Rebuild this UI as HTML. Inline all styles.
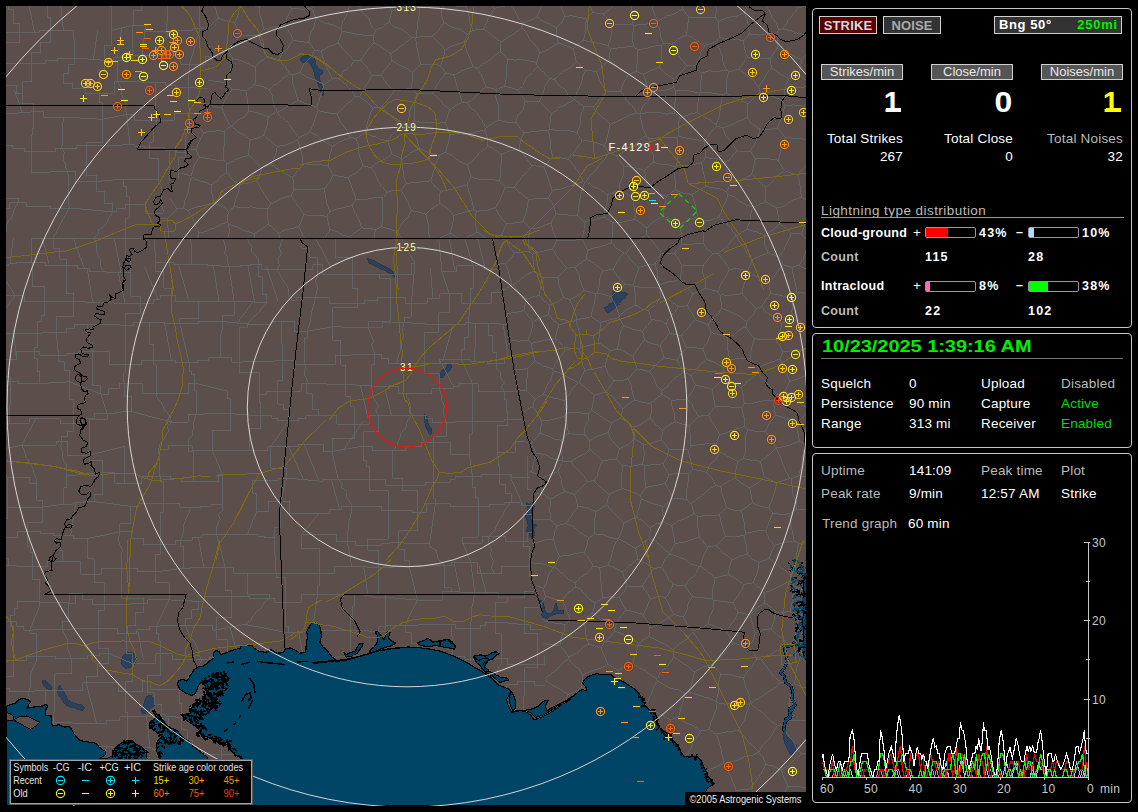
<!DOCTYPE html>
<html><head><meta charset="utf-8"><title>NexStorm</title>
<style>
html,body{margin:0;padding:0;background:#000;}
body{width:1138px;height:812px;overflow:hidden;position:relative;font-family:"Liberation Sans",sans-serif;}
.pn{position:absolute;border:1px solid #c8c8c8;border-radius:4px;box-sizing:content-box;}
.btn{position:absolute;border:1px solid #d0d0d0;text-align:center;white-space:nowrap;}
.t{position:absolute;font-size:13.5px;line-height:16px;white-space:nowrap;letter-spacing:0.2px;}
.b{font-weight:bold;font-size:12.5px;letter-spacing:0.3px;}
.r{text-align:right;}
.big{font-size:29px;line-height:30px;letter-spacing:0;}
.bar{position:absolute;width:49px;height:9px;border:1px solid #999;border-radius:2px;}
.bar i{display:block;height:9px;}
#map{position:absolute;left:6px;top:6px;width:800px;height:800px;overflow:hidden;background:#5c4e4a;}
svg text{font-family:"Liberation Sans",sans-serif;}
</style></head><body>
<div id="map">
<svg width="800" height="800" viewBox="6 6 800 800" style="position:absolute;left:0;top:0" shape-rendering="crispEdges">
<path d="M6 706.4 L10.5 704.6 L15.8 702.8 L19.3 699.3 L23.7 698.5 L28.1 699.7 L30.8 702 L29 704.6 L27.2 708.1 L32.5 707.2 L42.2 706 L46 704.6 L47.5 706.4 L46 709 L45.3 715.1 L51 716 L51.8 723.9 L52.7 726 L58.9 724.8 L64.1 727.1 L69.4 726.6 L72.1 730.1 L73.8 733.6 L77.3 738 L80 740.6 L85.2 741.5 L91.4 742.4 L95.8 743.3 L98.4 745.9 L101.9 749.4 L105.4 751.2 L105.4 754.7 L100.2 758.2 L106 759 L112 756 L114 750.3 L116.9 746 L121 743.3 L127.4 740.5 L132.3 740.5 L136.6 744.7 L142.2 747.5 L147 751.7 L146.4 757.3 L148 759.5 L160.5 759.5 L156.2 750.3 L157 741.9 L161.9 736.2 L156.2 732 L149.2 726.4 L149.9 722.2 L153.4 720 L156.2 716.6 L153.4 712.3 L152.5 710.2 L154.1 710.2 L157.6 715.1 L163.3 722.2 L170.3 727.8 L177.3 730.6 L180.1 734.8 L184.4 739 L190 741.9 L192.8 746.1 L198.4 750.3 L206.8 756.6 L208 759.5 L243 759.5 L240.6 757.3 L235 754.5 L230.8 750.3 L228 743.3 L223.7 741.9 L219.5 744.7 L215.3 739 L209.7 737.6 L204 736.2 L201.2 733.4 L198.4 729.2 L195.6 726.4 L191.4 723.6 L187.2 720.8 L183 718 L184.4 715.1 L190 713.7 L191.4 708.1 L195.6 703.9 L201.2 701.1 L204 696.9 L206.8 692.7 L205.4 687 L204 682.8 L203.6 681.3 L200.1 683.1 L197.5 687.5 L195.7 693.6 L191.3 695.4 L185.1 692.7 L179.9 689.2 L177.2 683.9 L179 680.4 L183.4 679.5 L186.9 681.3 L190.4 675.1 L193.9 669.9 L197.5 667.2 L202.7 666.4 L208 662.8 L210.6 660.2 L214.1 657.6 L213.3 653.2 L215.9 650.5 L219.4 651.4 L220.3 654.9 L227.3 652.3 L234.4 649.7 L240.5 647.9 L241.4 645.3 L251.9 645.6 L253.7 647.9 L259 651.4 L266 652.3 L271.3 649.7 L276.5 653.2 L283.6 652.7 L285.3 648.8 L290.6 647.9 L295.9 650.5 L299.4 653.2 L304.1 652.7 L305.8 652.7 L306.2 643.9 L307.6 636.9 L306.7 631.6 L308.5 628.1 L311.1 623.7 L312.8 622.5 L315.5 622.8 L319 624.6 L320.8 629.9 L321.3 636.9 L319.9 642.2 L322.5 646.6 L326 649.2 L328.7 652.7 L332.2 657.1 L334.8 658.9 L335.7 661.5 L342.7 660.6 L351.5 658.9 L360.3 656.2 L369.1 653.6 L377.9 651 L388.4 649.2 L399 647.8 L409.5 647.1 L420.1 647.8 L430.6 649.2 L439.4 651 L447 653.6 L454.1 656.2 L461.1 659.8 L468.1 663.3 L475.1 667.7 L481.3 671.2 L486.6 674.7 L491 677.3 L494.5 680.8 L498.9 685.2 L503.3 687 L508.5 688.8 L511.2 691.4 L513.8 695.8 L515.6 701.9 L515.2 708.1 L512.1 712.5 L515.6 711.1 L522.6 710.7 L527.9 709.8 L533.1 708.6 L538.4 706.3 L541.1 703.7 L543.7 701.1 L548.1 700.5 L546.3 703.7 L545.4 707.2 L547.2 710.7 L552.5 707.2 L559.5 703.7 L566.5 700.2 L573.6 695.8 L578.8 691.4 L582.4 689.6 L585.9 690.5 L586.7 687.9 L584.1 685.2 L582.4 682.6 L585 679.1 L588.5 676.4 L592.9 674.7 L597.3 673.5 L599.9 674.7 L605.2 674.2 L611.4 674.7 L614 677.3 L619.3 680 L626.3 683.5 L631.6 687 L636.4 690.5 L639.9 694.9 L642.5 700.2 L642.5 700 L645.1 705.3 L649.5 709.7 L654.8 712.3 L656.6 717.6 L657.5 722.8 L660.1 728.1 L664.5 731.6 L670.6 735.1 L672.4 739.5 L675.9 743.1 L679.4 748.3 L681.2 752.7 L683.8 756.2 L690.8 756.2 L697.9 757.1 L701.4 760.6 L703.1 765.9 L705.8 770.3 L707.5 775.6 L711.9 780.8 L713.7 784.4 L710.2 786.1 L707.5 787.9 L705.8 791.4 L706 806 L6 806Z" fill="#004466" stroke="#000" stroke-width="1.2"/>
<path d="M806.5 572 L804.5 576 L803.2 584 L804 592 L802.8 600 L803.5 612 L802.5 622 L803.5 634 L803 646 L804 656 L806.5 660Z" fill="#004466" stroke="#000" stroke-width="1.2"/>
<path d="M343.6 651.8 L346.2 654.5 L350.6 652.7 L355 651 L357.7 646.6 L360.3 643.1 L362.9 643.9 L362.1 646.6 L359.4 650.1 L356.8 653.6 L351.5 656.2 L346.2 657.1Z" fill="#004466" stroke="#000" stroke-width="1.2"/>
<path d="M370 650.1 L374.4 646.6 L377 643.1 L377.9 636.9 L375.2 631.6 L377.9 631.6 L381.4 636 L384 639.5 L385.8 635.1 L387.5 631.3 L390.2 632.5 L388.4 637.8 L391.1 640.4 L395.4 643.1 L391.9 645.7 L385.8 647.1 L379.6 649.2 L374.4 651.8 L370 652.7Z" fill="#004466" stroke="#000" stroke-width="1.2"/>
<path d="M417.4 643.1 L420.1 641.8 L423.6 640.8 L428 638.3 L430.6 640.1 L432.4 642.2 L437.6 641.3 L442.9 640.1 L448.2 639.5 L451.7 641.3 L455.2 646 L454.3 648.9 L449.1 647.5 L444.7 646.6 L439.4 646 L434.1 645.7 L428.8 646.6 L423.6 646 L419.2 644.8Z" fill="#004466" stroke="#000" stroke-width="1.2"/>
<path d="M440 641.3 L443.5 640.4 L447.9 639.5 L450.5 642.2 L453.2 643.9 L455.5 647.1 L454.1 649.2 L448.8 647.8 L443.5 647.1 L440 646Z" fill="#004466" stroke="#000" stroke-width="1.2"/>
<path d="M473.4 656.2 L476.9 655.4 L481.3 654.8 L484.8 656.2 L489.2 654.5 L492.7 652.4 L496.2 651.8 L498.9 653.6 L495.4 655.9 L492.7 658.9 L488.3 660.6 L485.7 664.1 L483.9 667.7 L486.6 670.3 L491 672.1 L496.2 674.7 L500.6 677.3 L507.7 678.2 L508.5 680 L503.3 681.2 L499.8 682.6 L496.2 679.1 L491.8 675.6 L486.6 672.9 L482.2 669.4 L480.4 665 L477.8 661.5 L475.1 659.8Z" fill="#004466" stroke="#000" stroke-width="1.2"/>
<path d="M473.7 656.2 L476.3 658.9 L478.9 660.6 L481.6 658.9 L485.1 658 L488.6 658.9 L487.7 661.5 L483.3 663.3 L485.1 667.7 L488.6 670.3 L486.8 672.1 L482.4 669.4 L479.8 665 L476.3 662.4Z" fill="#004466" stroke="#000" stroke-width="1.2"/>
<path d="M14.1 719.5 L19.3 716.9 L26.4 716 L34.3 719.5 L39.5 722.2 L36 726 L30.8 729.2 L26.4 727.5 L21.1 723.9 L15.8 721.3Z" fill="#5c4e4a" stroke="#000" stroke-width="1"/>
<path d="M6.2 712.5 L9.7 713.4 L13.2 716 L14.1 719.5 L10.5 720.8 L6.2 720.8Z" fill="#5c4e4a" stroke="#000" stroke-width="1"/>
<path d="M511.2 691.4 L508.9 694.9 L506.8 699.3 L507.7 704.6 L510.3 709.8 L512.1 712.7 L512.8 710.4 L510.3 705.4 L509.1 700.2 L509.9 695.8Z" fill="#5c4e4a" stroke="#000" stroke-width="1"/>
<path d="M522.6 711.1 L527.9 712.7 L531.4 716 L534 719.9 L538.4 718.3 L543.7 716.2 L549 713.5 L554.2 710 L557.8 707.4 L561.3 704.7 L560.4 704 L556 706.9 L550.7 710.7 L545.4 713.9 L540.2 716 L535.8 717.4 L533.1 715.1 L530.5 712.5 L526.1 710.7Z" fill="#5c4e4a" stroke="#000" stroke-width="1"/>
<path d="M563 702.8 L570.1 698.4 L570.4 699.3 L563.9 703.7Z" fill="#5c4e4a" stroke="#000" stroke-width="1"/>
<path d="M299.9 59.1 L304.5 55.4 L310.1 55.4 L314.7 58.2 L315.6 64.6 L319.3 69.3 L323 71.1 L322.1 73.9 L319.3 75.7 L320.2 81.3 L323 88.6 L323 96 L321.1 92.3 L318.4 84.9 L315.6 77.6 L313.7 71.1 L311 64.6 L307.3 60.9 L302.7 62.8Z" fill="#2a405c" stroke="#22364f" stroke-width="0.8"/>
<path d="M613.3 291.2 L618.1 292.8 L622.9 292 L627.7 293.6 L625.3 297.6 L622.1 300 L619.7 303.2 L616.5 305.6 L614.1 308.8 L610.9 311.2 L607.7 313.3 L605.6 310.4 L604 307.2 L606.9 306.9 L609.3 304 L612.5 303.2 L613.3 299.2 L612.5 295.2Z" fill="#2a405c" stroke="#22364f" stroke-width="0.8"/>
<path d="M539.3 600 L541.9 603.5 L542.8 608.8 L541.6 615.8 L543.7 617.6 L547.2 619.3 L549.8 616.7 L553.4 614.9 L557.8 613.2 L563 613.7 L563.9 610.9 L561.3 610.2 L557.4 610.9 L556.9 603.5 L555.1 603.5 L554.2 608.8 L552.5 612.3 L549.8 613.7 L546.3 613.2 L544.6 608.8 L543.7 603.5 L541.9 600Z" fill="#2a405c" stroke="#22364f" stroke-width="0.8"/>
<path d="M784 729.9 L785.7 735.1 L791 740.4 L796.3 745.7 L795.4 752.7 L790.1 754.5 L787.5 749.2 L784.9 743.9 L783.1 735.1Z" fill="#2a405c" stroke="#22364f" stroke-width="0.8"/>
<path d="M367.4 258.6 L372.8 260.1 L381.8 264.8 L390.9 269.5 L396.3 275.6 L393.4 275.9 L385.4 270.9 L376.4 266.6 L369.2 263Z" fill="#2a405c" stroke="#22364f" stroke-width="0.8"/>
<path d="M386.2 270 L390.9 270 L396.3 276.5 L393.4 276.5Z" fill="#2a405c" stroke="#22364f" stroke-width="0.8"/>
<path d="M439.1 377.4 L441.5 370.4 L446.6 366.9 L448 363.4 L452 365.7 L449.7 370.4 L445 373.9 L442.6 377.9Z" fill="#2a405c" stroke="#22364f" stroke-width="0.8"/>
<path d="M424.3 413.8 L426.3 416.7 L428.3 417.7 L427.3 421.7 L429.3 425.6 L431.6 428.6 L431.6 432.5 L430.2 434.5 L428.3 431.5 L426.3 427.6 L424.9 422.7 L424.3 417.7Z" fill="#2a405c" stroke="#22364f" stroke-width="0.8"/>
<path d="M526.2 502.5 L529.8 504.4 L533.3 501.5 L534.1 506.4 L531.7 512.3 L530.7 518.2 L532.7 524.1 L536.7 525.1 L533.7 529.1 L534.7 534 L532.7 538.9 L529.8 536.9 L528.8 532 L525.8 531 L528.2 526.1 L526.8 520.2 L525.4 516.3 L527.4 511.3 L527.8 507.4Z" fill="#2a405c" stroke="#22364f" stroke-width="0.8"/>
<path d="M123 655.9 L126.5 652.9 L130.9 651.9 L135.3 654.1 L136.7 659.4 L134.4 664.7 L130.1 667.7 L125.1 668.2 L122.1 665.6 L121.3 660.3Z" fill="#2a405c" stroke="#22364f" stroke-width="0.8"/>
<path d="M42.2 680.5 L45.7 680.5 L49.2 684 L51.8 687.5 L51 689.6 L46.6 688.8 L43.9 685.8Z" fill="#2a405c" stroke="#22364f" stroke-width="0.8"/>
<path d="M57.1 691.1 L59.8 684.9 L61.2 688.4 L63.6 691.1 L65.9 695.4 L67.7 699.8 L72.1 702.5 L77.3 704.2 L82.6 705.1 L84.7 708.1 L82.6 710.9 L78.2 709.5 L73.8 707.4 L69.4 706.9 L65 704.2 L61.5 699 L58.9 695.4Z" fill="#2a405c" stroke="#22364f" stroke-width="0.8"/>
<path d="M140.6 709.5 L144.1 702.5 L146.7 696.3 L151.1 695.4 L154.7 699.8 L154.7 705.1 L149.4 709.5 L145.9 713 L142.4 713Z" fill="#2a405c" stroke="#22364f" stroke-width="0.8"/>
<path d="M793.6 585.8 L801.3 589.4 L803.2 589.5 M793.6 585.8 L793.1 594.4 L792 602.8 L790.2 611.2 M790.2 611.2 L797.6 617.2 M797.6 617.2 L802.6 615.6 M806 269.2 L805.9 269.1 L798.3 265.3 M796.6 292.4 L806 293.2 M796.6 292.4 L795.7 284 L793.3 275.8 L792.1 267.4 M792.1 267.4 L798.3 265.3 M798.3 265.3 L803 258.5 L806 251.4 M801.3 233.7 L806 239.1 M801.3 233.7 L804.2 226.4 L806 224.2 M791.4 233.7 L801.3 233.7 M791.4 233.7 L786 228.2 L779.4 224 M801.7 197.2 L806 199.9 M801.7 197.2 L792.9 199.8 L785.3 205.3 L776.5 207.9 M779.4 224 L778.3 215.9 L776.5 207.9 M797.6 617.2 L796.8 626 L795.4 634.8 L792.9 643.4 M801.9 650.7 L792.9 643.4 M801.9 650.7 L799.8 658.9 L796.9 667 L795.7 675.3 L794.4 683.7 M806 688 L802.2 687.1 L794.4 683.7 M668.8 474.5 L663 463.9 M668.8 474.5 L678.7 473.4 L688.7 473.5 M663 463.9 L667.2 456.9 L669 449 M688.7 473.5 L692.6 469.7 M692.6 469.7 L690.5 459.4 L687.8 449.3 M687.8 449.3 L678.4 449.4 L669 449 M668.8 474.5 L665.2 483.4 M688.7 473.5 L688.2 482.4 L686.4 491.2 L687.1 500.1 M687.1 500.1 L680.3 498.3 L673.2 498.2 M665.2 483.4 L669.2 490.8 L673.2 498.2 M663 463.9 L653.8 464.5 L644.7 465.7 M665.2 483.4 L655.7 485.6 L646.1 487.3 M644.7 465.7 L644.6 472.9 L644.9 480.1 L646.1 487.3 M673.2 498.2 L662.8 506.7 M662.8 506.7 L655.5 504.6 L648.4 501.8 L641.3 499 M641.3 499 L640 495.3 M640 495.3 L646.1 487.3 M636.3 517.2 L643.9 521.7 L650.3 527.8 M636.3 517.2 L639 508.1 L641.3 499 M662.8 506.7 L662.9 514.2 L663.6 521.6 M650.3 527.8 L656.5 523.7 L663.6 521.6 M692.6 469.7 L699.6 470.2 L706.3 472.5 M687.1 500.1 L691.3 503.8 M691.3 503.8 L697.2 498.9 L703.3 494.3 L709.3 489.3 L715.9 485.2 M706.3 472.5 L712 478.2 L715.9 485.2 M786.7 806 L780.9 801.9 M780.9 801.9 L784 793.7 L788.2 786 M788.2 786 L795.4 786.7 L802.6 787.1 L806 787.7 M791.8 296 L792.6 303.9 L791.8 311.8 L792.7 319.7 M791.8 296 L796.6 292.4 M806 324.2 L799.4 322.8 L792.7 319.7 M806 569.4 L803.7 569.7 L795.4 569.8 M793.6 585.8 L790.2 581.2 M790.2 581.2 L790.6 574.8 M795.4 569.8 L790.6 574.8 M790.2 581.2 L783.7 584.2 L777.2 587.3 L770.8 590.7 L763.9 592.6 M763.9 592.6 L758.5 587.7 L753.2 582.7 M753.2 582.7 L757.1 572.9 L758.9 562.5 M758.9 562.5 L769.1 558.2 M790.6 574.8 L783.3 569.3 L775.9 564.1 L769.1 558.2 M795.4 569.8 L796 561 L796.7 552.2 L798.4 543.5 M769.1 558.2 L774.3 545.4 M774.3 545.4 L784.1 542.4 L794.2 541.1 M798.4 543.5 L794.2 541.1 M774.3 545.4 L769 538.6 L765.7 530.6 M772.8 512.9 L769.2 521.7 L765.7 530.6 M772.8 512.9 L781.3 514.6 L789.9 513.7 M794.2 541.1 L792.4 532 L790.2 523 L789.9 513.7 M776.6 395.4 L772.6 389.2 L767.6 384 L762.6 378.7 L757.6 373.4 M776.6 395.4 L773.6 400.5 M773.6 400.5 L766.1 400.3 L758.8 401.9 L751.6 403.4 L744.1 403.7 M744.1 403.7 L743.5 395.7 L741.6 388 M741.6 388 L746.1 382.2 L752 378 L757.6 373.4 M706.9 359.4 L700.8 364 L696.2 370 L690.5 375 M706.9 359.4 L715.2 362.8 L723.2 367 M723.2 367 L723.8 377.1 M723.8 377.1 L718.6 383.7 L712.4 389.3 M712.4 389.3 L704.1 386.9 L695.7 385.3 M695.7 385.3 L690.5 375 M744.1 403.7 L741.7 407.7 M741.6 388 L732.9 382.2 L723.8 377.1 M741.7 407.7 L732.9 407.3 L724.2 406.3 L715.4 406.2 M715.4 406.2 L713.4 397.9 L712.4 389.3 M726.4 507.7 L733.8 510.3 L741.6 510.5 M726.4 507.7 L719.8 514.5 M719.8 514.5 L721.2 521.9 L723 529.3 L725.6 536.4 M741.6 510.5 L743.3 518.1 L744.6 525.8 L745.4 533.5 M725.6 536.4 L734.8 537.1 L744 535.3 M745.4 533.5 L744 535.3 M758.9 562.5 L752.6 559.1 L747.3 554.1 M765.7 530.6 L755.4 531.1 L745.4 533.5 M747.3 554.1 L746.1 544.6 L744 535.3 M699.3 537.2 L697.9 527 L697.5 516.8 M699.3 537.2 L691.4 539.7 L683.5 542.1 L675.2 543.4 M675.2 543.4 L673.7 534.5 L671.7 525.8 M671.7 525.8 L678.7 520.8 L686.7 517.9 L694.1 513.6 M694.1 513.6 L697.5 516.8 M691.3 503.8 L694.1 513.6 M663.6 521.6 L671.7 525.8 M720.9 486.8 L715.9 485.2 M720.9 486.8 L721.9 494 L724.7 500.7 L726.4 507.7 M719.8 514.5 L712.5 515.9 L704.9 515.3 L697.5 516.8 M683.4 372.2 L690.5 375 M683.4 372.2 L677.3 376.2 L671.8 380.9 L667.2 386.5 L661.4 390.8 M686.8 398.9 L691.6 392.3 L695.7 385.3 M686.8 398.9 L679.1 399.6 L671.4 400.5 M671.4 400.5 L661.5 394.5 M661.4 390.8 L661.5 394.5 M642.6 464.1 L632.9 466.1 L623 465.9 M642.6 464.1 L644.1 454.5 L643.8 444.7 M643.8 444.7 L634.9 439 M634.9 439 L627.7 444.8 L619.4 448.9 M619.4 448.9 L616.7 459.2 M623 465.9 L616.7 459.2 M644.7 465.7 L642.6 464.1 M621.9 488.4 L621.2 480.8 L621.8 473.3 L623 465.9 M621.9 488.4 L631.1 491.5 L640 495.3 M669 449 L661.4 439.7 M661.4 439.7 L652.8 442.8 L643.8 444.7 M609.3 494.4 L601 488.1 L593.6 480.8 M609.3 494.4 L621.9 488.4 M593.6 480.8 L597 474.5 L599.6 467.8 L602.4 461.2 M602.4 461.2 L609.5 459.6 L616.7 459.2 M771 806 L780.9 801.9 M767.3 806 L762.5 800.9 L756.1 795.3 L750.6 788.8 M750.6 788.8 L754.2 782.6 L759.1 777.2 L762.5 770.8 L765.8 764.4 M788.2 786 L784 778.3 L781.2 769.9 M781.2 769.9 L773.8 766.3 L765.8 764.4 M736.2 791 L733.8 783.9 L730.9 776.9 L727.8 770.1 L724 763.5 M736.2 791 L743.3 789.3 L750.6 788.8 M724 763.5 L731 761.6 L738.2 760 L744.8 756.7 L752.1 755.4 L758.8 752.3 M765.8 764.4 L763.3 757.8 L758.8 752.3 M609.3 494.4 L606.6 504.8 M593.6 480.8 L587.3 481.4 M574.5 494.4 L580.7 487.8 L587.3 481.4 M574.5 494.4 L578.1 506.1 M578.1 506.1 L587.4 507.9 L596.1 511.6 M606.6 504.8 L596.1 511.6 M636.3 517.2 L623.9 523.1 M606.6 504.8 L612 511.2 L618.1 517 L623.9 523.1 M732.8 602.8 L738 612.1 M732.8 602.8 L723.4 601.5 L714 600.5 M708.7 623.7 L709.4 615.8 L713.4 608.5 L714 600.5 M708.7 623.7 L717.5 627.2 L726.4 630.5 M726.4 630.5 L730.4 624.5 L735.2 619 L738 612.1 M779.8 359 L783.9 366 L786.3 373.9 L790.2 381.1 M779.8 359 L783 351.7 M783 351.7 L791.4 351 L799.7 349.1 L806 348.8 M806 375.6 L803.6 376.2 L797.2 379.5 L790.2 381.1 M784.9 391.3 L790.2 381.1 M784.9 391.3 L776.6 395.4 M758.1 367.5 L757.6 373.4 M758.1 367.5 L765.3 364.6 L772.6 361.8 L779.8 359 M792.7 319.7 L781.9 323.5 M776.5 339.8 L779.8 331.8 L781.9 323.5 M776.5 339.8 L783 351.7 M784.9 391.3 L791.1 395 L797.1 398.9 L801.8 404.8 L806 406.8 M772.8 512.9 L768.5 507.8 M741.6 510.5 L752.6 502.8 M768.5 507.8 L760.3 506.3 L752.6 502.8 M735 478.3 L727.4 481.6 L720.9 486.8 M735 478.3 L742.1 483.5 L749.7 487.8 M752.6 502.8 L751.2 495.3 L749.7 487.8 M798.4 543.5 L806 542.6 M806 509.6 L796.6 509.3 M796.6 509.3 L789.9 513.7 M773.6 400.5 L774.2 407.8 L775.7 415 M806 412.5 L803.2 416.4 L797.5 423.7 M797.5 423.7 L790.6 419.9 L783.2 417.3 L775.7 415 M721.4 308.3 L728.1 310.7 L734.5 314 L740.8 317.3 L746.5 321.7 M721.4 308.3 L720.5 294.7 M720.5 294.7 L727.9 295.5 L735.2 294.5 L742.6 293.5 M746.5 321.7 L752.4 315.7 L756.6 308.4 M742.6 293.5 L749.3 301.3 L756.6 308.4 M791.8 296 L784.6 296.4 L777.6 294.5 L770.6 293.7 M781.9 323.5 L775.9 317 L767.6 313.3 L761.5 306.9 M770.6 293.7 L765.6 300 L761.5 306.9 M754.1 338.5 L749.6 332.9 L745.9 326.9 M754.1 338.5 L751.3 348.4 L750 358.6 M745.9 326.9 L739.3 329.7 L734 334.9 L727.2 337.3 M727.2 337.3 L727.1 345 L728.2 352.5 L730.4 359.8 M750 358.6 L740.1 358.2 L730.4 359.8 M746.5 321.7 L745.9 326.9 M776.5 339.8 L769 339.8 L761.5 339.9 L754.1 338.5 M761.5 306.9 L756.6 308.4 M758.1 367.5 L750 358.6 M723.2 367 L730.4 359.8 M801.7 197.2 L800.2 189.9 L799.9 182.4 L797.5 175.3 M765.7 201.8 L776.5 207.9 M765.7 201.8 L765.6 187.8 M765.6 187.8 L771.7 182 L777.4 175.8 L784.3 170.9 M797.5 175.3 L784.3 170.9 M715.9 125.1 L718.8 117.9 L720.1 110.3 L721.3 102.6 L722.6 95 M715.9 125.1 L710.1 120.3 L703.7 116.4 L697.4 112.4 M697.4 112.4 L697.9 102.7 L699.4 93.1 M722.6 95 L715.3 93.4 L708 92.6 L700.6 92.1 M700.6 92.1 L699.4 93.1 M716.5 126.4 L722.4 127.9 M722.4 127.9 L731 125 L739.2 121.1 L747.5 117.5 M747.5 117.5 L747.8 104 M726.2 92.6 L733 97.2 L740.7 100 L747.8 104 M726.2 92.6 L722.6 95 M675.3 90 L675.7 97.7 L674.4 105.4 L675 113.2 M675.3 90 L683.5 90 L691.4 91.6 L699.4 93.1 M679.5 118 L688.2 114.5 L697.4 112.4 M679.5 118 L675 113.2 M701.7 72.6 L709.8 70.9 L718.2 71.6 L726.2 69.9 M701.7 72.6 L700.8 82.3 L700.6 92.1 M726.2 69.9 L729.1 71.8 M726.2 92.6 L727 85.7 L726.9 78.6 L729.1 71.8 M765.6 187.8 L758.8 181 L751.8 174.3 M778 160.1 L784.3 170.9 M778 160.1 L770.4 159 L762.7 158.7 L755.1 158.5 M755.1 158.5 L753.6 166.4 L751.8 174.3 M777.2 127.9 L785.2 137 M777.2 127.9 L768.7 129.8 L760 129.2 M760 129.2 L757.7 136.9 L754.4 144.2 L750.3 151.1 M778 160.1 L780.4 152.4 L782.4 144.6 L785.2 137 M755.1 158.5 L750.3 151.1 M722.4 127.9 L726.1 135.9 L732.4 142.4 L736.1 150.5 M760 129.2 L752.9 124.3 L747.5 117.5 M750.3 151.1 L743.2 152 L736.1 150.5 M603.2 14.1 L610.8 8.4 L612.7 6 M603.2 14.1 L592.4 12.4 M590.3 6 L592.4 12.4 M582.6 140.8 L577.3 146.5 L572.7 152.8 L568.4 159.3 M582.6 140.8 L577 132.5 M568.4 159.3 L560.8 157.7 L553 157.4 M548.5 130.6 L550.2 139.5 L550.5 148.7 L553 157.4 M548.5 130.6 L549.7 129.3 M577 132.5 L568 130.7 L558.7 130.8 L549.7 129.3 M596.6 71.4 L598.9 78.3 L602.1 84.8 L606.2 90.9 M596.6 71.4 L585.8 70.4 M585.8 70.4 L582.4 77.5 L580.5 85.2 L576.9 92.3 L574.2 99.7 M606.2 90.9 L600.3 99.1 L593.4 106.5 M593.4 106.5 L584.3 106.7 M584.3 106.7 L574.2 99.7 M604.3 145.3 L597.3 143 L590.1 141.1 L582.6 140.8 M604.3 145.3 L606.9 138.5 L608.6 131.4 L610.1 124.3 M610.1 124.3 L604.2 118.7 L598.2 113.1 L593.4 106.5 M577 132.5 L580.5 124.2 L580.8 115 L584.3 106.7 M548.5 130.6 L540.4 130.8 L532.3 131.7 L524.2 132.8 M524.2 132.8 L520.4 140.5 L519 149.1 M519 149.1 L525.6 157.2 L531.7 165.7 M553 157.4 L543.8 166.4 M543.8 166.4 L531.7 165.7 M568.4 159.3 L574.3 166.2 L579.5 173.5 L583.9 181.3 M543.8 166.4 L546.8 174.3 L549.5 182.3 L552.2 190.3 M583.9 181.3 L576.2 184.1 L568.2 186.4 L560.4 189.1 L552.2 190.3 M531.7 165.7 L527.9 171.6 L522.3 176.1 L518.4 181.9 L513.7 187.1 M513.7 187.1 L521.1 193.5 L528.7 199.6 M528.7 199.6 L538.6 198.3 L548.6 198.3 M552.2 190.3 L548.6 198.3 M565.8 491.6 L562.1 485.5 L561.2 478.2 L557.7 471.9 M565.8 491.6 L557.9 494.8 L550.9 499.4 M557.7 471.9 L549.8 474.5 L542.4 478.3 M550.9 499.4 L541.8 493 M542.4 478.3 L540.9 485.6 L541.8 493 M550.9 499.4 L549.7 509.5 L550.8 519.7 M550.8 519.7 L543.6 520 L536.5 519.6 L532.4 519 M541.8 493 L533.3 494.8 L532.4 495.3 M542.4 478.3 L531.7 471.5 M529.4 472.3 L531.7 471.5 M706.9 359.4 L702.7 349.2 M727.2 337.3 L719.3 334.9 L711.3 332.3 M702.7 349.2 L708 341.2 L711.3 332.3 M721.4 308.3 L717.9 314.6 L711.9 318.8 L707.9 324.7 M707.9 324.7 L711.3 332.3 M753.2 207 L750.6 214.4 L749.9 222.3 L746.6 229.4 M753.2 207 L765.7 201.8 M779.4 224 L772.2 230.4 L763.9 235.5 M763.9 235.5 L755.5 231.7 L746.6 229.4 M716.5 126.4 L709.5 133.5 L703.9 141.7 M679.5 118 L678.1 126.9 L678.4 135.8 M703.9 141.7 L695.5 139.4 L686.8 138.3 L678.4 135.8 M706.3 472.5 L709.7 464.9 L716.1 459.2 L719.7 451.7 M735 478.3 L735.7 469.7 L738 461.3 M738 461.3 L728.7 456.8 L719.7 451.7 M691 445.5 L690.5 435.5 L689.2 425.5 M691 445.5 L699.4 444.8 L707.8 443.6 L716.3 444.1 M716.3 444.1 L719.5 434.8 M719.5 434.8 L716.2 428.1 L712.2 421.9 L708.6 415.4 M689.2 425.5 L699.4 416.1 M699.4 416.1 L708.6 415.4 M687.8 449.3 L691 445.5 M675.2 421.8 L668.3 425.4 L662.3 430.5 M675.2 421.8 L682.1 424 L689.2 425.5 M661.4 439.7 L662.3 430.5 M719.7 451.7 L716.3 444.1 M741.7 407.7 L744 417 L744.3 426.7 M715.4 406.2 L708.6 415.4 M744.3 426.7 L736 429.1 L727.8 432.1 L719.5 434.8 M675.2 421.8 L674.5 414.6 L672.4 407.7 L671.4 400.5 M686.8 398.9 L692 403.9 L694.5 410.9 L699.4 416.1 M701.7 72.6 L694.7 65.5 M715.8 42.4 L719.4 48.9 L722.1 55.7 L723.1 63.2 L726.2 69.9 M715.8 42.4 L704.9 45.4 M694.7 65.5 L699 59.3 L701.1 52 L704.9 45.4 M747.8 6 L744.3 12.5 M715.9 6 L716.2 10.7 L715.5 17.9 M715.5 17.9 L718.3 21.3 M744.3 12.5 L735.9 16.3 L726.8 17.7 L718.3 21.3 M715.8 42.4 L719.7 37.2 M689.1 18 L687.4 26.3 L686.7 34.8 M689.1 18 L697.9 17.1 L706.7 17.7 L715.5 17.9 M704.9 45.4 L698.7 42.1 L692.9 38.1 L686.7 34.8 M719.7 37.2 L718.8 29.3 L718.3 21.3 M578.1 506.1 L573.9 512 L570.1 518.1 L565.5 523.7 M596.1 511.6 L594.9 519 L594.8 526.5 L594.1 533.9 M594.1 533.9 L588.5 537.3 M588.5 537.3 L580.7 533 L573.7 527.4 L565.5 523.7 M574.5 494.4 L565.8 491.6 M550.8 519.7 L557.2 525.7 M565.5 523.7 L557.2 525.7 M725.6 536.4 L716.8 545.4 M699.3 537.2 L708 547.1 M708 547.1 L716.8 545.4 M747.3 554.1 L739.1 556.2 L731.6 560.2 M716.8 545.4 L723.5 553.5 L731.6 560.2 M743.8 584.5 L753.2 582.7 M743.8 584.5 L736.4 579 L728.4 574.5 M728.4 574.5 L729.3 567.2 L731.6 560.2 M611.7 422.8 L608.3 432.5 M611.7 422.8 L620.8 418 M608.3 432.5 L612.9 441.3 L619.4 448.9 M634.9 439 L633.6 427.4 M620.8 418 L627.6 422.2 L633.6 427.4 M662.3 430.5 L655.5 425 L650.2 418.1 M633.6 427.4 L642.2 423.3 L650.2 418.1 M661.5 394.5 L650.9 403.3 M650.9 403.3 L651.7 410.7 L650.2 418.1 M540.4 604.5 L545.5 596.5 M545.5 596.5 L543.4 588.4 M536.4 585.6 L543.4 588.4 M708.7 623.7 L701.4 628.4 L693.3 631 M726.4 630.5 L730.1 637 L733.2 643.7 M713.2 662.4 L720.8 657.1 L726.2 649.5 L733.2 643.7 M713.2 662.4 L709.1 656.3 L704.8 650.4 L701.2 644 L697.1 638 L693.1 631.8 M734.6 793.2 L735.9 801.6 L735.7 806 M734.6 793.2 L736.2 791 M734.6 793.2 L727.1 794.7 L719.4 795.3 L711.9 796.5 L706.4 798.1 M786.3 720.2 L780.9 724.8 M786.3 720.2 L794.5 720.4 L802.6 720.1 L806 720.4 M780.9 724.8 L784.8 730.8 L789 736.6 L793.7 742.1 L796.9 748.7 L802 753.8 M806 753.8 L802 753.8 M780.9 682.1 L793 684.4 M780.9 682.1 L775.4 687.2 L769.3 691.3 L763.1 695.4 L756.5 699 L750.8 703.8 M793 684.4 L791.3 691.5 L789.7 698.6 L789.7 706 L788.5 713.2 L786.3 720.2 M750.8 703.8 L757.2 709.5 L764.5 714.1 L770.2 720.6 L777.3 725.4 M777.3 725.4 L780.9 724.8 M777.3 725.4 L773.1 732.4 L768.7 739.2 L762.7 744.8 L758.8 752 M781.2 769.9 L788.7 765.3 L794.8 758.9 L802 753.8 M712.6 598.5 L702.4 597.8 L692.2 596.7 M712.6 598.5 L713 588.2 L715.2 578 M715.2 578 L708 571.8 L700.4 566 M685.1 585.6 L689.5 578.8 L695.6 573.4 L699.7 566.3 M685.1 585.6 L692.2 596.7 M714 600.5 L712.6 598.5 M683.2 617.1 L687.3 624.7 L693.3 631 M683.2 617.1 L686.9 610.6 L688.1 603 L692.2 596.7 M743.8 584.5 L740.9 591 L737.2 597.2 L732.8 602.8 M728.4 574.5 L715.2 578 M708 547.1 L703.2 556.2 L700.4 566 M792.9 643.4 L787.5 643.3 M780.9 682.1 L775 677.4 L770.6 671.5 L765.7 665.9 L761.1 660.1 M787.5 643.3 L781.6 648.6 L774.4 651.9 L767.5 655.6 L761.1 660.1 M713.2 662.4 L712.9 664.1 M712.9 664.1 L720.7 674.4 M720.7 674.4 L728.5 674.4 L736 676.5 L743.6 678 M743.6 678 L747.3 671.2 L752.5 665.5 L757.1 659.3 M733.2 643.7 L740.9 644.4 L748.3 646.4 M748.3 646.4 L753.8 652.1 L757.1 659.3 M750.5 703.7 L749.4 694.8 L745.5 686.7 L743.6 678 M761.1 660.1 L757.1 659.3 M758.8 752 L753.8 746.4 L747.8 741.7 L743.6 735.3 L738.1 730.2 M738.1 730.2 L742 724 L745.2 717.5 L747.5 710.6 L750.2 703.9 M796.6 509.3 L796.1 501.5 L792.6 494.2 L792.1 486.4 L790.9 478.8 M768.5 507.8 L772.2 499.7 L775 491.3 L776.7 482.6 M789.8 478.5 L776.7 482.6 M749.7 487.8 L757.6 483.1 L764.2 476.7 M776.7 482.6 L764.2 476.7 M805.8 444.9 L803.1 452.4 L802.5 460.5 L800.7 468.2 L798.5 475.8 M806 477.1 L798.5 475.8 M790.9 478.8 L798.5 475.8 M799.4 441 L791.8 444.3 L784.1 446.7 L775.9 447.9 M799.4 441 L805.8 444.9 M789.8 478.5 L785.7 471.1 L782.5 463.4 L779.7 455.4 L775.9 447.9 M797.5 423.7 L797.8 432.4 L799.4 441 M797.5 175.3 L802.8 169.2 L806 166.5 M785.2 137 L793.5 138.5 L802 138.8 L806 139.5 M766.3 6 L769.6 10.9 L772 17.6 L776.3 23.3 L778.7 30.1 M778.7 30.1 L776.8 33.2 M744.3 12.5 L747 19.4 L748.6 26.6 L749.4 33.9 M776.8 33.2 L767.6 33.7 L758.5 35 L749.4 33.9 M719.7 37.2 L727.5 38.9 L735.5 39.3 L743.3 41 M749.4 33.9 L743.3 41 M796.3 6 L798 7.6 M806 6.4 L798 7.6 M782.2 28.9 L778.7 30.1 M782.2 28.9 L787 21.5 L792.7 14.7 L798 7.6 M806 34.4 L799 33.7 L790.7 30.7 L782.2 28.9 M725.5 161.8 L726.3 169.1 L728.5 175.9 L731.2 182.7 M725.5 161.8 L715.8 158.7 L705.6 157.6 M705.6 157.6 L701.5 162.6 M701.5 162.6 L703 170.6 L705 178.5 L705.7 186.6 M705.7 186.6 L712.9 187.6 L720 189 L726.8 191.5 M731.2 182.7 L726.8 191.5 M736.1 150.5 L731.3 156.6 L725.5 161.8 M751.8 174.3 L745.4 178.2 L738.4 180.7 L731.2 182.7 M703.9 141.7 L705.1 149.6 L705.6 157.6 M753.2 207 L746.4 205 L740.2 201.6 L734.7 197 L728 194.8 M728 194.8 L726.8 191.5 M604.3 145.3 L608.5 152.9 M608.5 152.9 L604.7 159.1 L599.5 164.3 L595.8 170.7 L590 175.3 L585.8 181.3 M486.4 127.2 L482.2 120.5 L477.5 114.3 L471.5 109.1 L466.9 102.8 M486.4 127.2 L498 120.1 M498 120.1 L498 112.4 L498.2 104.8 L495.9 97.2 L496.3 89.6 M466.9 102.8 L474.2 98.4 L479.7 91.8 L486.4 86.8 M486.4 86.8 L496.3 89.6 M636.8 112.9 L631.9 105.2 L625.7 98.5 L620.7 91 M636.8 112.9 L639.9 113.6 M640 113.5 L642.7 106.2 L648.4 100.6 L651 93.3 M651 93.3 L646.5 84 L643.3 74.2 M620.7 91 L623.6 82.2 L628.7 74.4 M628.7 74.4 L636.3 71.3 M643.3 74.2 L636.3 71.3 M610.1 124.3 L616.8 121.7 L623.4 118.5 L629.7 114.8 L636.8 112.9 M606.2 90.9 L613.4 91.5 L620.7 91 M646.1 136 L640 139.8 L634.7 144.9 L627.5 147.1 L622.7 152.8 L616.1 155.9 M646.1 136 L643 128.9 L641.3 121.3 L639.9 113.6 M616.1 155.9 L608.5 152.9 M675.3 90 L673.3 87.4 M675 113.2 L666.2 114.2 L657.5 112.5 L648.7 112.6 L640 113.5 M673.3 87.4 L666 90 L658.3 90.8 L651 93.3 M608.8 60.3 L615.7 64.6 L621.6 70.4 L628.7 74.4 M608.8 60.3 L603 66.1 L596.6 71.4 M608.1 45.7 L611.2 35.7 L612 25.2 M608.1 45.7 L610.4 49.1 M610.4 49.1 L617.9 47.8 L625.6 47.2 L633.2 46.1 M612 25.2 L622.1 24.5 L632.2 24.2 M633.2 46.1 L632.6 35.7 L633.6 25.4 M633.6 25.4 L632.2 24.2 M637.5 49.7 L633.2 46.1 M637.5 49.7 L637.4 56.9 L637 64.1 L636.3 71.3 M608.8 60.3 L610.4 49.1 M603.2 14.1 L608 19.3 L612 25.2 M631.3 6 L632.3 14.5 L632.2 24.2 M656.5 22.9 L657.5 20.5 M656.5 22.9 L648.9 23.9 L641.2 24.4 L633.6 25.4 M657.5 20.5 L653.6 11.9 L652 6 M592.4 12.4 L586.5 18.3 M608.1 45.7 L600 43.5 L591.6 42.1 L583.4 40 M583.4 40 L585.4 33 L585.5 25.6 L586.5 18.3 M549.7 129.3 L550.1 121.4 L551.5 113.6 M551.5 113.6 L558.2 107.9 L566.3 104.4 L573.7 99.7 M515.8 122.2 L518 114.7 L523.1 108.5 L525.4 101.1 M515.8 122.2 L506.7 122.2 L498 120.1 M504.7 86.1 L517.5 89.6 M504.7 86.1 L496.3 89.6 M525.4 101.1 L517.5 89.6 M515.8 122.2 L524.2 132.8 M551.5 113.6 L545.6 107.3 L539.5 101.2 M525.4 101.1 L532.4 101.5 L539.5 101.2 M519 149.1 L509.7 150.8 L501 154.6 M486.4 127.2 L484.8 130.7 M484.8 130.7 L487.4 138 L487.6 145.8 M501 154.6 L494.7 149.5 L487.6 145.8 M681.6 244.7 L688.9 244.9 L696 243.3 L703.3 243.4 M681.6 244.7 L681.6 234.5 L679.4 224.6 M703.3 243.4 L703.4 235.8 L703.5 228.2 L704.8 220.7 M679.4 224.6 L688.4 220.7 L697.4 216.6 M704.8 220.7 L697.4 216.6 M663.4 216.1 L664.3 206.2 L666.3 196.3 M663.4 216.1 L671.7 219.7 L679.4 224.6 M675.4 189.8 L683.5 193.4 L692.2 194.7 M675.4 189.8 L666.3 196.3 M692.2 194.7 L694.4 201.9 L696.3 209.2 L697.4 216.6 M728 194.8 L725.4 202.4 L721.8 209.5 L719.1 217 M692.2 194.7 L698.8 190.3 L705.7 186.6 M719.1 217 L712.2 219.9 L704.8 220.7 M674.4 253.4 L678.7 259.2 L682.1 265.6 M674.4 253.4 L681.6 244.7 M682.1 265.6 L692.6 265.1 L703.1 265.5 M703.3 243.4 L707.3 249.3 L713 253.6 M713 253.6 L707.9 259.4 L703.1 265.5 M682.1 265.6 L680.1 278.3 M680.1 278.3 L685.8 286.6 L692.8 293.9 M692.8 293.9 L705.6 288.5 M703.1 265.5 L702.7 273.3 L705.5 280.8 L705.6 288.5 M720.5 294.7 L717.9 291.5 M707.9 324.7 L695.7 319.7 M692.8 293.9 L687.2 305.6 M695.7 319.7 L691.5 312.6 L687.2 305.6 M705.6 288.5 L717.9 291.5 M792.1 267.4 L783.4 264.8 M770.6 293.7 L769 283 M769 283 L773.8 276.9 L778.1 270.4 L783.4 264.8 M791.4 233.7 L787.5 241.6 L784 249.8 L778.7 256.9 M763.9 235.5 L764.9 244.4 L768 252.8 M768 252.8 L778.7 256.9 M783.4 264.8 L778.7 256.9 M648.9 138.3 L649.3 146.4 L653 154 L653.2 162.2 M648.9 138.3 L658.2 137.9 L667.6 138 L676.9 137.3 M676.9 137.3 L677.5 144.3 L677.1 151.4 L677.6 158.5 L676.4 165.5 M653.2 162.2 L660.4 164.2 L667.9 164.7 L675.1 166.9 M675.1 166.9 L676.4 165.5 M646.1 136 L648.9 138.3 M678.4 135.8 L676.9 137.3 M701.5 162.6 L693.3 164.8 L684.9 165.6 L676.4 165.5 M675.4 189.8 L675.8 182.1 L674.3 174.5 L675.1 166.9 M765.3 431.6 L771.5 439.1 L775.7 447.8 M765.3 431.6 L756.2 431.8 L747.5 429.5 M747.5 429.5 L745 436.6 L745.7 444.1 L745.1 451.5 L742.7 458.6 M775.7 447.8 L768.5 455.2 L760.3 461.4 M742.7 458.6 L751.5 460.3 L760.3 461.4 M775.7 415 L769.8 422.9 L765.3 431.6 M744.3 426.7 L747.5 429.5 M738 461.3 L742.7 458.6 M764.2 476.7 L762.4 469 L760.3 461.4 M673.6 78.8 L665.9 73.7 L659.4 67.1 M673.6 78.8 L680.4 72.5 L686.6 65.7 M686.6 65.7 L681.1 58.9 L677.3 51 L672 44.1 M659.4 67.1 L661.2 60.1 L661.7 52.9 L661.6 45.7 M672 44.1 L663.8 43.5 M661.6 45.7 L663.8 43.5 M673.3 87.4 L673.6 78.8 M643.3 74.2 L651.2 70.5 L659.4 67.1 M694.7 65.5 L686.6 65.7 M686.7 34.8 L678.8 38.5 L672 44.1 M637.5 49.7 L645.5 48.4 L653.4 46.1 L661.6 45.7 M689.1 18 L682.7 9 M682.7 9 L674.7 13.8 L665.8 16.4 L657.5 20.5 M656.5 22.9 L659.9 29.4 L660.4 37 L663.8 43.5 M682.7 9 L682.9 6 M259.1 7.3 L260.6 6 M259.1 7.3 L255.4 6 M476.5 67.8 L472.9 66.5 M476.5 67.8 L480.7 73.7 L483.6 80.2 L486.4 86.8 M466.9 102.8 L462.3 102.5 M462.3 102.5 L460.2 95.6 L457.8 88.8 L455.7 81.9 L453.8 74.9 M472.9 66.5 L463.1 70.2 L453.8 74.9 M304.7 238 L303 235.6 L298.9 226.3 M298.9 226.3 L292.1 228.5 L285 229.8 L278.6 233.1 M278.6 233.1 L279.5 238 M254 238 L254.6 233.5 M254.6 233.5 L261.8 229.2 L268.4 224.1 M278.6 233.1 L268.4 224.1 M556.8 240.9 L553.3 232.2 L551 223.2 M556.8 240.9 L565.2 240.8 L573.7 240.5 L582 239 M582 239 L584 230.6 L584.3 221.9 M556 213.6 L563.2 214.8 L570.5 215.1 L577.8 215.5 M556 213.6 L551 223.2 M577.8 215.5 L584.3 221.9 M586.2 258.7 L587.6 250.3 M586.2 258.7 L575.3 267.3 M587.6 250.3 L582 239 M552.6 249.1 L556.8 240.9 M552.6 249.1 L556.7 256 L561.7 262.2 L567 268.2 M575.3 267.3 L567 268.2 M587.6 250.3 L595.5 247.6 L603.7 245.4 L611.7 242.9 M611.7 242.9 L612.5 232.7 L612.2 222.5 M604.8 217 L612.2 222.5 M604.8 217 L598 218.7 L591.3 220.7 L584.3 221.9 M584.4 181.5 L581.6 189.8 L580.2 198.3 L578.6 206.8 L577.8 215.5 M548.6 198.3 L553.4 205.4 L556 213.6 M522.5 221.7 L525.6 214.6 L527.1 207.1 L528.7 199.6 M522.5 221.7 L530.3 228.7 M530.3 228.7 L537.5 227.9 L544.2 225.2 L551 223.2 M604.8 217 L604.8 209.5 L607 202.3 L607.4 194.9 M585.8 181.3 L592.7 186.3 L600.7 189.6 L607.4 194.9 M646.4 228 L654.3 221.2 L663.4 216.1 M646.4 228 L646.4 234.3 M674.4 253.4 L661.5 253.2 M661.5 253.2 L656.6 246.8 L651.7 240.4 L646.4 234.3 M646.4 228 L641 223.1 L634.9 219.3 M611.7 242.9 L617 248.7 L623.6 252.8 M634.9 219.3 L627.4 221 L619.9 222.6 L612.2 222.5 M646.4 234.3 L641.2 239.1 L635.8 243.6 L629.9 247.5 L625 252.7 M587.3 481.4 L582.5 474.1 L575.9 468.4 L570.6 461.6 M602.4 461.2 L596.4 454.7 L589.4 449.3 M570.6 461.6 L577 457.7 L583.5 454 L589.4 449.3 M608.3 432.5 L598.6 435.7 L589.6 440.6 M589.4 449.3 L589.6 440.6 M553.6 539.9 L555.9 548.2 L559.3 556.2 M553.6 539.9 L545.7 539.9 L538.2 542.2 L531.6 543.3 M559.3 556.2 L554.7 566.5 M531.4 562.1 L535.1 563.3 L544.4 564.1 L553 567.4 M554.7 566.5 L553 567.4 M584.2 552.7 L587.1 545.2 L588.5 537.3 M584.2 552.7 L575.8 553.2 L567.7 555.7 L559.3 556.2 M557.2 525.7 L554.4 532.6 L553.6 539.9 M543.4 588.4 L546.8 581.5 L549 574 L553 567.4 M584.2 552.7 L589 559.1 L593.2 566 M554.7 566.5 L561.1 572.6 L567.6 578.6 L575.3 583.2 M593.2 566 L587.9 572.4 L580.5 576.7 L575.3 583.2 M545.5 596.5 L553.6 599.4 L562.1 600.2 M562.1 600.2 L568.1 592.9 L575.5 587.1 M575.3 583.2 L575.5 587.1 M545.1 680.1 L552.1 684.8 L560.3 689 L567.6 694.6 M567.6 694.6 L566.1 699.8 M650.3 527.8 L649.5 538.6 M675.2 543.4 L669.4 553.8 M669.4 553.8 L663.3 548 L656.9 542.6 L649.5 538.6 M699.7 566.3 L691.7 564.3 L684.8 559.5 L677.3 556.5 L669.4 554 M594.1 533.9 L602.2 534.5 L609.9 537.2 L617.8 539 M623.9 523.1 L621.7 531.2 L618.2 538.8 M649.5 538.6 L642.4 543.4 L635.4 548.2 M618.2 538.8 L627 543.2 L635.4 548.2 M685.1 585.6 L673.1 584.8 M669.4 554 L664.5 560 L661.6 567.1 M673.1 584.8 L668.5 579.3 L665.4 573 L661.6 567.1 M683.2 617.1 L673.8 614.5 M673.8 614.5 L669.5 605.8 L665 597.1 M673.1 584.8 L669.8 591.5 L665 597.1 M635.4 548.2 L637.8 558.8 M637.8 558.8 L645.9 563.5 L653.7 568.8 M661.6 567.1 L653.7 568.8 M771.5 628.5 L763.2 630 L755.3 633 M771.5 628.5 L774.1 620.4 L775.7 612 M755.3 633 L752.4 624.2 L750.3 615.1 M750.3 615.1 L756.8 608.1 L764.8 602.9 M775.7 612 L770.7 606.9 L764.8 602.9 M787.5 643.3 L782.1 638.5 L776.6 633.7 L771.5 628.5 M748.3 646.4 L753 640.3 L755.3 633 M790.2 611.2 L783 612.7 L775.7 612 M738 612.1 L750.3 615.1 M763.9 592.6 L764.8 602.9 M720.7 674.4 L718.3 683.3 L718.1 692.5 L716.1 701.5 M750.2 703.9 L741.8 704.6 L733.5 702.7 L725 704.1 L716.7 702.6 M729.1 71.8 L738.7 69 M743.3 41 L744.8 49.2 L747.3 57.2 M738.7 69 L743.1 63.2 L747.3 57.2 M633.1 197.9 L626.4 193.7 L619.1 190.4 M633.1 197.9 L640.9 194 L648 188.8 M619.1 190.4 L620.1 182.3 L623 174.5 L623.7 166.3 M648 188.8 L646.1 179.6 L644.2 170.4 M644.2 170.4 L634.2 167.4 L623.7 166.3 M634.9 219.3 L635.5 212.1 L633.3 205.1 L633.1 197.9 M607.4 194.9 L619.1 190.4 M666.3 196.3 L656.7 193.6 L648 188.8 M616.1 155.9 L623.7 166.3 M653.2 162.2 L644.2 170.4 M586.5 18.3 L579.4 17.7 L572.4 15.8 L565.1 16.2 M561.3 6 L561.7 7.5 L565.1 16.2 M541.4 6 L539.8 10.3 L537 16.8 M565.1 16.2 L561.6 22.7 L556 27.6 M556 27.6 L549.7 24 L542.9 21.2 L537 16.8 M511.1 6 L515.1 11 L518 17.8 L522.7 23.3 M522.7 23.3 L530 20.3 L537 16.8 M522.5 221.7 L514.3 223.2 L506 223.5 M513.7 187.1 L505.2 187.2 M506 223.5 L499.8 216.1 L495.3 207.7 M495.3 207.7 L499.3 201.2 L502.4 194.3 L505.2 187.2 M501 154.6 L501.2 163.6 L500.1 172.5 L499.9 181.4 M505.2 187.2 L499.9 181.4 M453.5 215.1 L463.5 212.2 L473.6 209.7 M453.5 215.1 L452.8 224.2 L450.2 233 M476.9 231.7 L475.3 221.5 L476.2 211.2 M476.9 231.7 L469.5 235.7 L466.7 238 M473.6 209.7 L476.2 211.2 M458 238 L456.5 237.1 L450.2 233 M506 223.5 L500.8 236.4 M500.8 236.4 L492.7 239.3 M487.1 238 L483.7 236.4 L476.9 231.7 M495.3 207.7 L486 210.5 L476.2 211.2 M440.1 238 L440.8 237.8 L450.2 233 M439.8 203.4 L432.3 208.2 L425.7 214.3 M439.8 203.4 L447.3 208.4 L453.5 215.1 M425.7 214.3 L428 223 L428.3 232.1 L429.9 238 M370.8 167.8 L375.5 173.5 L378.4 180.5 L382.4 186.7 L386.9 192.5 M370.8 167.8 L377.3 162.4 L385.2 159 L391.6 153.5 M401.5 159 L391.6 153.5 M401.5 159 L402.7 167.3 L403.6 175.7 L406.2 183.8 M386.9 192.5 L393.6 190.3 L400.7 190.2 M406.2 183.8 L400.7 190.2 M355.9 138.6 L358.5 145.2 L358.6 152.4 L360.8 159.1 L363.1 165.8 M355.9 138.6 L365 133.1 M363.1 165.8 L370.8 167.8 M365 133.1 L372.5 136.2 L380.1 139.1 L387.9 141 M387.9 141 L391.6 153.5 M467.6 164.7 L471.1 177 M467.6 164.7 L459.7 161.6 L453 156.2 L445.7 152 M467.1 184.1 L471.1 177 M467.1 184.1 L460.5 186.5 L453.8 188.8 L447 190.3 L440 191.5 M430.9 180.7 L434.5 186.9 L440 191.5 M430.9 180.7 L433.3 172.2 L435.1 163.5 L439 155.5 M439 155.5 L445.7 152 M487.6 145.8 L480.5 151.6 L474.7 158.8 L467.6 164.7 M499.9 181.4 L492.9 179.4 L485.5 179.6 L478.2 179.2 L471.1 177 M484.8 130.7 L477.8 131.2 L471.1 133.7 L464 134.1 L456.9 133.7 L450 135.1 M450 135.1 L448.1 143.6 L445.7 152 M473.6 209.7 L472.1 201 L469.1 192.7 L467.1 184.1 M439.8 203.4 L440 191.5 M425.7 214.3 L418.6 212 L411.2 210.6 M411.2 210.6 L408.5 203.4 L404.9 196.6 L400.7 190.2 M406.2 183.8 L414.4 182.2 L422.7 181.9 L430.9 180.7 M401.5 159 L410.1 152.9 L419.4 148.2 M419.4 148.2 L428.8 153 L439 155.5 M642.5 331.4 L644.6 340.1 M642.5 331.4 L632.8 329.3 L623.6 325.6 M644.6 340.1 L638.2 347.9 L632.6 356.3 M632.6 356.3 L625.3 352.1 L617.5 349.1 M623.6 325.6 L620.3 333.1 L619 341.2 L617.5 349.1 M670 332.9 L681.1 335.7 M670 332.9 L664.9 339 L660 345.3 M681.1 335.7 L686.2 347.5 M686.2 347.5 L681 353.4 L676.9 360.1 M660 345.3 L664.1 357.8 M676.9 360.1 L664.1 357.8 M665.9 323.8 L669.2 317.4 L674.5 312.6 L678.5 306.7 M665.9 323.8 L670 332.9 M695.7 319.7 L690.3 324.5 L685.8 330.2 L681.1 335.7 M687.2 305.6 L678.5 306.7 M651.1 319.5 L658.8 320.5 L665.9 323.8 M651.1 319.5 L646.8 325.4 L642.5 331.4 M644.6 340.1 L651.9 343.9 L660 345.3 M702.7 349.2 L694.5 347.8 L686.2 347.5 M683.4 372.2 L676.9 360.1 M649.8 371.7 L637.4 368.8 M649.8 371.7 L656.4 364.2 L664.1 357.8 M637.4 368.8 L632.6 356.3 M649.8 371.7 L653.7 378 L656.4 385.1 L661.4 390.8 M717.7 253.8 L724.1 261 L729.3 269.1 M717.7 253.8 L724.7 248.4 L730.1 241.5 L736.5 235.5 M736.9 235.5 L739.8 242.2 L744.8 247.5 L748.1 253.9 L752.2 259.8 M729.3 269.1 L738.4 268.9 L747.3 270.9 M752.2 259.8 L747.8 270.6 M713 253.6 L717.7 253.8 M717.9 291.5 L721 283.7 L725.8 276.8 L729.3 269.1 M719.1 217 L725.6 222.6 L731.6 228.5 L736.5 235.5 M746.6 229.4 L736.9 235.5 M768 252.8 L760 256.1 L752.2 259.8 M742.6 293.5 L743.2 285.8 L746.5 278.6 L747.3 270.9 M769 283 L762.4 278.2 L754.3 275.8 L747.8 270.6 M323.9 84.5 L332.6 78.7 M323.9 84.5 L315.9 80.4 L307.4 77.5 L299.9 72.4 M314.9 49.9 L310.5 57.8 L303.9 64.2 L299.9 72.4 M314.9 49.9 L321 51.2 M332.6 78.7 L328.8 72.1 L325.9 65.3 L323.2 58.3 L321 51.2 M341.9 31.3 L338 43.2 M341.9 31.3 L341.2 29 M314.9 49.9 L308.8 42.6 M308.8 42.6 L310.1 34.1 L314.2 26.4 L315.9 18 M315.9 18 L323.9 22.6 L332.9 25 L341.2 29 M321 51.2 L329.2 46.6 L338 43.2 M365 133.1 L367 124.6 L369.5 116.3 L372.7 108.2 M387.9 141 L391.9 135 L396.8 129.7 L401.3 124.1 M372.7 108.2 L381.8 106.9 M381.8 106.9 L388.1 112.8 L394 119.2 L401.3 124.1 M419.4 148.2 L416.9 139.8 L414 131.5 L412.3 122.9 M401.3 124.1 L412.3 122.9 M420.6 64 L412.5 72.6 M420.6 64 L418.6 55.3 L416.8 46.6 L415.6 37.7 M412.5 72.6 L406.2 67.8 L398.7 64.8 L392 60.6 M412.2 37.7 L415.6 37.7 M412.2 37.7 L405 43 L398.1 48.7 L390.6 53.7 M390.6 53.7 L392 60.6 M412.5 72.6 L412.6 80.4 L411 88 M394.2 91 L402.6 89.8 L411 88 M394.2 91 L386.6 84 L381 75.2 M392 60.6 L386.5 67.9 L381 75.2 M483.5 29.6 L486.7 22.4 L489.9 15.3 L494 8.5 M483.5 29.6 L473.1 30.1 M473.1 30.1 L469.5 22.4 L468.8 13.9 L466.1 6 M494 8.5 L491.8 6 M504.8 6 L502.1 6.3 L494 8.5 M456 6 L456 6 L466.1 6 M464.5 41.6 L457.9 44 L451.2 46.2 L445.1 50 M464.5 41.6 L467.2 34.4 M467.2 34.4 L459.9 29.6 L451.4 26.9 L443.9 22.4 M445.1 50 L439.1 42.6 L431.8 36.4 M431.8 36.4 L438.9 30.2 L443.9 22.4 M472.9 66.5 L469.8 58.2 L466.4 50.2 L464.5 41.6 M453.8 74.9 L446.4 73 M440.8 65.5 L446.4 73 M440.8 65.5 L443.5 57.9 L445.1 50 M444.3 6 L441.2 8.3 M441.2 8.3 L441.3 15.6 L443.9 22.4 M473.1 30.1 L467.2 34.4 M420.6 64 L430.7 64.3 L440.8 65.5 M416 37.4 L423.9 36.4 L431.8 36.4 M441.2 8.3 L431 6.4 L429.6 6 M416 37.4 L417.1 29 L418.1 20.6 L419.9 12.3 L419.6 6 M360.1 6.6 L363.1 13.1 L368.6 18 L371 24.9 L375.2 30.5 M388.1 6 L391.9 10.9 M391.9 10.9 L389 21.8 M375.2 30.5 L382.7 27.1 L389 21.8 M357.6 6 L360.1 6.6 M373.1 35.2 L365.2 35.2 L357.4 34.5 L349.7 32.6 L341.9 31.3 M373.1 35.2 L375.2 30.5 M341.2 29 L343.2 20.3 L347.4 12.5 L349.5 6 M401.9 6 L398.4 7.8 L391.9 10.9 M412.2 37.7 L406.8 33.2 L401.2 28.9 L394.1 26.8 L389 21.8 M373.1 35.2 L374.2 43.1 M390.6 53.7 L382.8 47.8 L374.2 43.1 M411.2 210.6 L407.2 218.1 L401.2 224.3 L397.6 232 M401.5 238 L397.6 232 M323.5 238 L323.8 237.4 L329.9 229.5 M329.9 229.5 L336.7 231.5 L343 234.9 L349.6 237.2 M304.1 214.7 L299.9 208.3 L295.1 202.3 L291.2 195.7 M304.1 214.7 L311.7 215.5 L319.2 215.8 L326.8 216.1 M324.1 188.8 L316.6 189.3 L309 189 L301.5 189.6 L294 189.9 M324.1 188.8 L325.6 196.4 L327 204 L329.9 211.2 M294 189.9 L291.2 195.7 M329.9 211.2 L326.8 216.1 M268 208.8 L267.8 216.5 L268.4 224.1 M268 208.8 L271.1 203.7 M298.9 226.3 L304.1 214.7 M271.1 203.7 L277.7 200.8 L284.2 197.6 L291.2 195.7 M329.9 229.5 L326.8 216.1 M292.8 177.4 L285.2 173.7 L278.1 169.1 L271.1 164.3 M292.8 177.4 L297.8 170.3 L303.1 163.5 M303.1 163.5 L302.2 155.4 L299.9 147.6 L297.7 139.9 M271.1 164.3 L275.1 155.7 L277.2 146.5 M277.2 146.5 L284.3 145.1 L291.2 143 L297.7 139.9 M333.2 174.8 L328 165.9 M333.2 174.8 L329.6 182.4 L324.1 188.8 M328 165.9 L319.7 164.7 L311.4 164.6 L303.1 163.5 M294 189.9 L292.8 177.4 M350 137.4 L340.5 141.1 L332.1 146.8 M350 137.4 L346.2 129.4 L340.6 122.4 L337.4 114.1 M332.1 146.8 L324.5 142 L317.7 136.1 L309.7 131.9 M337.4 114.1 L327.8 112.9 L318.3 110.7 M318.3 110.7 L315.3 117.8 L313.2 125.1 L309.7 131.9 M355.9 138.6 L350 137.4 M333.2 174.8 L340.6 176.6 L348.1 177.4 M348.1 177.4 L356.4 172.6 L363.1 165.8 M328 165.9 L329.5 156.3 L332.1 146.8 M299.1 137.4 L297.7 139.9 M299.1 137.4 L309.7 131.9 M575.3 267.3 L578.9 274.8 L580.8 282.9 L584 290.5 M567 268.2 L557.9 277.4 M557.9 277.4 L558.8 284.4 L561.1 291.1 L563.7 297.7 M563.7 297.7 L569.7 299.7 M569.7 299.7 L577.4 295.9 L584 290.5 M530.3 228.7 L528.8 236.4 L528.4 244.1 L529.3 251.9 M500.8 236.4 L506.4 240.9 L509.6 247.5 L514.8 252.3 M514.8 252.3 L522 252 L529.3 251.9 M552.6 249.1 L545.8 250.6 L539 252.4 L532.3 254.3 M529.3 251.9 L532.3 254.3 M651.1 319.5 L648.7 310.7 M678.5 306.7 L670.2 300.6 L660.7 296.5 M648.7 310.7 L655.4 304.2 L660.7 296.5 M619.3 315.7 L626.8 309.5 L635.5 305.1 M619.3 315.7 L618.7 317.6 M618.7 317.6 L623.6 325.6 M648.7 310.7 L641.6 309 L635.5 305.1 M597.5 293 L610.7 296.8 M597.5 293 L599.4 285.6 L599.9 278 L602.9 270.9 M610.7 296.8 L617.7 290.4 L624.9 284.3 M624.9 284.3 L618.1 277.6 L613 269.3 M602.9 270.9 L613 269.3 M586.2 258.7 L595.1 263.9 L602.9 270.9 M595.7 293.8 L584 290.5 M595.7 293.8 L597.5 293 M623.6 252.8 L617.9 260.8 L613 269.3 M561.3 440.2 L561 450.7 L562.9 461 M561.3 440.2 L553.9 439 L547.2 435.7 L540.3 433.1 M540.3 433.1 L530.9 443.2 M562.9 461 L553.6 459.5 L545.3 454.7 L536.1 453 M536.1 453 L530.9 443.2 M557.7 471.9 L562.9 461 M531.7 471.5 L533.6 462.2 L536.1 453 M570.6 461.6 L562.9 461 M525.6 442.8 L530.9 443.2 M589.6 440.6 L585 435.1 M561.3 440.2 L568.3 433 M585 435.1 L576.5 434.6 L568.3 433 M611.7 422.8 L604.8 419.1 L598.3 414.6 L591.6 410.4 M591.6 410.4 L588.3 413.2 M585 435.1 L584.9 427.6 L588 420.6 L588.3 413.2 M593.2 566 L599.7 567.9 M595.3 603.1 L588.3 598.3 L582.9 591.4 L575.5 587.1 M595.3 603.1 L602.7 597.9 M602.7 597.9 L601.7 590.4 L601 582.9 L600.5 575.4 L599.7 567.9 M617.8 539 L613.5 547.3 L611.5 556.4 L608.4 565.2 M637.8 558.8 L629.9 565.5 L622.1 572.2 M622.1 572.2 L615.6 568.1 L608.4 565.2 M599.7 567.9 L608.4 565.2 M567.6 694.6 L575.1 691.9 L581.6 687.2 M581.6 687.2 L584.7 689.7 M542.3 619.7 L543.8 619.8 L550.4 622.9 L557.6 623.1 L564.5 624.4 M543.4 643.5 L551 644.7 L559.9 645.8 M559.9 645.8 L561 638.6 L564.2 631.8 L564.5 624.4 M562.1 600.2 L565.4 606.5 L567.6 613.3 L570 620 M564.5 624.4 L570 620 M673 649.8 L665.4 644.4 L657 640.5 L648.8 636.2 M673 649.8 L679.6 643.7 L687.1 638.7 L693.1 631.8 M673.8 614.5 L665.9 619.3 L658.2 624.4 L649.8 628.3 M648.8 636.2 L649.8 628.3 M738.1 730.2 L730.8 731.5 L723.4 732.3 L716.1 734.2 M716.7 702.6 L716 709.7 L713.5 716.3 L710.6 722.8 L709.4 729.7 M716.1 734.2 L709.4 729.7 M716.1 734.2 L719.1 741.2 L720.9 748.6 L722.3 756.1 L723.9 763.5 M706.4 770.6 L710.2 769.5 L717 766.3 L723.9 763.5 M777.2 127.9 L780.8 120.7 L783 113.1 L785.1 105.4 M785.1 105.4 L793.4 104.9 L801.7 106.1 L806 105.6 M776.8 33.2 L778 40.6 L777.2 48.1 M747.3 57.2 L754.9 57.7 L762.4 58.1 L769.9 59 M777.2 48.1 L769.9 59 M806 55.4 L801.3 59.5 M777.2 48.1 L785.2 51.9 L793.2 55.7 L801.3 59.5 M806 80.2 L797.9 74.2 M801.3 59.5 L800.6 67.1 L797.9 74.2 M583.4 40 L573.1 48.4 M556 27.6 L556.5 35.4 L558.7 42.9 M558.7 42.9 L566 45.6 L573.1 48.4 M585.8 70.4 L576.3 61.8 M573.7 99.7 L568.3 95 L564.6 88.8 L558.2 85.1 L554.1 79.2 M576.3 61.8 L571.4 67.1 L565.1 70.4 L559.6 74.7 L554.1 79.2 M576.3 61.8 L573.1 48.4 M539.5 101.2 L542.8 93.6 L545.2 85.7 L549.7 78.7 M554.1 79.2 L549.7 78.7 M517.5 89.6 L523.3 84.6 L526.6 77.4 L532.4 72.4 L537.4 66.6 M549.7 78.7 L543.9 72.3 L537.4 66.6 M521.5 27.4 L526.7 33.3 L530.2 40.5 L536.1 45.9 L540.1 52.7 M521.5 27.4 L515.2 33.2 L507.6 37.2 L500.5 41.7 M507.9 59.4 L515 60.1 L522.3 59.6 L529.3 61 L536.3 62.3 M507.9 59.4 L500.8 51.3 M536.3 62.3 L540.1 52.7 M500.8 51.3 L500.5 41.7 M522.7 23.3 L521.5 27.4 M558.7 42.9 L552.7 46.5 L546.7 50.3 L540.1 52.7 M483.5 29.6 L492.2 35.4 L500.5 41.7 M504.7 86.1 L506.3 77.3 L506.2 68.2 L507.9 59.4 M537.4 66.6 L536.3 62.3 M476.5 67.8 L482.8 64 L489.3 60.5 L494.7 55.4 L500.8 51.3 M449.8 109.9 L443.8 104.6 L438.7 98.3 L432.3 93.5 M449.8 109.9 L445.3 122.7 M445.3 122.7 L437.5 123.1 L429.7 122.3 L421.9 122.5 L414.2 121 M414.2 121 L414.3 111.9 L414.8 102.9 L416.7 94 M432.3 93.5 L424.5 93.5 L416.7 94 M462.3 102.5 L455.7 105.5 L449.8 109.9 M446.4 73 L440.7 79.1 L436.4 86.2 L432.3 93.5 M450 135.1 L445.3 122.7 M412.3 122.9 L414.2 121 M381.8 106.9 L388.2 99.1 L394.2 91 M411 88 L416.7 94 M628.2 378.5 L621.3 380.9 L614 380.7 M628.2 378.5 L631.4 385.4 L632.3 393 L634.5 400.1 M622.6 409.1 L628.1 403.9 L634.5 400.1 M622.6 409.1 L617.8 402.6 L612.5 396.7 L606 391.9 M606 391.9 L614 380.7 M637.4 368.8 L628.2 378.5 M617.5 349.1 L609.8 350.7 M609.8 350.7 L606.9 358.3 L604.9 366.1 M604.9 366.1 L608.6 373.9 L614 380.7 M650.9 403.3 L642.5 402.8 L634.5 400.1 M620.8 418 L622.6 409.1 M591.6 410.4 L593.1 402.9 L594.3 395.3 M594.3 395.3 L606 391.9 M311.9 8.6 L313.8 6 M311.9 8.6 L302 9.1 L292 8.7 M292 8.7 L289.6 6 M315.9 18 L311.9 8.6 M283.8 25.6 L289.7 32.3 L293.3 40.4 M283.8 25.6 L287.6 17 L292 8.7 M293.3 40.4 L301.1 41.6 L308.8 42.6 M263.5 29.3 L273.6 26.8 L283.8 25.6 M263.5 29.3 L262.3 21.9 L259.8 14.8 L259.1 7.3 M372.2 75.4 L366.9 67.2 L360.6 60 M372.2 75.4 L368 82.6 L363.1 89.3 L359.7 97 M339.1 78.8 L343.1 72 L349.4 67.1 L353.6 60.5 M339.1 78.8 L345.5 83.9 L351 89.8 L355.6 96.6 M353.6 60.5 L360.6 60 M359.7 97 L355.6 96.6 M374.2 43.1 L368.8 48 L364.9 54.2 L360.6 60 M381 75.2 L372.2 75.4 M372.7 108.2 L367 101.7 L359.7 97 M332.6 78.7 L339.1 78.8 M338 43.2 L343.2 48.9 L348.7 54.4 L353.6 60.5 M323.9 84.5 L321.6 92.2 L319.3 99.8 L316.6 107.3 M316.6 107.3 L318.3 110.7 M337.4 114.1 L343.3 108.1 L349.3 102.2 L355.6 96.6 M361.7 227.8 L359.1 220.1 L355.5 212.9 L352.2 205.5 M361.7 227.8 L375.5 229.4 M381.2 226.5 L375.5 229.4 M381.2 226.5 L382.8 219.3 L382.6 212 L382.4 204.6 L382.3 197.3 M382.3 197.3 L373.5 197.8 L364.8 199.6 L356 199.2 M356 199.2 L352.2 205.5 M349.6 237.2 L355.4 232.2 L361.7 227.8 M329.9 211.2 L337.2 209 L344.7 207.3 L352.2 205.5 M374.2 238 L374.2 236.9 L375.5 229.4 M397.6 232 L389.4 229.3 L381.2 226.5 M386.9 192.5 L382.3 197.3 M348.1 177.4 L351 184.5 L353.7 191.8 L356 199.2 M207.2 29.2 L211.3 24.7 L218.2 17.9 M218.2 17.9 L216.1 10.6 L214.2 6 M234.5 22.9 L226.2 20.9 L218.2 17.9 M234.5 22.9 L237.8 16.1 L239.7 8.7 L241.2 6 M293.3 40.4 L288.3 46.5 L283 52.4 L279.3 59.5 M299.9 72.4 L292 74.8 M279.3 59.5 L285 66.2 L289.4 73.9 M292 74.8 L289.4 73.9 M316.6 107.3 L307.1 104.1 L297.7 100.4 M292 74.8 L292.8 83.6 L295.7 91.9 L297.7 100.4 M299.1 137.4 L293.7 131 L288.8 124.1 L282.5 118.3 L277.5 111.5 M297.7 100.4 L291.1 104.4 L284.4 108.1 L277.5 111.5 M263.5 29.3 L259 34.8 M279.3 59.5 L266.6 56.4 M266.6 56.4 L263.9 49.3 L260.5 42.4 L259 34.8 M234.5 22.9 L240.3 34.6 M215.2 50 L209.3 45.1 M215.2 50 L228.1 50.6 M228.1 50.6 L233.8 42.3 L240.3 34.6 M240.3 34.6 L249.6 36 L259 34.8 M266.6 56.4 L260.7 61.7 L255 67.1 M228.1 50.6 L233 58.8 M233 58.8 L240.8 60.4 L247.9 63.7 L255 67.1 M263.8 134.9 L270.4 140.8 L277.2 146.5 M263.8 134.9 L257.2 138.2 L250.1 140 M271.1 164.3 L261.9 167.5 M250.1 140 L249.1 147.8 L248.5 155.6 M248.5 155.6 L255.1 161.7 L261.9 167.5 M271.1 203.7 L265.7 196.4 L261 188.6 L256.7 180.7 M256.7 180.7 L259.7 174.3 L261.9 167.5 M215.2 50 L210.7 56.2 L209.6 58 M227.2 83.2 L229.7 75.2 L230.3 66.7 L233 58.8 M227.2 83.2 L217.8 81.5 L208.4 80.6 M254.6 233.5 L245.7 231.2 L237.4 227.2 L228.8 224.2 M228.8 224.2 L229.2 231.7 L227.9 238 M618.7 317.6 L609.6 319.9 L600.7 322.9 M609.8 350.7 L598.5 343.1 M600.7 322.9 L599.6 333 L598.5 343.1 M619.3 315.7 L616.1 305.7 L610.7 296.8 M595.7 293.8 L594.6 301.5 L592.5 309 L591.3 316.7 M600.7 322.9 L591.3 316.7 M569.7 299.7 L573.9 309.3 L577.1 319.3 M591.3 316.7 L584.3 318.6 L577.1 319.3 M503.5 289.6 L501.1 288.6 M503.5 289.6 L511.9 284.8 M511.9 284.8 L510 277.8 L508.2 270.7 L505.6 263.8 M496.9 264 L497.7 264.1 L505.6 263.8 M502.1 294.3 L503.5 289.6 M514.8 252.3 L510.7 258.5 L505.6 263.8 M659.9 285 L658.8 287.1 M659.9 285 L657.2 278.2 L657.2 270.8 L655.2 263.8 M658.8 287.1 L650.4 287.7 L642.1 287.6 L633.8 285.9 M655.2 263.8 L646.9 265.1 L638.8 267.5 M638.8 267.5 L635.9 276.4 L633.2 285.3 M680.1 278.3 L673.5 281.2 L666.4 282.3 L659.9 285 M660.7 296.5 L658.8 287.1 M661.5 253.2 L655.2 263.8 M635.5 305.1 L635.4 295.5 L633.8 285.9 M625 252.7 L631.3 260.6 L638.8 267.5 M624.9 284.3 L633.2 285.3 M594.3 395.3 L586.9 388.6 L579.2 382.4 M604.9 366.1 L594.9 368.8 L584.7 370.3 M579.2 382.4 L584.7 370.3 M568.3 433 L567 424.4 L564.1 416.3 M588.3 413.2 L581.1 413 L573.8 412.4 L566.6 412.2 M564.1 416.3 L566.6 412.2 M540.3 433.1 L541.5 420.4 M564.1 416.3 L556.8 418.7 L549.3 420.1 L541.5 420.4 M541.5 420.4 L537.3 413.3 L532.9 406.4 M521.6 412.3 L524.8 411.2 L532.9 406.4 M545 678.9 L550.7 674.2 L557.2 669.6 L562.2 663.4 L568.5 658.6 M581.6 687.2 L582 682.9 M582.1 682.2 L582.8 675.3 M582.8 675.3 L578.8 669 L573.2 664.2 L568.5 658.6 M559.9 645.8 L564.8 651 L568.6 657 M568.5 658.6 L568.6 657 M592.5 613 L583 620.6 M592.5 613 L599.4 618.9 L607.2 623.6 L614.4 629.1 M583 620.6 L585.4 628.2 L586.1 636.4 L588.9 643.9 M614.4 629.1 L614.8 630.9 M614.8 630.9 L610.3 636.7 L605 641.9 L600.9 648.1 M600.9 648.1 L588.9 643.9 M595.3 603.1 L592.5 613 M570 620 L583 620.6 M568.6 657 L576 653.6 L581.6 647.5 L588.9 643.9 M608.3 664.6 L599.9 668.5 L591 671.1 L582.8 675.3 M608.3 664.6 L604.5 656.4 L600.9 648.1 M650.4 598.6 L646.7 592.2 L642.3 586.2 M650.4 598.6 L647 606.6 L643.3 614.5 M643.3 614.5 L634.7 612 L626 609.9 M642.3 586.2 L634.7 587.1 L627.2 585.8 M626 609.9 L622.4 603.8 L619 597.6 M619 597.6 L623.8 592.2 L627.2 585.8 M665 597.1 L657.6 596.7 L650.4 598.6 M653.7 568.8 L647.6 577.2 L642.3 586.2 M649.8 628.3 L647.1 621.2 L643.3 614.5 M638.9 643.3 L631.3 638.3 L623.2 634.4 L614.8 630.9 M638.9 643.3 L648.8 636.2 M614.4 629.1 L617.2 622 L621.2 615.7 L626 609.9 M622.1 572.2 L624.9 578.9 L627.2 585.8 M602.7 597.9 L610.8 596.8 L619 597.6 M700.6 731.1 L697.1 737.2 L692.7 742.8 L690.5 749.6 L686 755.1 L685.7 755.7 M700.6 731.1 L693.8 725.7 L685.4 722.7 L678.8 717.1 M678.8 717.1 L670.9 719.6 M670.9 719.6 L668.2 726.3 L666.4 732.1 M709.4 729.7 L700.6 731.1 M771.6 67.8 L779.6 73.8 L788.5 78.5 M771.6 67.8 L766.7 73.7 L763.1 80.3 L758.8 86.6 M788.5 78.5 L785.1 85.5 L784.9 93.4 L782 100.6 M782 100.6 L774.7 97.2 L767.1 95 L759.5 92.5 M759.5 92.5 L758.8 86.6 M769.9 59 L771.6 67.8 M797.9 74.2 L788.5 78.5 M738.7 69 L745.9 74.4 L752.8 80 L758.8 86.6 M785.1 105.4 L782 100.6 M747.8 104 L753.7 98.3 L759.5 92.5 M263.8 134.9 L267 126.2 L268.3 117 M268.3 117 L277.1 111.4 M289.4 73.9 L282.2 78.6 L275.5 84 L269.3 89.9 M277.1 111.4 L273.3 104.7 L272.7 96.8 L269.3 89.9 M255 67.1 L255.7 75.9 L254.8 84.7 M269.3 89.9 L262.4 86.3 L254.8 84.7 M199.2 127 L203.6 132.4 M203.6 132.4 L199.5 140.7 L195.9 149.3 M195.9 149.3 L191.4 149 M224.7 131.2 L224.8 138.6 L224.2 145.9 L223 153.2 L224.1 160.6 M224.7 131.2 L217.6 130.8 L210.6 131.7 L203.6 132.4 M195.9 149.3 L199.3 157.1 M199.3 157.1 L207.5 158.5 L215.7 160.1 L224.1 160.6 M181 173 L181.3 173.1 L191.2 176 M199.3 157.1 L194.1 166 L191.2 176 M507.2 314 L506.5 320.7 M507.2 314 L515.5 312 L523.9 310.6 M523.9 310.6 L532.7 321.5 M532.7 321.5 L531.5 331.1 L528.1 340.2 M528.1 340.2 L518.7 341.2 L509.8 340.2 M505 311.6 L507.2 314 M539.4 295.3 L526.1 299.1 M539.4 295.3 L540.3 286.5 L543.2 278 M543.2 278 L534.4 271 M534.4 271 L526.7 274.6 L520 280 L513.1 284.9 M513.1 284.9 L519 292.6 L526.1 299.1 M550.1 305.4 L544.2 301 L539.4 295.3 M550.1 305.4 L548.4 314.7 M548.4 314.7 L540.3 317.6 L532.7 321.5 M523.9 310.6 L526.1 299.1 M557.9 277.4 L550.5 277.2 L543.2 278 M563.7 297.7 L557.2 302 L550.1 305.4 M532.3 254.3 L533.6 262.6 L534.4 271 M580.6 347.5 L580.3 338.4 L578.7 329.4 L576.1 320.7 M580.6 347.5 L579.4 348.9 M579.4 348.9 L572.3 348.6 L565.3 349.8 M565.3 349.8 L560.9 343.7 L555.2 338.8 M555.2 338.8 L556.7 331.8 L558.9 325 M558.9 325 L567.4 322.4 L576.1 320.7 M598.5 343.1 L589.6 345.5 L580.6 347.5 M577.1 319.3 L576.1 320.7 M584.7 370.3 L582.1 363.4 L581.5 355.9 L579.4 348.9 M531.3 343.3 L539.2 341.4 L547.1 339.7 L555.2 338.8 M531.3 343.3 L532.6 352.3 L535.1 361.2 M535.1 361.2 L543.5 366.2 L552.7 369.4 M552.7 369.4 L556 362.3 L561 356.2 L565.3 349.8 M531.3 343.3 L528.1 340.2 M548.4 314.7 L553.4 320 L558.9 325 M578.3 382.6 L570 378.5 L562.1 373.8 L553.3 370.8 M578.3 382.6 L572.8 388.1 L569 394.9 L564 400.7 M564 400.7 L557.2 398.6 L550 397.6 L543.6 394.3 M553.3 370.8 L551 379 L546.7 386.4 L543.6 394.3 M552.7 369.4 L553.3 370.8 M566.6 412.2 L564 400.7 M532.9 406.4 L534.6 399 M534.6 399 L543.6 394.3 M527.1 368.9 L527.3 376.1 L526.3 383.4 L527 390.6 M527.1 368.9 L518.3 369.3 L514.7 369 M527 390.6 L518.3 389.9 M535.1 361.2 L527.1 368.9 M534.6 399 L527 390.6 M670.9 719.6 L664 716.9 L657.5 713 L655.4 712.6 M638.9 643.3 L636 653.1 L632.8 662.8 M608.3 664.6 L618.4 670.3 M632.8 662.8 L625.2 665.7 L618.4 670.3 M617.9 678.7 L618.4 670.3 M688.2 692 L685.1 694 M688.2 692 L692.4 682.4 L694.3 672.1 M685.1 694 L678.7 689.7 L670.9 688.5 L664.2 684.8 L657.4 681.3 M694.3 672.1 L688 666.3 L680.8 661.8 L673.7 657.1 M673.7 657.1 L668.6 664.7 L661.5 670.7 L656.8 678.6 M656.8 678.6 L657.4 681.3 M716.1 701.5 L709.3 698.5 L702.2 696.4 L695.3 694 L688.2 692 M678.8 717.1 L680.6 709.3 L683 701.7 L685.1 694 M712.9 664.1 L703.2 667 L694.3 672.1 M645.5 704.9 L647.7 701.6 L650.8 694.7 L653 687.5 L657.4 681.3 M673 649.8 L673.7 657.1 M632.8 662.8 L638.3 667.5 L644.9 670.5 L650.6 675 L656.8 678.6 M169.8 199 L172 201.2 L176.9 209 M191.6 176.8 L189.3 184.6 L188.2 192.7 L185 200.2 L183.2 208.1 M176.9 209 L183.2 208.1 M160.7 218 L167.3 219 M176.9 209 L167.3 219 M228.8 224.2 L227.7 222.3 M227.7 222.3 L220.3 224.3 L213.5 228 L206.6 231.3 L199.1 233.1 M197.8 238 L199.1 233.1 M232 89 L239.1 89.9 L246.1 90.9 M232 89 L228.6 95.2 L224.3 101 L221.8 107.7 M246.1 90.9 L247.5 101 L249 111 M249 111 L243.9 117.1 L236.6 120.5 L231.3 126.2 M221.8 107.7 L225.5 117.3 L230.5 126.3 M227.2 83.2 L232 89 M254.8 84.7 L246.1 90.9 M207.1 103 L207.6 103.1 L214.4 106.7 L221.8 107.7 M268.3 117 L258.9 113.1 L249 111 M250.1 140 L244.1 135.1 L237.2 131.3 L231.3 126.2 M224.7 131.2 L230.5 126.3 M248.5 155.6 L240.9 157.5 L233.8 160.6 L226.5 163.4 M224.1 160.6 L226.5 163.4 M211.5 184.9 L218.6 178 L226.7 172.3 M211.5 184.9 L211.9 193.8 L213.9 202.6 M213.9 202.6 L221.5 206.2 L228.1 211.6 M239.4 184.5 L232.1 179.3 L226.7 172.3 M239.4 184.5 L238.6 192.1 L235.4 199.1 L234.3 206.6 M234.3 206.6 L228.1 211.6 M191.6 176.8 L197.9 180.5 L204.9 182.2 L211.5 184.9 M226.5 163.4 L226.7 172.3 M187.8 210.3 L183.2 208.1 M187.8 210.3 L196.3 207.1 L205.2 205.3 L213.9 202.6 M227.7 222.3 L228.1 211.6 M187.8 210.3 L192.5 217.4 L195.2 225.6 L199.1 233.1 M256.7 180.7 L248.1 183 L239.4 184.5 M268 208.8 L259.5 208.8 L251.2 206.9 L242.7 208 L234.3 206.6 M167.3 219 L167.9 226.5 L168.8 234 L168.7 238 M8.4 6 L8.4 9.8 L13.9 9.8 L13.9 23.6 L19.5 23.6 L19.5 32.4 M29 6 L34.4 31.5 M47.2 6 L47.2 17.5 L50.5 17.5 L50.5 30.6 M60.8 6 L63.4 30.7 M109.3 6 L109.3 6.8 L111.5 6.8 L111.5 30 M141 6 L141 10.9 L133 10.9 L133 25.1 M167.4 6 L166.8 31.8 M199.3 6 L200.1 28.7 M6 32.4 L19.5 32.4 M19.5 32.4 L39 32.4 L39 30.6 L50.5 30.6 M19.5 32.4 L19.5 42 L6 42 M50.5 30.6 L73.8 30.7 M50.5 30.6 L50.5 42.1 L40.8 42.1 L40.8 52.1 L31.1 52.1 L31.1 63.3 M73.8 30.7 L74.5 58 M97.7 30.2 L93.3 59.5 M111.5 30 L133 25.1 M111.5 30 L111.5 45.1 L104.1 45.1 L104.1 60.4 M121.7 27.7 L117.5 57.9 M133 25.1 L145.5 25.1 L145.5 31.8 L166.8 31.8 M133 25.1 L132.4 55.1 M145.1 27.5 L141.8 55.4 M166.8 31.8 L176.1 31.8 L176.1 30.3 L192.7 30.3 L192.7 28.7 L200.1 28.7 M166.8 31.8 L167.3 35.8 L164.7 39.8 L163.5 43.8 L162.7 47.9 L160.8 51.9 L158.8 55.9 M200.1 28.7 L206.9 27.5 M200.1 28.7 L189.5 64.4 M6 63.6 L31.1 63.3 M31.1 63.3 L45.2 63.3 L45.2 60.6 L57.1 60.6 L57.1 58 L74.5 58 M31.1 63.3 L31.1 81.7 L22.9 81.7 L22.9 93.8 M74.5 58 L104.1 60.4 M74.5 58 L74.5 64.1 L68.8 64.1 L68.8 73.9 L63.1 73.9 L63.1 83.4 M104.1 60.4 L113.2 60.4 L113.2 57.8 L121 57.8 L121 55.1 L132.4 55.1 M104.1 60.4 L104.1 70.7 L99.2 70.7 L99.2 93.8 M132.4 55.1 L158.8 55.9 M132.4 55.1 L132.4 60.3 L117.5 60.3 L117.5 81.3 M158.8 55.9 L180.5 55.9 L180.5 64.4 L189.5 64.4 M189.5 64.4 L205 64.4 L205 56.4 L209.6 56.4 M189.5 64.4 L188.3 87.6 M6 85.1 L16 85.1 L16 93.8 L22.9 93.8 M14.5 90.4 L22.3 112.7 M22.9 93.8 L22.9 103.6 L33.6 103.6 L33.6 111.8 M63.1 83.4 L72.2 83.4 L72.2 88.6 L85.3 88.6 L85.3 93.8 L99.2 93.8 M99.2 93.8 L114 93.8 L114 81.3 L117.5 81.3 M99.2 93.8 L99.2 102.8 L102.3 102.8 L102.3 119.3 M117.5 81.3 L141.3 81.3 L141.3 82.9 L155.4 82.9 M117.5 81.3 L120.6 86.8 L121.3 92.3 L123 97.9 L125.7 103.4 L125.1 108.9 L126.7 114.4 M155.4 82.9 L165.6 82.9 L165.6 85.3 L175.3 85.3 L175.3 87.6 L188.3 87.6 M155.4 82.9 L156.2 120.4 M188.3 87.6 L207.9 88.5 M188.3 87.6 L189.2 113.4 M6 113.9 L33.6 111.8 M33.6 111.8 L43.9 111.8 L43.9 117 L63.2 117 M33.6 111.8 L33.6 128.6 L32.4 128.6 L32.4 135.4 L31.1 135.4 L31.1 151.5 M63.2 117 L102.3 119.3 M63.2 117 L61.9 148.4 M102.3 119.3 L126.7 114.4 M102.3 119.3 L102.3 142.6 L86.4 142.6 L86.4 145.9 M126.7 114.4 L134.5 114.4 L134.5 120.4 L156.2 120.4 M126.7 114.4 L129.9 144.8 M156.2 120.4 L174.3 120.4 L174.3 113.4 L189.2 113.4 M156.2 120.4 L156.2 126.6 L153 126.6 L153 142.2 L149.8 142.2 L149.8 147.9 M189.2 113.4 L204 113.4 M189.2 113.4 L189.2 133.7 L185 133.7 L185 152.1 M6 145.3 L12.7 145.3 L12.7 148.4 L24.1 148.4 L24.1 151.5 L31.1 151.5 M31.1 151.5 L55.9 151.5 L55.9 148.4 L61.9 148.4 M31.1 151.5 L31.9 173 M61.9 148.4 L76.5 148.4 L76.5 145.9 L86.4 145.9 M61.9 148.4 L64.4 152.2 L63.6 156 L63.2 159.7 L65.4 163.5 L65.5 167.2 L67.9 171 M86.4 145.9 L129.9 144.8 M86.4 145.9 L86.4 175.1 L96.2 175.1 L96.2 181.6 M129.9 144.8 L134.8 144.8 L134.8 146.3 L144.2 146.3 L144.2 147.9 L149.8 147.9 M149.8 147.9 L164.5 147.9 L164.5 150 L176 150 L176 152.1 L185 152.1 M149.8 147.9 L149.8 158.2 L158 158.2 L158 179.9 M169.9 150.3 L169.7 181.2 M185 152.1 L190.1 152.1 M185 152.1 L185 157 L178.5 157 L178.5 178.8 M6 198.4 L18.5 198.4 L18.5 202.8 M31.9 173 L67.9 171 M67.9 171 L75.5 171 L75.5 181.6 L96.2 181.6 M67.9 171 L69.1 208 M96.2 181.6 L123.4 179 M96.2 181.6 L96.2 191.4 L104.4 191.4 L104.4 203.9 L112.6 203.9 L112.6 211.8 M123.4 179 L158 179.9 M123.4 179 L123.4 186 L126.4 186 L126.4 196.5 L129.4 196.5 L129.4 204.5 M158 179.9 L161.1 185.5 L162.3 191.1 L161 196.7 L162.9 202.2 L162 207.8 L164 211.9 M6 208.6 L9.5 208.6 L9.5 202.8 L18.5 202.8 M18.5 202.8 L26.3 202.8 L26.3 206 L42.9 206 M18.5 202.8 L14.3 208.7 L12.9 214.5 L8.8 220.4 L6.2 226.3 L6.2 232.1 L6 232.4 M42.9 206 L50.1 206 L50.1 208 L69.1 208 M69.1 208 L112.6 211.8 M69.1 208 L53.1 238 M112.6 211.8 L116.6 211.8 L116.6 208.1 L125.3 208.1 L125.3 204.5 L129.4 204.5 M112.6 211.8 L110.1 216.1 L107.6 220.5 L104.7 224.9 L98.5 229.3 L98.2 233.6 L94.2 238 M129.4 204.5 L145.7 204.5 L145.7 213.4 L163.2 213.4 M129.4 204.5 L129.4 218.2 L125.8 218.2 L125.8 238 M13.2 238 L10 264.3 M31.5 238 L53.1 238 M31.5 238 L32 262.1 M42.3 238 L49 264 M53.1 238 L94.2 238 M53.1 238 L53.1 248.3 L59.6 248.3 L59.6 259.3 L66 259.3 L66 265.9 M73.1 238 L84.5 268.8 M94.2 238 L125.8 238 M94.2 238 L96.8 243.7 L96.3 249.3 L98 255 L101 260.6 L100.5 266.3 L104.1 271.9 M114.3 238 L121.1 272.5 M125.8 238 L150 238 M150 238 L154.4 238 M125.8 238 L125.8 261.8 L130.9 261.8 L130.9 272.9 M154.4 238 L190.8 238 M154.4 238 L155.6 262.6 M190.8 238 L221.6 238 M190.8 238 L192 264.2 M221.6 238 L247.6 238 M221.6 238 L224.3 242.8 L225.8 247.6 L224.7 252.5 L227.6 257.3 L227.7 262.1 L229 266.9 M247.6 238 L283.2 238 M247.6 238 L248.5 242.4 L252.2 246.8 L251.1 251.2 L255.9 255.6 L258.3 260 L258.4 264.4 M283.2 238 L301.7 238 M283.2 238 L280.9 243.3 L279.5 248.6 L281.2 253.9 L277.7 259.2 L279.3 264.5 L276.7 269.8 M301.7 238 L335.2 238 M301.7 238 L301.7 248.1 L309.5 248.1 L309.5 257.1 L317.3 257.1 L317.3 264.6 M315.5 238 L331.6 268.7 M335.2 238 L369.9 238 M335.2 238 L335.2 257.1 L352.1 257.1 L352.1 274.6 M400.8 238 L438.7 238 M400.8 238 L415 263.1 M438.7 238 L464.6 238 M438.7 238 L441.9 271.4 M449.2 238 L454.6 269.1 M464.6 238 L492.5 238 M464.6 238 L473 265.8 M477.5 238 L484.7 267.2 M6 265.7 L8.7 265.7 L8.7 263.9 L16.2 263.9 L16.2 262.1 L32 262.1 M6 280.9 L15.3 295.7 M32 262.1 L45.2 262.1 L45.2 265.9 L66 265.9 M32 262.1 L32 286.5 L44.7 286.5 L44.7 301.5 M66 265.9 L77.6 265.9 L77.6 268.9 L89.4 268.9 L89.4 271.9 L104.1 271.9 M66 265.9 L66 293.3 L73.9 293.3 L73.9 301.3 M87.4 269.3 L92.7 302.2 M104.1 271.9 L130.9 272.9 M118.2 272.4 L125.1 303.3 M130.9 272.9 L130.9 296.4 L140.8 296.4 L140.8 303.6 M144.7 267.2 L157.9 298.8 M155.6 262.6 L173.9 262.6 L173.9 264.2 L192 264.2 M155.6 262.6 L155.6 271.5 L163.6 271.5 L163.6 288.2 L171.5 288.2 L171.5 295 M178.2 263.6 L188.4 299.2 M192 264.2 L207.1 264.2 L207.1 265.6 L221.4 265.6 L221.4 266.9 L229 266.9 M213.3 265.8 L219 301.5 M229 266.9 L240 266.9 L240 265.7 L250.7 265.7 L250.7 264.4 L258.4 264.4 M229 266.9 L234.1 301.2 M247.8 265.3 L254.5 302.1 M258.4 264.4 L261.9 264.4 L261.9 269.8 L276.7 269.8 M258.4 264.4 L258.4 276.5 L262.2 276.5 L262.2 294.3 L266.1 294.3 L266.1 302.5 M266.8 266.9 L278 301.4 M276.7 269.8 L312.7 269.8 L312.7 264.6 L317.3 264.6 M276.7 269.8 L279.9 274.8 L282.5 279.8 L286.4 284.9 L288.7 289.9 L288.4 294.9 L292.2 300 M317.3 264.6 L322.6 264.6 L322.6 274.6 L352.1 274.6 M317.3 264.6 L317.8 270.1 L317.5 275.6 L314.9 281.1 L317.6 286.7 L316.6 292.2 L315.3 297.7 M352.1 274.6 L379.2 274.7 M352.1 274.6 L352.1 288.1 L357.2 288.1 L357.2 303.8 M379.2 274.7 L411.7 274.7 L411.7 263.1 L415 263.1 M379.2 274.7 L379.2 278.2 L390.2 278.2 L390.2 297.2 M415 263.1 L411.3 303.4 M430.3 267.8 L432.8 297.9 M441.9 271.4 L456.9 271.4 L456.9 265.8 L473 265.8 M441.9 271.4 L449.1 293.7 M473 265.8 L484.1 265.8 L484.1 269.2 L497.8 269.2 M473 265.8 L473 288.1 L470.2 288.1 L470.2 303.3 M6 295.7 L15.3 295.7 M15.3 295.7 L24.1 295.7 L24.1 301.5 L44.7 301.5 M15.3 295.7 L6 307.6 M44.7 301.5 L73.9 301.3 M44.7 301.5 L44.7 315.5 L41.1 315.5 L41.1 321.8 L37.5 321.8 L37.5 333.1 M73.9 301.3 L85.9 301.3 L85.9 302.1 L99.4 302.1 L99.4 302.9 L107.5 302.9 M73.9 301.3 L73.9 316.5 L56 316.5 L56 332.6 M107.5 302.9 L140.8 303.6 M140.8 303.6 L153 303.6 L153 299.3 L160.2 299.3 L160.2 295 L171.5 295 M140.8 303.6 L140.8 313 L125.3 313 L125.3 325.1 M171.5 295 L175 295 L175 301.8 L198.7 301.8 M198.7 301.8 L234.1 301.2 M198.7 301.8 L198.7 318.5 L179.9 318.5 L179.9 323.7 M234.1 301.2 L266.1 302.5 M234.1 301.2 L234.1 315.4 L222.7 315.4 L222.7 321.6 M252.8 302 L237.3 323 M266.1 302.5 L247.7 324 M292.2 300 L296.3 300 L296.3 297.7 L315.3 297.7 M315.3 297.7 L329.4 297.7 L329.4 303.8 L357.2 303.8 M315.3 297.7 L314.1 303.3 L312.6 308.9 L311 314.5 L310.8 320.1 L309.2 325.7 L307 331.3 M357.2 303.8 L364 303.8 L364 300.5 L377.4 300.5 L377.4 297.2 L390.2 297.2 M357.2 303.8 L357.2 307.8 L332.5 307.8 L332.5 326.8 M390.2 297.2 L405 297.2 L405 303.4 L411.3 303.4 M390.2 297.2 L390.2 321.9 L368.3 321.9 L368.3 327.8 M411.3 303.4 L427.2 303.4 L427.2 298.5 L439.6 298.5 L439.6 293.7 L449.1 293.7 M411.3 303.4 L411.3 317 L404.1 317 L404.1 322.1 M449.1 293.7 L461.5 293.7 L461.5 303.3 L470.2 303.3 M449.1 293.7 L449.1 312.5 L438.9 312.5 L438.9 324.8 M470.2 303.3 L491.2 303.3 L491.2 292.5 L501.8 292.5 M470.2 303.3 L468.4 322.9 M6 333.1 L37.5 333.1 M13.8 329.8 L15.8 355.5 M37.5 333.1 L56 332.6 M37.5 333.1 L37.5 347.8 L34.4 347.8 L34.4 351 M56 332.6 L66.1 332.6 L66.1 328.5 L74 328.5 L74 324.4 L87.7 324.4 M56 332.6 L56 339.5 L57.1 339.5 L57.1 350.2 L58.2 350.2 L58.2 355.4 M87.7 324.4 L125.3 325.1 M87.7 324.4 L87.7 330.7 L89.9 330.7 L89.9 342 L92.1 342 L92.1 351.5 M125.3 325.1 L133.3 325.1 L133.3 322.2 L149.3 322.2 M125.3 325.1 L125.9 364.4 M149.3 322.2 L179.9 323.7 M149.3 322.2 L149.3 344.2 L153.6 344.2 L153.6 360.3 M164.7 323 L171.5 361.6 M179.9 323.7 L198 323.7 L198 321.6 L222.7 321.6 M179.9 323.7 L189.2 362.8 M222.7 321.6 L247.7 324 M222.7 321.6 L222.4 327.6 L221.2 333.7 L220.4 339.7 L220.2 345.7 L220.2 351.8 L219.9 357.8 M247.7 324 L271 324 L271 321 L281.6 321 M247.7 324 L247.7 327.9 L239.2 327.9 L239.2 362.1 M281.6 321 L294.2 321 L294.2 331.3 L307 331.3 M281.6 321 L282.3 360.8 M307 331.3 L332.5 326.8 M307 331.3 L307 338.4 L304.9 338.4 L304.9 364.6 M332.5 326.8 L368.3 327.8 M332.5 326.8 L332.5 340 L340.8 340 L340.8 355.4 M368.3 327.8 L382.2 327.8 L382.2 322.1 L404.1 322.1 M368.3 327.8 L369.9 332.2 L371.9 336.6 L373.3 341 L371.5 345.4 L373.5 349.7 L374.4 354.1 M404.1 322.1 L411.6 322.1 L411.6 323.4 L425.8 323.4 L425.8 324.8 L438.9 324.8 M404.1 322.1 L402.6 329 L403.4 336 L401.1 342.9 L400.7 349.8 L398 356.7 L396.7 363.7 M438.9 324.8 L465.2 324.8 L465.2 322.9 L468.4 322.9 M438.9 324.8 L438.9 332.2 L424.7 332.2 L424.7 363.2 M453.5 323.8 L442.7 361.1 M468.4 322.9 L488.6 323.7 M468.4 322.9 L468.4 337.3 L464.8 337.3 L464.8 349.8 L461.2 349.8 L461.2 359 M476 323.2 L474.5 360.7 M488.6 323.7 L507.1 324.2 M488.6 323.7 L488.6 335.7 L492.7 335.7 L492.7 352.3 L496.9 352.3 L496.9 363.6 M503.3 324.1 L508.1 358.2 M6 359.7 L16.7 359.7 L16.7 351 L34.4 351 M6 376.8 L10.4 376.8 L10.4 381.4 M34.4 351 L39.8 351 L39.8 355.4 L58.2 355.4 M34.4 351 L34.4 358.8 L37.2 358.8 L37.2 371.1 L39.9 371.1 L39.9 383.5 M58.2 355.4 L67.4 355.4 L67.4 353.4 L78.9 353.4 L78.9 351.5 L92.1 351.5 M58.2 355.4 L58.2 361.6 L64 361.6 L64 370.1 L69.7 370.1 L69.7 381.8 M92.1 351.5 L109.4 351.5 L109.4 364.4 L125.9 364.4 M92.1 351.5 L92.1 385.9 L100.9 385.9 L100.9 394.1 M125.9 364.4 L141.8 364.4 L141.8 360.3 L153.6 360.3 M125.9 364.4 L125.8 367.6 L125.7 370.7 L123.7 373.9 L123.7 377 L123.9 380.2 L124.1 383.3 M153.6 360.3 L175.7 360.3 L175.7 362.8 L189.2 362.8 M153.6 360.3 L153.6 364.7 L156.4 364.7 L156.4 393 M189.2 362.8 L197 362.8 L197 360.3 L208.7 360.3 L208.7 357.8 L219.9 357.8 M189.2 362.8 L189.2 371.1 L191.8 371.1 L191.8 374.8 L194.5 374.8 L194.5 383.2 M219.9 357.8 L231.5 357.8 L231.5 362.1 L239.2 362.1 M239.2 362.1 L282.3 360.8 M239.2 362.1 L239.2 372.9 L259.3 372.9 L259.3 394.6 M282.3 360.8 L295 360.8 L295 364.6 L304.9 364.6 M282.3 360.8 L282.3 380.7 L277.5 380.7 L277.5 391.2 M304.9 364.6 L335 364.6 L335 355.4 L340.8 355.4 M304.9 364.6 L305.3 367.8 L304.6 371 L304.2 374.2 L306.1 377.3 L307.1 380.5 L306.4 383.7 M340.8 355.4 L374.4 354.1 M340.8 355.4 L340.8 365.2 L345.6 365.2 L345.6 384.3 M374.4 354.1 L381.3 354.1 L381.3 358.9 L388.8 358.9 L388.8 363.7 L396.7 363.7 M374.4 354.1 L374.4 364.7 L371.5 364.7 L371.5 386 M396.7 363.7 L424.7 363.2 M424.7 363.2 L439.3 363.2 L439.3 359 L461.2 359 M424.7 363.2 L424.7 373.9 L439.3 373.9 L439.3 388.8 M440.4 361.4 L453.6 386.6 M461.2 359 L470.4 359 L470.4 361.3 L487.5 361.3 L487.5 363.6 L496.9 363.6 M461.2 359 L472.5 383.6 M496.9 363.6 L504.3 363.6 L504.3 358 L510.8 358 L510.8 352.3 L511.9 352.3 M496.9 363.6 L496.8 368.3 L501 373 L500.4 377.7 L504.2 382.3 L501.5 387 L504.8 391.7 M6 381.4 L10.4 381.4 M10.4 381.4 L18.6 381.4 L18.6 383.5 L39.9 383.5 M10.4 381.4 L9.7 423.2 M39.9 383.5 L69.7 381.8 M69.7 381.8 L100.9 394.1 M69.7 381.8 L69.7 399.7 L73.7 399.7 L73.7 423.4 M100.9 394.1 L108.7 394.1 L108.7 388.7 L119.1 388.7 L119.1 383.3 L124.1 383.3 M100.9 394.1 L107.3 413.8 M124.1 383.3 L142.4 383.3 L142.4 393 L156.4 393 M124.1 383.3 L124.1 396.1 L131.1 396.1 L131.1 411.5 M156.4 393 L188.7 393 L188.7 383.2 L194.5 383.2 M156.4 393 L157.1 397.9 L161.2 402.7 L163.9 407.5 L166.9 412.3 L170.6 417.1 L171.4 422 M194.5 383.2 L227.4 391.3 M194.5 383.2 L194.5 390.7 L196.4 390.7 L196.4 414.1 M227.4 391.3 L227.4 398.9 L230.3 398.9 L230.3 413.7 M259.3 394.6 L266.9 394.6 L266.9 391.2 L277.5 391.2 M259.3 394.6 L259.3 402.3 L260.1 402.3 L260.1 410.9 L260.8 410.9 L260.8 415.8 M277.5 391.2 L301.2 391.2 L301.2 383.7 L306.4 383.7 M277.5 391.2 L277.5 404.1 L283 404.1 L283 409.9 L288.5 409.9 L288.5 420.7 M306.4 383.7 L345.6 384.3 M306.4 383.7 L306.4 393.5 L312.4 393.5 L312.4 409.2 L318.4 409.2 L318.4 415.6 M345.6 384.3 L371.5 386 M345.6 384.3 L345.6 396.3 L350 396.3 L350 406.5 L354.4 406.5 L354.4 424.2 M360.3 385.3 L368.3 419.1 M371.5 386 L398.1 386 L398.1 393.9 L406.3 393.9 M371.5 386 L372.1 390.9 L372.5 395.8 L374.8 400.6 L378.1 405.5 L375.6 410.4 L378.8 415.3 M384.9 389 L391.5 415.3 M406.3 393.9 L431.5 393.9 L431.5 388.8 L439.3 388.8 M406.3 393.9 L406.9 397.4 L409.1 401 L409.9 404.6 L410.5 408.2 L410.8 411.8 L411.8 415.4 M439.3 388.8 L453.4 388.8 L453.4 386.2 L459 386.2 L459 383.6 L472.5 383.6 M439.3 388.8 L441.1 394.4 L441.4 400 L444.5 405.6 L443.2 411.3 L444.6 416.9 L446.2 422.5 M472.5 383.6 L478 383.6 L478 391.7 L504.8 391.7 M472.5 383.6 L472.3 421.1 M504.8 391.7 L518 391.7 L518 389.5 L518.2 389.5 M504.8 391.7 L504.8 399.5 L506.1 399.5 L506.1 411.2 L507.3 411.2 L507.3 419 M6 423.2 L9.7 423.2 M9.7 423.2 L29.2 423.2 L29.2 418.9 L35.7 418.9 M9.7 423.2 L6 428.7 M35.7 418.9 L60 418.9 L60 423.4 L73.7 423.4 M35.7 418.9 L21.7 445.2 M73.7 423.4 L82.3 423.4 L82.3 418.6 L94.3 418.6 L94.3 413.8 L107.3 413.8 M73.7 423.4 L73.7 431.1 L67.5 431.1 L67.5 436.1 L61.2 436.1 L61.2 441.3 M107.3 413.8 L115 413.8 L115 412.7 L120.8 412.7 L120.8 411.5 L131.1 411.5 M107.3 413.8 L107.3 419.4 L89.2 419.4 L89.2 455 M131.1 411.5 L171.4 422 M171.4 422 L188.1 422 L188.1 414.1 L196.4 414.1 M171.4 422 L167.3 426.5 L168.9 431 L165.3 435.5 L163.3 440 L159.4 444.5 L158.8 449 M196.4 414.1 L230.3 413.7 M196.4 414.1 L194.1 419.4 L193.8 424.7 L193 430 L192.7 435.3 L188 440.5 L188.2 445.8 M230.3 413.7 L260.8 415.8 M230.3 413.7 L230.3 430.8 L212.4 430.8 L212.4 450.8 M260.8 415.8 L271.7 415.8 L271.7 418.2 L277.5 418.2 L277.5 420.7 L288.5 420.7 M260.8 415.8 L260.8 428.7 L249.4 428.7 L249.4 450.7 M288.5 420.7 L298.7 420.7 L298.7 418.2 L305.5 418.2 L305.5 415.6 L318.4 415.6 M288.5 420.7 L270.7 446.9 M318.4 415.6 L336.8 415.6 L336.8 424.2 L354.4 424.2 M354.4 424.2 L369 424.2 L369 415.3 L378.8 415.3 M354.4 424.2 L354.4 438.9 L332.1 438.9 L332.1 451.5 M363.5 420.9 L343.8 449.4 M378.8 415.3 L411.8 415.4 M378.8 415.3 L378.8 431 L363.5 431 L363.5 446 M411.8 415.4 L425.4 415.4 L425.4 418.9 L432.6 418.9 L432.6 422.5 L446.2 422.5 M411.8 415.4 L407.2 421.3 L406.2 427.2 L400.9 433.1 L399.4 439 L397 445 L392.5 450.9 M446.2 422.5 L472.3 421.1 M446.2 422.5 L446.2 436.8 L433.3 436.8 L433.3 442.1 M472.3 421.1 L504.1 421.1 L504.1 419 L507.3 419 M472.3 421.1 L472.3 434.2 L469.5 434.2 L469.5 454.9 M507.3 419 L522.5 419.2 M507.3 419 L507.3 425.7 L497.2 425.7 L497.2 452.3 M6 448.3 L21.7 445.2 M6 474.6 L7.7 477.9 M21.7 445.2 L56 445.2 L56 441.3 L61.2 441.3 M21.7 445.2 L24.8 451.5 L26.5 457.8 L30.8 464.2 L33.5 470.5 L35.8 476.8 L36.8 483.1 M61.2 441.3 L67.2 441.3 L67.2 455 L89.2 455 M61.2 441.3 L60.9 447.1 L62.9 452.9 L62.6 458.7 L66.3 464.5 L66.1 470.3 L66.7 476.1 M89.2 455 L124.9 446.4 M89.2 455 L89.2 460.2 L102.5 460.2 L102.5 472.1 M124.9 446.4 L124.7 483.4 M158.8 449 L168.4 449 L168.4 445.8 L188.2 445.8 M158.8 449 L160 476 M188.2 445.8 L192 445.8 L192 450.8 L212.4 450.8 M188.2 445.8 L188.2 451.2 L193.3 451.2 L193.3 481.6 M212.4 450.8 L249.4 450.7 M212.4 450.8 L222.6 474.7 M249.4 450.7 L267.5 450.7 L267.5 446.9 L270.7 446.9 M270.7 446.9 L298.1 446.9 L298.1 444.2 L304.3 444.2 M270.7 446.9 L270.7 468.1 L286.5 468.1 L286.5 478.2 M288.7 445.5 L303.9 479.7 M304.3 444.2 L323.2 444.2 L323.2 451.5 L332.1 451.5 M304.3 444.2 L318.9 481.1 M332.1 451.5 L363.5 446 M332.1 451.5 L338.4 479.1 M363.5 446 L372.2 446 L372.2 450.9 L392.5 450.9 M363.5 446 L363.5 460.6 L366.4 460.6 L366.4 466 L369.2 466 L369.2 479.6 M392.5 450.9 L405.4 450.9 L405.4 446.5 L421 446.5 L421 442.1 L433.3 442.1 M392.5 450.9 L392.5 478.4 L402.3 478.4 L402.3 485 M433.3 442.1 L450.2 442.1 L450.2 454.9 L469.5 454.9 M433.3 442.1 L433.5 482.1 M469.5 454.9 L472.4 476.2 M497.2 452.3 L515.3 452.3 L515.3 441.3 L525.4 441.3 M497.2 452.3 L497.2 457.1 L498.4 457.1 L498.4 465.5 L499.5 465.5 L499.5 474.3 M527.3 456.3 L527.1 477.1 M6 477.9 L7.7 477.9 M7.7 477.9 L29.7 477.9 L29.7 483.1 L36.8 483.1 M7.7 477.9 L7.2 507 M36.8 483.1 L36.8 500.4 L42.6 500.4 L42.6 507.1 M66.7 476.1 L102.5 472.1 M66.7 476.1 L66.7 487.9 L63.9 487.9 L63.9 504.1 M102.5 472.1 L114.5 472.1 L114.5 483.4 L124.7 483.4 M102.5 472.1 L102.5 494.2 L94.6 494.2 L94.6 501.7 M124.7 483.4 L141.6 483.4 L141.6 476 L160 476 M160 476 L170.1 476 L170.1 478.8 L181.8 478.8 L181.8 481.6 L193.3 481.6 M160 476 L160 481.3 L163.1 481.3 L163.1 503.8 M193.3 481.6 L218.1 481.6 L218.1 474.7 L222.6 474.7 M222.6 474.7 L222.4 504.7 M252.9 480.2 L278.2 480.2 L278.2 478.2 L286.5 478.2 M252.9 480.2 L252.9 493.3 L256.6 493.3 L256.6 511.7 M286.5 478.2 L318.9 481.1 M286.5 478.2 L280.7 501.2 M318.9 481.1 L323.2 481.1 L323.2 479.1 L338.4 479.1 M331.3 479.8 L339.5 508.8 M338.4 479.1 L369.2 479.6 M338.4 479.1 L342.3 483.6 L341.5 488.1 L346.8 492.6 L346.2 497.1 L349.4 501.6 L351.9 506.1 M369.2 479.6 L385.6 479.6 L385.6 485 L402.3 485 M369.2 479.6 L369.2 490.5 L388.3 490.5 L388.3 510.5 M402.3 485 L425.2 485 L425.2 482.1 L433.5 482.1 M402.3 485 L402.3 490.1 L417 490.1 L417 512.8 M433.5 482.1 L450 482.1 L450 479.1 L455.1 479.1 L455.1 476.2 L472.4 476.2 M433.5 482.1 L433.5 498.8 L435.4 498.8 L435.4 503.7 M472.4 476.2 L481.8 476.2 L481.8 474.3 L499.5 474.3 M472.4 476.2 L472.4 487.2 L475.4 487.2 L475.4 497.5 L478.4 497.5 L478.4 506.5 M499.5 474.3 L511.9 474.3 L511.9 477.1 L527.1 477.1 M499.5 474.3 L499.5 484.2 L505.3 484.2 L505.3 493.7 L511.2 493.7 L511.2 502 M509.7 475.3 L522.8 504.8 M527.1 477.1 L530 477.2 M527.1 477.1 L527.1 489.7 L531.7 489.7 M7.2 507 L42.6 507.1 M7.2 507 L7.2 518.8 L6 518.8 M42.6 507.1 L63.9 504.1 M42.6 507.1 L42.6 522.6 L27.1 522.6 L27.1 531.3 M63.9 504.1 L72.8 504.1 L72.8 502.9 L83.4 502.9 L83.4 501.7 L94.6 501.7 M75.6 503.2 L70.4 536.4 M94.6 501.7 L130.5 506.3 M130.5 506.3 L138.1 506.3 L138.1 503.8 L163.1 503.8 M130.5 506.3 L130.5 523.6 L119.9 523.6 L119.9 531.8 M163.1 503.8 L179.9 503.8 L179.9 507.3 L190.5 507.3 M163.1 503.8 L163.1 512.2 L160.5 512.2 L160.5 544.6 M190.5 507.3 L200.7 507.3 L200.7 506 L211.2 506 L211.2 504.7 L222.4 504.7 M190.5 507.3 L189 512.8 L186.6 518.2 L184.1 523.7 L183.4 529.2 L182.8 534.7 L180.4 540.2 M222.4 504.7 L223.1 509.6 L218.7 514.6 L220.1 519.6 L217 524.5 L216.5 529.5 L216.9 534.5 M256.6 511.7 L268 511.7 L268 501.2 L280.7 501.2 M256.6 511.7 L247.2 534.7 M280.7 501.2 L289.5 501.2 L289.5 513.5 L317.9 513.5 M280.7 501.2 L280.7 527.2 L274 527.2 L274 537.3 M317.9 513.5 L329.6 513.5 L329.6 509.8 L341.3 509.8 L341.3 506.1 L351.9 506.1 M317.9 513.5 L301.3 534.2 M351.9 506.1 L381.7 506.1 L381.7 510.5 L388.3 510.5 M351.9 506.1 L351.5 512.1 L350 518 L348.3 523.9 L348.1 529.9 L347.4 535.8 L347.3 541.8 M388.3 510.5 L412.4 510.5 L412.4 512.8 L417 512.8 M388.3 510.5 L388.3 539 L367.9 539 L367.9 545 M417 512.8 L426.2 512.8 L426.2 503.7 L435.4 503.7 M417 512.8 L417 530.8 L398.8 530.8 L398.8 542.9 M435.4 503.7 L450.2 503.7 L450.2 506.5 L478.4 506.5 M435.4 503.7 L429.7 543.5 M478.4 506.5 L489.6 506.5 L489.6 504.2 L504.6 504.2 L504.6 502 L511.2 502 M478.4 506.5 L478.4 537.1 L462.8 537.1 L462.8 543.2 M511.2 502 L521.2 502 L521.2 505.8 L532.8 505.8 M511.2 502 L506.5 507.8 L503.2 513.5 L499.6 519.3 L496.9 525 L494.5 530.8 L488.8 536.5 M532.5 514.1 L523.1 514.1 L523.1 541.9 M6 537.6 L17.5 537.6 L17.5 531.3 L27.1 531.3 M6 558.9 L8.9 558.9 L8.9 565.6 M27.1 531.3 L40.1 531.3 L40.1 533.1 L53.3 533.1 L53.3 535 L60 535 M27.1 531.3 L27.1 546.6 L30 546.6 L30 552 L32.9 552 L32.9 566.8 M60 535 L73.3 535 L73.3 538.6 L87.3 538.6 M60 535 L60 550.6 L62.5 550.6 L62.5 561.3 M87.3 538.6 L119.9 531.8 M87.3 538.6 L87.3 558.9 L94.2 558.9 L94.2 574 M119.9 531.8 L131.7 531.8 L131.7 538.2 L143.9 538.2 L143.9 544.6 L160.5 544.6 M119.9 531.8 L118.5 537.8 L119.3 543.9 L122.5 549.9 L120.9 556 L122 562 L121.6 568.1 M160.5 544.6 L175.6 544.6 L175.6 540.2 L180.4 540.2 M160.5 544.6 L160.5 554.1 L155.5 554.1 L155.5 571.7 M180.4 540.2 L192.3 540.2 L192.3 537.4 L201.9 537.4 L201.9 534.5 L216.9 534.5 M180.4 540.2 L180.4 546.3 L183.4 546.3 L183.4 568.1 M198.3 537.4 L203.9 567.8 M216.9 534.5 L247.2 534.7 M216.9 534.5 L225.4 567.5 M247.2 534.7 L258.4 534.7 L258.4 536 L264.1 536 L264.1 537.3 L274 537.3 M274 537.3 L276.1 574 M301.3 534.2 L336.4 534.2 L336.4 541.8 L347.3 541.8 M301.3 534.2 L301.3 548.6 L319.8 548.6 L319.8 573.4 M347.3 541.8 L355.7 541.8 L355.7 545 L367.9 545 M347.3 541.8 L351.6 566.2 M367.9 545 L381 545 L381 543.9 L389.8 543.9 L389.8 542.9 L398.8 542.9 M367.9 545 L367.9 550.1 L378.8 550.1 L378.8 567.6 M398.8 542.9 L429.7 543.5 M398.8 542.9 L398.8 549.2 L404 549.2 L404 560.9 L409.1 560.9 L409.1 566.3 M429.7 543.5 L430.4 547.1 L436.5 550.8 L437.1 554.4 L437.6 558 L440.2 561.7 L444.4 565.3 M462.8 543.2 L482.1 543.2 L482.1 536.5 L488.8 536.5 M462.8 543.2 L470.7 562 M488.8 536.5 L505.9 536.5 L505.9 541.9 L523.1 541.9 M488.8 536.5 L488.5 542.7 L491.4 548.8 L490.7 555 L493.5 561.1 L491.5 567.2 L493.7 573.4 M523.1 541.9 L527.9 541.9 L527.9 532.9 L531.9 532.9 M523.1 541.9 L523.1 546.9 L529.5 546.9 L529.5 566.2 M6 565.6 L8.9 565.6 M8.9 565.6 L32.9 566.8 M32.9 566.8 L47.8 566.8 L47.8 561.3 L62.5 561.3 M32.9 566.8 L32.9 579.8 L39.9 579.8 L39.9 602 M62.5 561.3 L80.5 561.3 L80.5 574 L94.2 574 M94.2 574 L101.1 574 L101.1 568.1 L121.6 568.1 M94.2 574 L94.2 582.9 L104.1 582.9 L104.1 604.9 M121.6 568.1 L137.3 568.1 L137.3 571.7 L155.5 571.7 M121.6 568.1 L121.6 598 L143.5 598 L143.5 603.6 M155.5 571.7 L183.4 568.1 M155.5 571.7 L155.5 582.5 L169 582.5 L169 599.9 M183.4 568.1 L225.4 567.5 M225.4 567.5 L233.9 567.5 L233.9 573.4 L247 573.4 M225.4 567.5 L225.4 590.9 L231.6 590.9 L231.6 596 M247 573.4 L276.1 574 M247 573.4 L247 594.5 L269.6 594.5 L269.6 598 M276.1 574 L319.8 573.4 M276.1 574 L276.1 577 L285.7 577 L285.7 602.4 M319.8 573.4 L334.5 573.4 L334.5 566.2 L351.6 566.2 M319.8 573.4 L319.8 585.7 L317.5 585.7 L317.5 594.9 M351.6 566.2 L378.8 567.6 M363.7 566.8 L368 595.4 M378.8 567.6 L409.1 566.3 M378.8 567.6 L378.8 594.1 L385.2 594.1 L385.2 597.2 M409.1 566.3 L444.4 565.3 M409.1 566.3 L417.5 600.1 M444.4 565.3 L451.7 565.3 L451.7 562 L470.7 562 M444.4 565.3 L444.4 587.6 L451 587.6 L451 591.7 M454.5 564 L460.1 592.1 M470.7 562 L477.3 562 L477.3 573.4 L493.7 573.4 M470.7 562 L474.8 592.6 M479.1 566.1 L486.7 594.4 M493.7 573.4 L501.6 573.4 L501.6 566.2 L529.5 566.2 M529.5 566.2 L532.3 566.2 M529.5 566.2 L529.5 576.9 L534.6 576.9 M17.1 601.5 L39.9 602 M17.1 601.5 L17.1 608.6 L14 608.6 L14 615.3 L10.9 615.3 L10.9 621.9 M39.9 602 L69.2 602 L69.2 593.1 L75.7 593.1 M39.9 602 L39.3 606.7 L37.6 611.3 L35.4 616 L33.4 620.7 L31.9 625.4 L29.9 630.1 M75.7 593.1 L82.1 593.1 L82.1 599 L92.9 599 L92.9 604.9 L104.1 604.9 M75.7 593.1 L75.7 603.3 L68.9 603.3 L68.9 621.5 L62.2 621.5 L62.2 629.2 M104.1 604.9 L143.5 603.6 M104.1 604.9 L104.1 610.9 L98 610.9 L98 628.6 M143.5 603.6 L147.7 603.6 L147.7 599.9 L169 599.9 M143.5 603.6 L143.5 612.7 L135 612.7 L135 625.8 L126.4 625.8 L126.4 633.7 M169 599.9 L198.3 601.3 M169 599.9 L156.5 626.1 M198.3 601.3 L204.2 601.3 L204.2 596 L231.6 596 M198.3 601.3 L198.3 609.9 L191.9 609.9 L191.9 618.2 L185.4 618.2 L185.4 625.1 M231.6 596 L249.2 596 L249.2 598 L269.6 598 M231.6 596 L231.6 617.4 L216 617.4 L216 630 M269.6 598 L274.5 598 L274.5 602.4 L285.7 602.4 M269.6 598 L264.4 602.4 L262.3 606.8 L257.1 611.2 L253.1 615.6 L251.2 620 L245.2 624.4 M285.7 602.4 L301.1 602.4 L301.1 594.9 L317.5 594.9 M285.7 602.4 L285.7 626.8 L288.8 626.8 L288.8 632.9 M317.5 594.9 L354.3 594 M317.5 594.9 L313.6 622.1 M354.3 594 L364.9 594 L364.9 595.6 L371.5 595.6 L371.5 597.2 L385.2 597.2 M354.3 594 L354.3 606.3 L352.5 606.3 L352.5 617.6 L350.8 617.6 L350.8 630.1 M385.2 597.2 L417.5 600.1 M385.2 597.2 L385.2 626.9 L378.8 626.9 L378.8 631.6 M417.5 600.1 L442.4 600.1 L442.4 591.7 L451 591.7 M417.5 600.1 L405 625.6 M451 591.7 L474.8 592.6 M474.8 592.6 L498 592.6 L498 597.4 L507.3 597.4 M474.8 592.6 L473.6 598.6 L472.7 604.6 L471.1 610.6 L471.5 616.6 L470.9 622.6 L470.1 628.6 M507.3 597.4 L524.9 597.4 L524.9 591.2 L537.6 591.2 M507.3 597.4 L507.3 602.1 L495.9 602.1 L495.9 622.2 M541 607.4 L524.2 607.4 L524.2 624 M6 621.9 L10.9 621.9 M10.9 621.9 L16.8 621.9 L16.8 626 L23.5 626 L23.5 630.1 L29.9 630.1 M10.9 621.9 L10.9 626.7 L13.7 626.7 L13.7 660.9 M29.9 630.1 L62.2 629.2 M29.9 630.1 L29.9 633.2 L36.4 633.2 L36.4 656.4 M62.2 629.2 L98 628.6 M62.2 629.2 L64.6 634.1 L67.1 639 L67.9 643.9 L67.2 648.8 L69.6 653.7 L71 658.6 M98 628.6 L117.6 628.6 L117.6 633.7 L126.4 633.7 M98 628.6 L98 648.7 L108.9 648.7 L108.9 653 M126.4 633.7 L136.9 633.7 L136.9 629.9 L149.6 629.9 L149.6 626.1 L156.5 626.1 M126.4 633.7 L126.4 653.7 L132.8 653.7 L132.8 663.9 M137.8 630.8 L143.3 660 M156.5 626.1 L185.4 625.1 M156.5 626.1 L156.5 633.9 L158.6 633.9 L158.6 641.3 L160.6 641.3 L160.6 653.5 M185.4 625.1 L212.7 625.1 L212.7 630 L216 630 M185.4 625.1 L187.8 630.8 L189.3 636.6 L194.8 642.4 L197.7 648.2 L198.7 654 L201.4 659.7 M216 630 L245.2 624.4 M216 630 L216 639.7 L227.4 639.7 L227.4 651.7 M230 627.3 L236.2 648.6 M245.2 624.4 L288.8 632.9 M288.8 632.9 L296.7 632.9 L296.7 632.1 L303.4 632.1 L303.4 631.3 L306.3 631.3 M298.7 632.2 L302.5 652.4 M321.4 631 L350.8 630.1 M350.8 630.1 L374.8 631.3 M350.8 630.1 L350.2 652.3 M378.8 631.6 L385.7 631.6 L385.7 625.6 L405 625.6 M405 625.6 L434.9 624.2 M405 625.6 L405 632.9 L411.1 632.9 L411.1 643.7 L417.2 643.7 L417.2 647.1 M434.9 624.2 L455.2 624.2 L455.2 628.6 L470.1 628.6 M451.6 626.3 L452.2 641.1 M452.5 649.3 L452.7 655.2 M470.1 628.6 L480 628.6 L480 625.4 L485.5 625.4 L485.5 622.2 L495.9 622.2 M470.1 628.6 L470.4 659.4 M495.9 622.2 L507.8 622.2 L507.8 623.1 L516.8 623.1 L516.8 624 L524.2 624 M495.9 622.2 L495.9 633.5 L501.4 633.5 L501.4 658.1 M524.2 624 L530.4 624 L530.4 629.7 L542.8 629.7 M524.2 624 L524.2 633 L537.4 633 L537.4 664.6 M6 660.9 L13.7 660.9 M13.7 660.9 L26.5 660.9 L26.5 656.4 L36.4 656.4 M13.7 660.9 L13.7 676.5 L6 676.5 M36.4 656.4 L55.6 656.4 L55.6 658.6 L71 658.6 M36.4 656.4 L36 662.3 L32.8 668.2 L30.8 674.1 L30.3 680 L30.8 685.8 L28.6 691.7 M71 658.6 L87 658.6 L87 655.8 L99.4 655.8 L99.4 653 L108.9 653 M71 658.6 L71 673.5 L54.7 673.5 L54.7 690.2 M108.9 653 L132.8 663.9 M108.9 653 L108.9 663.8 L97.5 663.8 L97.5 676.6 L86.2 676.6 L86.2 682.6 M132.8 663.9 L155.9 663.9 L155.9 653.5 L160.6 653.5 M132.8 663.9 L132.8 681.4 L125.5 681.4 L125.5 691.9 M160.6 653.5 L172.1 653.5 L172.1 659.7 L201.4 659.7 M160.6 653.5 L160.6 675 L147 675 L147 681.5 M201.4 659.7 L209.5 659.7 L209.5 657.4 L213.5 657.4 M201.4 659.7 L199.2 664.6 L197.9 666.6 M191.6 672.4 L188.6 674.4 L188.5 677.5 M333.5 657.4 L345.3 656.4 M353.2 655.9 L358.8 655.9 L358.8 656.1 M350.1 656.9 L350.1 658.7 M455.8 656.5 L464.9 656.5 L464.9 659.4 L470.4 659.4 M470.4 659.4 L474.3 659.2 M493.8 658.4 L501.4 658.1 M470.4 659.4 L470.4 664.2 M501.4 658.1 L507.9 658.1 L507.9 664.6 L537.4 664.6 M501.4 658.1 L502.1 663 L498.2 668 L496.9 673 L496.9 674.5 M496.3 679.9 L495.7 681.3 M537.4 664.6 L544 664.6 L544 655.8 M537.4 664.6 L537.4 667.6 L524.9 667.6 L524.9 681.4 M6 688.6 L9.9 688.6 L9.9 691.7 L28.6 691.7 M28.6 691.7 L33.8 691.7 L33.8 690.9 L46.2 690.9 L46.2 690.2 L54.7 690.2 M28.6 691.7 L29.4 700.2 M29.8 704.3 L30.1 707.1 M45.5 690.7 L45.6 704.2 M54.7 690.2 L82.9 690.2 L82.9 682.6 L86.2 682.6 M54.7 690.2 L53.7 722.5 M86.2 682.6 L118.3 682.6 L118.3 691.9 L125.5 691.9 M86.2 682.6 L96.6 723.6 M125.5 691.9 L142.4 691.9 L142.4 681.5 L147 681.5 M125.5 691.9 L125.5 712.7 L127.9 712.7 L127.9 716.7 M147 681.5 L150.9 681.5 L150.9 689 L179.3 689 M147 681.5 L147 692.7 L154.2 692.7 L154.2 704.3 L161.3 704.3 L161.3 714.4 M195.3 694.3 L205.1 694.3 M179.5 689.5 L179.5 703.6 L181.8 703.6 L181.8 717.6 M196.6 692.4 L199.8 701.3 M506.3 687.5 L506.3 684.6 L517.4 684.6 L517.4 681.4 L524.9 681.4 M524.9 681.4 L534.7 681.4 L534.7 685.2 L545.3 685.2 M524.9 681.4 L523.2 710.1 M52.2 722.5 L53.7 722.5 M53.7 722.5 L96.6 723.6 M53.7 722.5 L53.7 725.3 M96.6 723.6 L106.2 723.6 L106.2 720.1 L119.7 720.1 L119.7 716.7 L127.9 716.7 M127.9 716.7 L150.8 716.7 L150.8 714.4 L154.1 714.4 M157.7 714.4 L161.3 714.4 M127.9 716.7 L127.7 740 M146.3 715.4 L150.2 748.8 M161.3 714.4 L165.8 714.4 L165.8 716 L175.4 716 L175.4 717.6 L181.8 717.6 M161.3 714.4 L161.3 718.4 L168.6 718.4 L168.6 725.8 M181.8 717.6 L181.8 729.9 L187.3 729.9 L187.3 739.9 M188.6 740.6 L192.8 740.6 L192.8 745.2 M221.9 743.7 L221.9 754.1 M99.4 746.1 L106.5 746.1 M106.5 746.1 L111.7 746.1 L111.7 747.7 L115.1 747.7 M106.5 746.1 L105.6 750.7 M143.2 747.7 L152.1 747.7 L152.1 749.6 L155.8 749.6 M198.5 749.8 L201.8 749.8 L201.8 752.2 M204.3 754.1 L221.9 754.1 M205.4 751.6 L204.8 754.5 M221.9 754.1 L233.9 754.1 M221.9 754.1 L221.9 759" fill="none" stroke="#626767" stroke-width="0.9"/>
<path d="M133.8 753.5 L135.7 754.5 L137.6 752.5 L137.5 754.4 M134.7 756.3 L134.2 757.9 M125.3 742.3 L123.2 741 M121.8 756.5 L120.3 757.8 L118.7 758.4 M119.5 757.7 L118.6 759.7 M130.9 752.4 L129.5 754.4 M118.9 757.4 L118 756.8 L116.5 755.2 M135.7 746.4 L135.1 745.6 L136 744.2 M128.5 743.6 L130.6 741.5 L131.7 743 M124.8 750.6 L124.6 751.5 M133.8 757.2 L135 759.1 M124.4 749.7 L122.7 750.8 L124 752.4 M113.3 757.1 L112 757.1 M124.7 743.1 L126.6 743.3 L125.7 742.5 M117.2 752.6 L115.7 750.6 L117.9 750.7 M126.2 744.7 L125.5 743.6 L126.2 742 L128.3 742.6 M119.2 757.7 L121.2 758.2 L122.5 756.5 L122.2 755 M127.9 758 L130 757.8 M129.1 753.3 L128.1 753.1 L129.9 751.4 M140.8 749.8 L141.3 749.8 M123.8 742.1 L123.9 742.3 L123.9 740.3 M139.8 746.7 L140.6 747.9 L140 748.8 L139 748.7 M138.9 752.6 L141 751.9 L139.5 753.4 M128.6 754 L129.4 753.9 L130.7 754.5 M139.9 746.6 L139.2 748.5 L138.8 750.4 L137.4 752 M127.7 746.9 L127.8 747 L126.4 748.5 M136.2 753.1 L135.8 753.6 L137.8 753.7 L139.7 752.8 M131.4 755.7 L132.3 753.6 L130.8 753.3 M134.8 744.3 L133.3 745.3 L135.5 747.4 L134 749.1 M115.9 757.4 L114.5 755.4 L114.4 754.9 M133.4 750.8 L134.4 750.3 M124.3 757.2 L125.9 758 L126.1 760 M131.2 745.8 L131.4 745.1 L131.8 747.1 M140.6 747.8 L141.3 747.3 L139.7 747.7 L140 749.7 M145.9 751.2 L147.3 751.9 L146.8 751.1 M144.1 749.9 L144.6 751.7 L144.1 751.4 M119.9 745.6 L119.4 747.6 L121.2 748.1 L120.2 750.2 M129.4 747.8 L131.3 746.9 L133.2 745.4 M125.7 748.9 L124.7 750.8 L126 749.7 L125 748.2 M133.3 748.8 L134.9 750.5 L136.6 748.4 L135 747.4 M136.8 751.2 L136.9 751.1 L136.3 752.2 L136.7 750.1 M120.8 748.5 L122.5 748.7 M127 750.6 L129 751.2 L130.5 752.7 L130.4 753.5 M137.2 756.2 L138.6 754.3 L140.1 755.2 M127.1 745.5 L129 743.9 L128.9 744.2 M129.4 746.3 L129.1 746.5 M113.7 753.3 L115.1 754.6 L115.8 752.5 M137.3 757.6 L138.2 755.6 L139.7 754.4 M134.6 757.2 L136.3 759.3 L137.2 759.1 L135.8 757.7 M119.5 750.2 L118.9 748.3 L117 748.7 L118 750.3 M116.7 748.1 L117.5 748 L116.9 748.7 M122.3 750.5 L122.3 752.3 L122.6 752.8 L121.5 753 M120.9 753.6 L123 755 L124.6 754.8 L124.1 753.2 M132.1 741.1 L132.1 740.9 M125.6 748.6 L123.9 748.7 L124.1 748.2 M141.7 757 L142.5 755.8 L140.8 757.9 M135.3 754.9 L136.2 754.3 M144.6 752.8 L144 753.8 L143.4 752.9 M134.1 757.3 L134.2 757.7 L134.5 758.8 M125.8 742.2 L124.5 740.9 M129.2 756.9 L130.3 754.7 L130.2 756.4 L130.7 756.1 M128.3 742.2 L129 740.4 M142.4 755.7 L140.9 754.6 L139.9 753.1 M122 744.6 L123.8 743.9 L124.9 743.1 M128 755.4 L126.3 756.1 M122.2 752.3 L124.4 750.3 L125.3 750.6 L126 751.1 M143.9 752.9 L143.1 752.7 L142.1 753.7 L143.1 752.3 M120.4 752.3 L121.1 752 M114.1 754.1 L112.7 752.1 L114.2 753.6 M131.8 756.9 L129.9 758.7 L129.9 760.6 L127.9 759.5 M126.3 745.9 L127.9 747.8 M118.8 752.7 L118.4 752.8 L116.5 752 L114.8 752.2 M144.2 751 L143 748.8 L143.2 748.8 L143.5 748.2 M133.9 753.2 L134.7 754.9 L136.9 755.2 M116.9 749 L118.3 748.1 L116.6 746.3 M127 750.6 L126 750.6 M120.7 752.8 L122.4 754.5 L120.5 755.7 M125.3 754 L127 754.6 M138.6 750.6 L137 751.4 L138.3 749.3 M115.7 754.6 L114.1 752.7 L112.6 751.6 L113.4 750.7 M114.2 753.9 L112.1 752.2 L114.2 753.6 L113.9 752.6 M130.5 742.7 L129.7 740.5 M132.5 755 L134.6 754 L135 754.5 L133.5 755.7 M127.2 748 L126.4 749.8 L126.2 749.6 M127.4 753.9 L127.6 756 M132.9 742.3 L133.7 741 L131.5 742.8 M120.3 752.8 L119.8 751.6 L118.8 750.3 M131.7 746.7 L131.1 748.1 M140.5 752.1 L141 751.7 M117 755.1 L116.5 753.3 L116 754.4 M159.1 754.2 L159 754.1 L159.2 752.3 M170.7 734.7 L170.6 735.6 L170.1 737.8 L171.5 739.6 M173.6 742.2 L172 741.9 L174 739.8 L175.2 738.5 M176.4 739.4 L176.1 741.5 L173.9 743.3 L172.7 741.3 M159.8 727 L160.2 727.3 L160.2 725.5 L158.5 724.8 M176.9 730.4 L177.6 729.9 M175.6 735.5 L177.4 736 M173.4 736.7 L175.6 735.5 L173.8 734.6 L175.1 735.9 M169.3 740.1 L170.9 741.1 L170.6 740.8 L170.7 742.6 M159.8 723.6 L161.6 722.9 L161.2 721.3 L160.3 721.6 M169 730.9 L169.4 731.6 L170.3 732.6 M160.4 750.8 L159.9 752.6 L161.6 753.1 L162.9 754.6 M153.1 726.2 L153.6 724.5 L154.8 725.5 M182.9 740.1 L182.3 741.5 M156.1 725.7 L155.9 726.5 M163.4 736.2 L161.2 738.3 L163.3 736.7 M161.3 745.7 L162.4 746.7 L161.5 745 M166.1 727.1 L164.7 726.4 L163.1 728.2 L163.8 729.4 M158.7 744.6 L157.7 742.8 M168.3 728.7 L166.5 728 M165.3 728.5 L163.5 730.6 L162.1 731.9 L160 732 M182.9 738.8 L182.7 736.7 L181.2 737.9 L181.2 739.5 M182.3 741.8 L182.9 739.8 L180.8 740.9 L180.4 742.6 M164 723.1 L163.4 721 L164 722.1 M166.6 725.4 L165 724.2 L166.8 726.2 M162.4 727.8 L162.6 727.6 L164.2 729.6 M154.1 711 L155.2 709.4 M166.1 743.9 L164 742.7 M157.4 744.4 L158.7 742.5 M162.8 726.7 L163 726.5 M181.1 737.4 L182 739.3 L184 741.5 M159.8 718.2 L158 717.9 L159 718.1 L158.5 719.9 M161.6 733.8 L161.8 734.1 L159.8 735.2 L158.1 736.9 M162.4 726.5 L162.3 724.9 L160.6 723.8 M150.1 722.3 L150.6 721.1 M158.5 752.1 L160.3 753.6 L160.7 753.9 M173.6 739.4 L175.3 737.4 L175.6 735.7 L176.6 736.2 M165.4 741.2 L166.4 739.3 L167 740.8 L165.3 742 M158.3 724.5 L160 723.7 M172.3 734 L170.8 732.8 L169.8 734.7 M156.4 714.4 L158.6 715 L158.3 715.1 M164.5 737.1 L164.6 738.9 L164.9 739.6 L164.5 740.8 M153 722.6 L154.5 722.7 L154.5 723.6 M159.2 746.3 L157.2 748.4 M162.7 740.6 L163.9 738.9 L165.5 740.5 L164.6 739.6 M168.2 741.3 L168.3 743.2 L170.3 743.1 L168.5 744.3 M168.3 731.1 L167.5 730.9 L168.9 728.9 M155.6 719.4 L155.7 717.8 L153.7 719.7 L153.6 719.5 M181.5 737.6 L180.4 736.2 L181 736 L180.6 736.9 M176.3 731.5 L174.7 730 M158.1 727.2 L158.3 727.5 M169.5 733.2 L171.2 733.3 L171.6 733.8 M151.2 724 L150.9 723.6 L153 722 L153.7 723.1 M179.2 741.8 L180.6 742.2 L180.5 744 M167.7 725.9 L168.2 727.2 L166.7 727.1 L164.5 728.4 M178.4 741.3 L178 742.9 L178.7 744.8 M156.4 721.5 L157.5 721.5 M164.5 724.8 L162.7 725.1 L162.9 726.4 L164.2 727.4 M180.6 735.6 L179 733.6 M164.6 748.6 L163.7 746.7 L164.9 747.6 M170.8 732.4 L171.3 733.4 L172.8 733.9 L170.7 735.6 M151.5 726.4 L151.7 728.2 M155.3 729.1 L154.9 728.2 M180.7 743.1 L179.1 744.9 M152.4 721.3 L153.7 721 L154.4 721.6 M160.7 722.2 L162.3 720.2 L163.8 722.2 L162.3 722.8 M174.1 730.9 L174.7 729.5 M168.4 743.9 L169.4 744.8 M160.8 756.5 L159.3 756.2 L159.1 757.6 M157.3 724.3 L155.4 724.4 L154.2 725.2 L154.6 723.4 M174.9 729.7 L174.2 730.9 L172.2 731.4 M179.9 742.8 L177.8 742.8 M165.7 731.4 L165.4 731.9 M178.5 738.4 L180.4 737.5 M152.6 726.7 L150.8 726 L149.5 726.8 M173.3 731.8 L173.8 733.6 M160.1 732.2 L160.2 732.2 L158.4 732.3 L160.1 731.9 M151.4 725.6 L150.6 725 M170.4 738.4 L168.3 736.9 M170 743.7 L168.1 741.8 M160.9 743.4 L161.2 742.9 L161 742.7 L159 742.1 M158.8 754.2 L160.8 756.1 L160.3 757.7 M155.3 729.9 L154.9 728.8 L155.4 728.5 L155.9 728.3 M178 741.7 L178.8 743.4 M152.7 726.3 L151.2 728.2 L149.2 728.2 M157 732 L157.9 733.1 M180.7 738.1 L182 737.1 L180.5 736 M174.5 733.7 L175.7 733.5 M166.3 743.1 L166.1 741.4 M152 722 L150.9 722.5 L148.7 723.4 M167.6 727.1 L168.2 728.6 L169.4 727.7 M157.2 720 L157.9 718.8 L159.4 717.2 L160.5 715.7 M170.5 739.6 L171 738.4 L170.7 737.5 L169.6 737.9 M172.1 742.5 L171.4 742.4 L171.5 743.9 L170.6 744.2 M170.5 741.5 L170 743 L171.5 743.5 M161.1 719.5 L161.3 718.1 L159.6 720 L157.5 720 M158.7 717.9 L160.1 716.9 L160.8 716.1 M219.2 695.8 L217.3 695.3 L219.4 694.9 M225.3 674.9 L225.8 672.9 L225.9 673.6 M197 715.9 L196.7 717.2 L197.5 715.8 M199.5 725.2 L201.3 725.5 L202.6 726.2 L201.6 728.3 M201 702.4 L199.6 703.8 L199.5 703.7 L200.1 702.6 M192.6 717.6 L194.6 715.8 M221.7 680.5 L222.5 681.3 L221 679.5 M196.7 721.5 L195.9 721.5 L193.9 720.2 L195.7 719.2 M195.5 724.3 L195.3 722.4 M196.3 722.9 L195.4 724.1 M210.9 702.3 L211.1 702.9 M183.6 714.8 L181.9 713.9 M211.9 696 L210.9 698.2 M195.9 701.5 L197.7 699.9 L199.8 700.2 L199 698.4 M201.5 705.1 L201.4 706.2 L203.6 704.4 M227.8 678 L226.7 680.2 L227.2 680.3 L228 681.1 M205.9 695 L206.8 692.9 M210.4 698 L210.2 698.3 L212 700.1 L210.9 698.9 M204.3 687.5 L202.5 689.2 L202.9 688.3 M214.8 673.8 L216.7 674.6 L214.8 674.2 M222.9 690.4 L222.1 692.3 L223.6 694.2 M215.5 675.6 L216.2 675.1 L215.3 675.1 M216.2 695.3 L217.8 694.8 M200.7 710.6 L200.4 712.6 L200.8 713.7 M225.1 672.8 L223.3 671.5 M210.3 702.2 L208.6 704.4 L208 703.9 L208.3 703.4 M220.7 691.3 L219.2 693 L221.1 691 M211.4 694.4 L209.6 692.9 L208.8 693.8 M217.2 681.7 L219.2 681.5 M210.6 709.6 L211 707.9 L212.1 708 L213 708.3 M196.4 716.8 L196.9 717.7 M195 711.5 L194.8 712.5 L194 710.4 L193 710 M192.6 722.5 L190.8 720.8 M200.6 713.4 L202.1 715.5 M204.7 698.6 L205.2 697.8 L205.9 696.7 M214.7 703.5 L212.8 702.5 L213.3 703 L212.2 701 M216.5 677.4 L217.7 677.8 L219.9 676.6 L220.9 676.3 M208.6 690.7 L207.1 690.6 M198.7 713.7 L196.6 712.1 L198.2 712.7 M216.7 698.2 L217.1 698 L217 697.7 M226.5 678.7 L224.4 678.9 L226 680.5 L224.6 681.9 M196.9 714.6 L196.5 712.7 L195.5 710.9 L193.6 709 M212.9 704.8 L211.6 706.7 M198.8 735.6 L196.9 736.3 M219.2 696.3 L218.5 694.6 L218.9 692.5 L218.6 691.2 M218.2 703.5 L216.3 703.7 L217.1 702.9 M208.7 705.5 L206.8 703.4 L206 705.6 L207.4 705.4 M206.6 686.4 L208.2 687.3 L207.7 685.6 M203.5 688.6 L205.6 688.9 L206 687.8 M222.7 679 L222.2 678.9 L223 677.9 L223.5 676.6 M191.9 706.7 L193.8 705.2 L193.3 706.9 M213.8 688.1 L213.2 689.6 M213.3 705.2 L215.5 706.6 L217.5 708.4 M226.7 678.8 L225.7 680 M203.2 706.5 L204.7 707.2 L205.3 705.9 M196.7 704.3 L195 703.6 L196.3 704.5 L195.8 705.7 M185.3 718.3 L185.7 719.7 L184.4 719.4 L183.3 720.9 M209.8 687.9 L210.8 686.9 L210.5 686.4 L210 688.2 M211 676.3 L213.1 675.7 M220.5 704 L220 703.8 L219.6 705.7 M209.9 689.1 L208.1 688.4 L208.8 689.8 M209.9 678.3 L209 676.2 L209.7 676.3 L207.6 676.3 M217.6 693.7 L217.1 693.9 L217.3 694.6 L216.2 693.5 M224.6 680.4 L223.2 680 L223.8 681 L225.9 680.6 M218.5 685.2 L220.4 683.8 L221.2 683.2 L221 683.5 M215.3 689 L217.2 687.5 M186.5 715.8 L188.1 714.6 L190 716.2 M213.3 702.1 L211.4 703.6 L210.6 702.5 M218.2 672.7 L217.5 674.4 L219.4 672.5 M210.7 695.9 L208.9 696.1 L209.4 697.5 M204.5 692.9 L204 691.5 L205.4 691.8 M204.5 715.2 L205.1 714.9 L206.6 713.3 M194 718.9 L192.9 719.7 L193.4 719.1 M212.9 695.6 L212.4 697 L211.5 695.6 L210.7 693.9 M204.8 679.5 L205.5 680.3 M205.3 699.1 L207.3 699.8 L206.3 701 L205.6 702.6 M201.3 716.4 L202.2 717.5 M198.8 734 L197.3 735.9 M222.8 676.2 L221.3 674.4 M215.5 700.6 L214.5 701 L214 702.8 L215.4 701.9 M222.5 681.7 L223.7 681.8 L224.8 682.9 M215.8 690.2 L217.4 688.8 L216.4 687.1 M223 693.6 L221.6 693.3 L220.2 695.2 L220.5 696.7 M204.5 703.7 L202.8 702.5 L204.4 702.8 L205.7 705 M216.6 705.9 L218.4 706 M222.7 682.8 L223.3 682.8 L223.1 683.3 L223.6 683.3 M215.1 683.8 L216.8 685.4 L215.3 686.5 M189.2 712.3 L189.6 710.8 L190.3 712 L191.6 712.3 M211.6 693.4 L210.6 694.3 L209.7 694 L208 694.2 M217.6 706.8 L216.7 707.8 L215 708 M197.7 701.9 L196.4 699.8 L195.1 699.9 M213.8 694.4 L213.4 692.7 L213.1 692.7 M221.9 693.5 L221.6 692.2 L223.2 692.2 L222.1 692 M210.5 697.9 L211.3 698 L212.7 698 M190.6 715 L192.6 716.3 L191.2 716.9 M209 702 L208.8 702.9 L208.8 702.5 L209.1 701.5 M213.4 698.7 L212.5 700.5 L214.1 701.4 L214.8 700.8 M209 691.4 L207.4 689.8 M218.5 683.3 L219.5 683.2 L219.1 684 M198.6 713 L198.8 710.9 M213.2 706.1 L214.5 707.5 L216.1 706.8 L214.1 706.7 M213.9 692.7 L215.3 694.4 L213.5 694.5 L212.1 696.4 M211.4 674.1 L212.7 675.1 L212.7 674.5 L214 672.8 M217.4 697.5 L216.7 696.3 M224.6 683.6 L226.7 683.8 L228.7 685.9 M215 675.3 L214.7 675.3 L216.2 676.3 L215.8 674.9 M215.7 690.1 L215.8 689.3 L216.8 690 M217.6 675.1 L218 677.2 M215.7 698 L216.7 696.2 M215.2 687.9 L217.4 686.2 L215.8 688 L214.8 688.1 M214.4 708.1 L215.6 709.2 L215.8 711 M223.1 676.5 L221.3 677.1 L222.3 675.2 M197.7 729.2 L197.8 727.3 L196.5 726.7 L195.3 725 M225.6 673.2 L223.8 675 L225.5 673.4 M217.7 675.5 L218 675.9 L218.4 677.9 M211.5 682.1 L213.2 680.8 L214 679.4 M226.3 688 L225.8 687.8 L225.9 689.4 L227 688 M214.5 706.9 L212.6 706 L212.8 704.8 L211.2 706.6 M200.2 726.2 L198.3 725.8 L200.3 726.1 L198.5 728.1 M200.7 726.5 L202.1 727.1 L203.4 726.2 L203.7 724.7 M210.5 684.8 L211.1 685.3 L212.7 684.5 M194.5 708.4 L194.2 707.3 M181.9 716.3 L183.2 715.5 L182.6 717.3 M193.6 711.9 L194.8 711 L196.4 712.3 L194.7 710.9 M200.9 731.2 L200.6 731.5 L202.1 730.3 M190.1 720.4 L191.8 721.6 M182.4 716.2 L180.6 714.1 M193.5 717.9 L193.5 716.9 M206.6 694.4 L204.6 695 L203.8 693.6 M202 717.7 L200.1 717.6 L198.7 718.5 M214.4 682.2 L213.9 683.3 L214.3 684.2 M202.3 697.2 L203.8 697.4 L202.6 697.2 L203.8 697.1 M203.3 712.6 L201.4 711.8 M224.3 689.8 L224 690.4 M216.1 678.2 L216.2 677.8 L218.3 679.9 L219.6 680 M205.1 679.5 L205.9 680.2 L203.7 681.4 L204.8 683.5 M207.9 692.5 L210 692.6 L211.3 694 M196.3 711.5 L194.2 709.8 L195.8 710.1 L195.5 711.4 M197.9 720.9 L196.5 722.7 L197.5 720.7 L197.8 721.5 M215.2 706 L216.9 705.8 M199.8 719.5 L199.6 718.5 M204.1 711.4 L201.9 712.3 M193.3 711.9 L192 710.1 L189.8 712.2 L191.9 710.1 M187 713 L186.7 713.8 L185.4 715.9 L185.4 716.6 M210.1 703.6 L211.1 705.7 L210.7 706.1 M205 700.1 L204.3 697.9 L205.6 698.7 L206.5 699.4 M214.7 676.7 L212.7 678 M225.9 676.6 L226 675.8 L228.1 677.4 L229.2 679.2 M197.2 701.5 L196.8 702.4 L194.9 704.2 L197 706.2 M197.5 725.7 L195.8 723.8 L196.5 726 M212.4 702.1 L211.6 700.3 M197.2 704.7 L198.1 704.2 L197 703.5 L195.5 701.8 M185.9 717 L184 718.4 L184.5 719 M207.1 704.9 L209 703.2 M217.9 673.1 L216.6 671.9 L217.8 673.2 M199.4 710.7 L197.4 712.3 L198.7 713.1 M208.2 700.2 L208.6 700.6 M223.8 680.9 L222.9 681.9 L221.2 682.1 M216.6 708.1 L215.3 707.6 L215.6 708 L216.4 708 M218.6 675.5 L216.4 676.3 L217 675.4 L215.2 674.4 M210.7 706 L209.3 706.5 L208.4 704.5 M216.9 698.6 L215.6 700.7 L214.7 700.1 L213.9 700 M200.1 726.4 L201.2 726.7 L201.8 728 L202.2 725.9 M192.7 719.5 L194.9 718.5 L196.4 718.9 M201.4 711.5 L200.8 709.8 L202.2 711.4 L202.3 711.8 M213.5 685.3 L212.8 687.2 L211.8 689.4 L210.6 688.7 M222.4 684.5 L224.2 685.3 L222.4 685.1 L223.9 687.3 M207 708.7 L205.6 708.1 L206.7 709.7 L206.8 710.4 M208.2 709.8 L207.6 708.2 M206.4 691.4 L208.2 692 L208.5 690 L208.7 688.2 M198.5 723.7 L197.5 722 M211.5 681.2 L210.8 681.8 L208.7 681 L208.8 680.8 M198.8 715 L198.4 714.5 L200.6 715.5 L199.2 717.1 M216.4 684.3 L215.1 682.9 L213.7 681.2 M204.4 707.8 L202.3 705.9 L202.9 705 M212.9 700.5 L214.9 702.5 L216 702.7 L218 703.6 M199.8 710.9 L199.9 711.8 M220 701.7 L220.2 700.7 M218.7 686.3 L217.3 684.1 M202.1 728.9 L203.9 726.9 L205.4 728.4 L206.9 730.2 M212.7 706 L213.7 706 L214.2 706.2 M206.5 704.4 L205 702.7 L205.1 703.3 L206.1 702.2 M189.7 718.2 L191 719.5 M208 684.7 L207 686.7 M208.2 682.6 L206.9 681.7 L208.8 680.7 M200 715.1 L201.5 713 M212.9 686.2 L212.1 685.5 L213 687.5 L213.7 687.2 M202.1 701.8 L203.5 701.4 L204.3 699.3 L202.6 697.5 M216.2 698.6 L217.9 699.6 M225.7 676.1 L223.6 678.1 M212.4 682.4 L210.9 683.8 M221 679 L222.1 680.4 L221.2 678.9 M221.3 692.9 L222.7 692.7 L220.7 693.6 L218.7 693.9 M201.1 716.8 L200.4 714.9 L202.3 714.4 L203 713 M216.5 686.2 L214.6 686.8 L215.9 687.4 L218 688.3 M201.5 733.9 L199.7 734.6 M208.2 695.4 L208.7 695.2 L209.6 696.5 L210.9 697.3 M212.7 683.7 L212.8 684.3 L213.4 683.4 M195.1 716.6 L197.3 718.1 M205.5 711.6 L203.7 710.3 M200.5 715.8 L198.7 717.7 L198.4 717.5 M206 689.7 L205.9 690 L205.2 689.8 L203.6 689.5 M218.8 684.5 L220.8 683.3 L220.7 684.9 L219 682.8 M207 710.7 L206.7 709.9 L208.8 712.1 L207.2 713.7 M217.1 684.6 L216.8 682.4 M194.6 705.1 L196.1 703.6 L197.2 705.7 L197.1 705.4 M188.1 716.3 L188.5 716.3 L189.7 717.4 M217.7 689 L218.8 687.9 L220 688.9 L218.3 686.8 M224.1 682.1 L226.1 681.8 L226.2 679.9 L224.3 681.4 M210.6 687.9 L212.5 688.3 M222.2 691.7 L221.6 691.8 L221.4 692 M194 703.9 L192.8 703.5 M203.1 700.5 L203.6 699.9 L202.9 698.8 M193.2 711.1 L193.3 711.8 M214.8 687.4 L212.6 686.6 L212.2 685.1 L211.6 687.2 M208 695.8 L208 694 L207 695.2 M200.2 704.5 L199.3 704.8 M196.8 701 L197.8 702.6 M224.3 677.3 L223.5 677.8 L224.4 678.8 M197.1 707.5 L197.7 705.6 L198 704.8 L198.8 703 M213.7 688.4 L212.9 686.5 L214.8 685.8 L213.2 683.8 M205.9 681.9 L205.5 683.4 L207.3 683 M218.8 683.4 L217.6 685.6 L216.9 686 L216.6 687 M198 716.5 L197.8 718 M205 681.5 L205.9 682.6 M224 676.6 L223.9 676.9 L223.4 676.3 L223.1 674.7 M189.5 706.9 L191.1 706.1 M193 703.8 L193.9 705.5 L194.8 705.6 M211 708.9 L209.8 710.9 L209 709 M201.3 728.9 L199.9 731 L198 733 L200.2 731.1 M201.1 723.1 L201.3 724.8 L201 725.9 L199.1 726.6 M191.4 718.4 L190.6 720.2 L189.6 721.3 M204.3 679 L205.1 678.2 L205.4 678.8 M193 717.7 L194.7 716.7 L196.7 718.8 L198.1 720.9 M186.8 718.6 L186.2 716.7 M217.5 691.9 L217.4 693.6 L217.8 693.2 M211.2 695.2 L211.9 697 L211.2 695.7 L210.3 693.9 M210.3 703.8 L211.5 701.7 M215.8 702 L217.7 702.5 L216.3 700.8 L216 701.8 M202.7 710.7 L203.1 711.1 M222.2 695.2 L223.6 695.8 L222.1 694.8 L221.3 694 M213.5 695.7 L213.8 694.7 M209.5 687.4 L208 686.8 L206.9 686.8 L208.6 687.2 M219.8 703.2 L221.3 704.2 L219.4 704 M214.8 697.4 L213.7 698.9 L214.2 698.5 L216 698.6 M222.7 688.8 L221.5 686.6 L223.2 687.6 L224.5 689.3 M214.6 705.5 L213.7 703.4 L212.2 704.9 M204.4 684.2 L203.1 682.1 L203 683.9 L205.2 684 M202 713.9 L201.8 712.4 L202 711.5 M187.8 719.8 L188.4 719.3 M189.4 720.7 L189.6 720 L190 719.4 M195.8 725.9 L197.8 727.5 M215.6 704.4 L215.3 702.8 L213.6 702.1 M226.8 685.2 L227.4 686.5 M189.3 708.2 L191.2 709 M220.3 674 L221.4 673.7 L220.8 672.9 L221.7 672.4 M211.1 682.3 L212.7 680.2 L210.5 679.2 L211.9 678.5 M203.8 716.1 L203 715.1 L201.7 713 L200.6 714.8 M227 674.2 L224.9 675.1 L223.9 676.9 L222.7 678.1 M214 698.5 L212.2 699 L213.4 697.2 M193 709.6 L191.3 710.2 M205 685.9 L205.7 684.8 M200 719.6 L202.1 718.3 L203 720.1 M216.4 673.6 L217.6 674 M209.5 677.5 L209.1 675.9 M208.9 688.2 L210.3 688 M222.9 742.3 L221.4 743.2 M213.4 736.9 L211.9 736.6 M212.9 737.9 L213.9 739.8 M230.7 747 L229.4 748.6 L230.5 749.7 M216.8 738.1 L218.7 738 L219.7 736.9 M204.5 736.5 L204.7 736.7 L203.7 736.4 M230.1 746 L229.9 745.4 L229.2 745.6 M229 742 L229.5 740.9 L230.5 741.5 L231.7 740.3 M203 735.8 L204.2 738 L202.7 736.2 M199.9 733.6 L199.4 732.7 L198.6 733.1 M204.1 738.1 L204.2 738.5 L204.6 737.5 L203.9 738 M224.5 744.2 L222.5 743.6 L222.1 745.4 M222.4 740.4 L221.3 739.6 L221.3 739.3 L220 737.3 M237.9 755.4 L236.4 756.3 M224.3 743.7 L226 742.2 L227.5 740.1 L226.9 739.5 M200.7 736.5 L201.7 736.2 L203.4 736.9 M213.4 741.6 L215.2 742.7 L215.9 743.6 L215 741.7 M226 745.7 L224.5 745.6 L222.9 745.6 M220.3 743.3 L219.3 743.2 L221.4 744.5 M230.2 747.2 L229.4 749.1 L229.9 748.3 M228.1 741.8 L227.1 739.9 L228 741.4 M226.8 745.5 L227.9 743.4 L229.7 745.4 L227.8 747.5 M239.1 757.9 L240.7 756.5 L241.1 758.1 L242.2 758.7 M237.8 755.3 L239.2 756.8 L239.9 755.4 M232.6 749.2 L233.7 749 L235.6 749.8 L236.6 751.3 M219.7 740.2 L219.9 741.1 L218.5 739.8 L220.6 740.4 M239.4 755.1 L238.2 755.8 M207.6 737.3 L208 737.7 M228.1 746.8 L227.7 745.5 L229.4 746.4 L231.5 746.4 M216.2 741.3 L216 740.9 L214.5 742 M227.5 743.5 L226.9 741.3 L228.7 742.9 L226.8 740.7 M227.4 743 L227.1 742.9 M228.8 743.9 L230.7 745.5 L229.3 744.8 L230.3 744.1 M210.7 738.4 L208.7 738.2 M214 740.7 L215.9 739.1 L215.7 739.8 M222.2 743.2 L224 744.9 L222.7 746.5 M203.5 735.9 L203.4 734.3 L202.5 734.4 L203.1 734.5 M212.3 739.9 L213.2 740.7 L211.6 738.6 L209.7 738.4 M211.9 737.6 L211.8 737.5 L210.1 737.9 M234.9 753.2 L233.3 752.6 M230.4 749.2 L229.2 749.6 L229.6 748.7 M236.3 756.1 L234.6 755.6 L236.7 755.6 M203.8 738.5 L203.1 737.3 L204.9 735.7 M207.5 737.8 L207.4 738.9 L205.3 739.1 L206.4 740.4 M224.7 742.6 L225.5 744.4 M207 738.2 L207.4 738.1 M218 741.7 L219.2 741.6 L220.7 740.9 L219.5 740.2 M214.5 737.1 L216.1 736.6 L216.3 738 L215.4 737.9 M200 736.1 L198.7 735.4 L196.6 733.5 L196.2 735.5 M222.3 742.8 L222.2 743.2 L223.6 741.8 L222.6 743.3 M208.6 736 L210.7 734.4 L208.7 734.4 L209 735.1 M225.6 745.1 L224 742.9 M670 735.6 L672 734.4 M704.9 772.2 L704.1 771.1 M668.3 735.3 L668.8 736.2 M656.7 721.2 L655.8 721.7 L656.8 722 M681.2 754.1 L681.5 755.7 L681.8 753.9 M694.7 758.1 L695.1 759.3 L695.5 759.6 L696.7 758.9 M655.3 714.2 L654 712.9 L654.8 713.8 M692.5 756.8 L691.8 754.8 L692.6 754.5 M690.1 756.4 L690.4 756.3 M676.7 745.9 L677.6 745.3 L678.9 744.1 M706.3 775.6 L704.9 774.3 L706.4 773.8 M644 705.7 L642.8 706.2 L644.4 706 L645.8 706.5 M676.9 746.9 L676.2 746.4 L675.3 744.3 L676.2 744 M678.6 749.1 L678.7 750.9 M655 716.6 L653.6 718.5 L653.7 716.5 M693.7 757.6 L694 757.7 L696.2 756 L696.8 754.2 M689.1 756.9 L689.6 758.3 M712.3 783.9 L711.4 782 L713.4 783.2 M709.8 780.6 L711.4 781.4 L712.6 779.3 M655 715.8 L655 715.6 M667.6 734.7 L666.2 736.3 M663.4 732.7 L664.6 734 M648.3 708.9 L647.2 707.8 L645.5 706.4 M666.4 734.7 L665.9 736 L664.3 734.1 L664.2 734.9 M662 729.8 L661.4 729.7 L663 731 M704 770.6 L703.2 771.9 M666.6 734.2 L667.5 733.9 M668.4 735.3 L668.8 737 L669.1 738.5 M712.5 783.1 L713.5 782.8 L714.6 783.6 M667.7 734.9 L665.8 737 L663.7 738.6 L663.8 739.9 M669.6 736.4 L669 736.8 L667.3 736.9 M656.3 717 L657.5 719 L658.1 720.5 M701.9 762.4 L701.1 763.4 L702 764.9 L700.3 764.3 M653.7 711.9 L651.9 711 L651.2 709 M677.8 747.8 L678.7 748.1 L680.2 749.6 M707.4 776.6 L705.5 777.7 L707.4 779.8 L706.4 781.7 M706.1 773.4 L705.5 774.3 M704.3 769.3 L706.2 769.4 L706.6 768.5 M703.2 768.8 L702 768.1 L702.4 766.7 M642.7 701.7 L641.5 700.9 M669.7 736.2 L667.9 734.9 L670 733.6 M688.9 756.7 L690.1 757 L689.3 757 L689.6 756.2 M661.3 730.9 L661.6 732.8 L662.5 732 L662.9 733.1 M670.4 737.4 L668.4 738.7 L668.3 739.7 L667.8 741.3 M676.5 744.7 L675.7 746.7 M669.9 737.5 L670 737.5 L670.4 739.4 M644 706.2 L642.1 705.8 L641.3 707.5 L641.5 706.7 M710.5 781.5 L708.4 781.9 L708.9 782.3 L707 780.2 M656.1 720.5 L657.8 719.4 L655.9 719.4 M707.7 777.6 L707.3 777 L706.9 777.8 L705.3 775.8 M705.8 772.4 L707.6 772.5 M705.7 771.7 L705.1 770.8 M672.6 741.3 L671.4 739.7 L672.1 738.5 M672 740.7 L673.5 742.8 L673.6 745 L673.6 743.6 M670.3 738.6 L672.4 739.5 M706.3 773.4 L706.6 773.4 L705.3 774.9 M643.6 703.9 L645.3 703.7 L644.7 701.8 M642.7 701 L643.4 701.6 L642.5 700.6 L644.4 698.9 M641.2 699.9 L643.1 701 L642.3 703 M651.7 710 L650.2 711.9 L651.5 710.1 L651.8 711.5 M642.4 701.8 L643.6 703.3 M659.8 726.5 L657.9 725 L658.1 724.2 L656.8 723 M655.8 715.3 L655 714.3 L655.2 712.7 M641.9 702.1 L643.6 701 L643.4 702 L644.8 703.3 M654.8 720.2 L652.8 720.6 L652.2 721.4 L654.2 719.7 M653.6 712.1 L653 710.1 L653.8 709.6 L652.7 710.5 M659.4 727.1 L657.9 728.7 L656.6 730.3 L656.1 731.3 M657.8 724.5 L656.8 722.8 L656.9 724 L656 724.6 M639.4 697.2 L640.7 697.4 L639 696.5 L638.4 698.2 M651.4 710.9 L651.2 712.9 L651.1 713.8 M653.8 711.6 L654.2 712.7 L653.8 710.9 L655.6 709.2 M653.2 712.5 L652.5 711.6 L652.7 712.5 M641.5 700 L643.5 698.9 L642.3 698.3 L642.5 696.4 M654.5 714.8 L655.3 713.2 L654.6 712.3 M655.3 717.5 L654.4 718.7 L653.5 716.9 L652.4 715.8 M797.2 594.9 L797 594.2 L797.4 595.8 M802.3 609.8 L801.8 610.6 L802.5 609.4 L801.5 611.5 M794.8 606.6 L793.9 605.4 L794.7 603.7 L794.4 605.5 M798.1 569.7 L797 571 L798.3 571.4 L797.1 573.4 M792.7 587.1 L790.7 584.9 M795 578.4 L793.9 577.9 L793.3 579.2 L792.9 579.4 M795 590.7 L793.8 592.2 L791.7 591.8 M803.5 567.3 L802.3 566.5 L803.1 568.1 M799.9 572.3 L799.5 572 L799 573.3 L800.1 574.1 M805.7 598 L804.7 595.9 L804.3 594.1 L804.1 594.4 M805.9 635.1 L807.1 633.6 L807.5 632.9 L808.2 634.8 M796.6 613.7 L798.4 612.3 L798.2 611.2 L798.9 610.3 M805.7 644 L805.2 645.3 M805.4 579.2 L807 577.3 L808.1 575.6 L806.3 573.8 M801.6 581.6 L802.3 582.6 M801.6 643.9 L803.6 645.9 L801.6 647.1 L801.2 647.5 M795 616 L793.5 614 L792.1 615.6 M804.7 578.7 L803.7 577.6 L805.1 576 M800.2 619.9 L801.7 618.5 M801.8 582.7 L801.5 580.6 L799.7 581.5 L798.3 582.6 M802.7 626.6 L803.9 628.6 M798.6 620.4 L798 619.5 M796.4 589.4 L798.5 590.5 L800.3 590.4 M797.8 625.9 L798.1 624.3 M800.9 602 L800 602.1 L800.4 600.7 M802.8 645.5 L803 644.4 L801.4 645.2 M797.4 623.6 L795.5 625 M805.8 594.5 L804.9 594 M800.5 572.6 L802.1 572.7 M791.2 571.6 L790.4 571.2 L790 570 M803.7 636.2 L804.8 637.2 M804.4 574.6 L804.6 575.2 M798.9 627.8 L797.8 628.3 L796.6 630.4 L795.4 631.9 M801.6 580.8 L799.5 581 L798.7 583 L800.5 583.8 M794.4 562.4 L794.7 563.2 L794.5 565 M801.1 583.8 L801.5 582.6 L803.3 581.1 M802.6 581.6 L802.9 580.6 M801.4 601.1 L801.4 602.7 L801.2 604.9 M804.9 625.6 L806.5 626.3 M797.5 601.3 L798 601.2 L798.9 602.7 M799.3 591.4 L798.3 592.7 L797.2 591.3 L795.6 592.4 M793.9 577.2 L794.8 577.9 L794.5 577.5 M799 617.9 L801 620 M797.7 648.3 L799.7 649.4 L798.3 651.1 M799 591.2 L799.2 593.1 L799.1 593.7 L801.1 595.5 M801.5 577.4 L802.2 577.2 L801.2 577.9 M798.3 634.8 L799.3 635.5 M802.4 594.3 L800.7 594.1 M798.1 571.3 L797.3 572 M800.1 649.8 L798.1 651.3 L798.5 651.7 M804.3 627.6 L805.6 629.6 L804.6 628.1 M805.9 594.5 L808 596 L807.2 595.6 L806.6 595.4 M800.5 618.3 L801.2 617.5 L800.1 616.3 L798.4 615.3 M796.3 577 L795.6 578.9 L796.7 576.7 M800.7 616.4 L799 617.2 L797.9 616.4 M796.9 601.7 L798 603.4 M805.5 607.4 L806.1 609 L808.1 609.3 L807.3 609 M799.1 644.8 L799.7 645.9 L798.2 646.2 M797 626.7 L798.3 627.3 M800.8 584.1 L799.2 583.5 L797.5 585 L798.2 584.1 M797.8 651.8 L799.5 651 L797.8 651.7 L798.7 652 M801 584 L801.7 582.8 M802.8 634.7 L802.4 635.2 M803.9 577.4 L804.1 578.2 M803.2 594.6 L802.7 593.7 M804.9 613.7 L805.5 612 L803.9 611.9 L804.9 613.7 M805.2 577.1 L807 576.5 M802.6 603.2 L803.9 601.7 L802 601.7 L801.1 601.8 M798.3 594.3 L799.1 594.7 M803.6 611.9 L803.2 610.2 L803.2 611.6 L803.5 613.8 M806 560.4 L806.9 560.1 L807.3 560.4 L808.7 559 M801.6 641.2 L803.6 640.8 M799.3 595.8 L800.7 597.1 M793 589.2 L790.9 590.5 L790.2 592.3 M795.2 627 L797 629 M802.6 573.6 L801.9 573.6 L802.1 574.6 L803.3 576.4 M798.5 647.8 L800.2 645.6 L799.6 646.7 L801 648.1 M800 639 L799.8 641.2 L801.9 640.9 M802.6 656.8 L803.2 656 L804.3 654.4 M796.1 620.1 L795 618.7 M803.1 588.5 L802.7 587.2 M802.9 595.6 L802.6 594.3 L804 595.6 L804.2 597.8 M802.8 623.6 L801.6 622.2 M802.2 565.6 L800.9 567.3 L802.5 567 M797.3 633.1 L796.5 631.6 M803.8 646.4 L805.2 648.1 L807.1 647.8 M800.5 604.8 L802.6 603.8 L800.8 605.9 L801.2 606.9 M799.5 566.6 L799.4 567.4 L797.4 569.5 M802.5 646.2 L802.3 647.1 L804.2 648.5 L804.5 648.6 M797.3 605.2 L799.2 607 L799 605.9 L797.8 606.5 M797.7 645.4 L798.1 645.2 L796.8 644.9 M802.8 653.5 L803.9 651.7 L804.2 652.7 M796 639.1 L794.4 637.2 L795.6 635.3 M803.3 582.8 L801.6 581.4 M801.6 580.5 L803.6 582.1 L803.2 582.1 M805.5 604 L803.8 605.6 M790.9 566.1 L792.3 568.1 L793.7 566.9 L792.5 566.9 M801.4 561.7 L802.2 563.8 M795.4 642.7 L794.6 641.7 L792.5 643.3 M798.7 632.3 L800.7 630.8 L800.8 630.4 L799.8 628.6 M789.3 562.8 L788.2 563.8 M796 561.1 L794.1 561.6 L792.4 559.8 M795.1 604 L797.3 602 L797.7 600" fill="none" stroke="#000" stroke-width="1.6"/>
<path d="M803.8 650.8 L805.5 648.8 L803.6 648.1 M803.2 572.2 L803.7 570.1 L802.3 570.2 M796.4 644.8 L794.7 645.7 L796.4 646.3 L796 644.4 M797.6 633.1 L799.5 632.2 M794.3 561.4 L796.2 561.8 L797.1 560.8 L798.5 562.1 M799 634.2 L798.9 632.2 L796.7 632.9 L796.4 633 M797.4 614.4 L798.3 615.3 M804.4 649.5 L804.5 650.4 L802.5 649.5 M794.3 561.4 L794.9 559.3 M799.5 583.5 L799.6 581.8 L797.8 579.9 M794.6 578.6 L792.6 578 L791.8 579.8 L793.6 579.8 M798.8 576.1 L797.9 575.4 M801.9 624.3 L799.9 625.4 M800.1 633.7 L798.6 632.4 L797.7 631.6 M798.6 574.3 L798.5 573 M803.9 574.9 L802.6 573.5 M802.4 608.8 L801.3 610.4 L803 612.2 M795.6 590.1 L794.4 589.7 L794.2 588.1 M798.6 571.7 L798 571.4 M793.9 617.1 L795.2 616.1 M800.1 626.2 L798.3 624.2 M805.6 582.4 L805.1 581.1 L804.1 580 M793.5 604.3 L795.1 603 L794.7 604.5 L793.2 605 M799 642.5 L799.1 643.8 L798.6 645.9 L800.6 646 M802.1 651.8 L802.8 651.1 L804.3 649.5 M802.8 628.8 L801.4 628.3 L800.5 629.2 L801.6 630 M803.4 642.2 L802.1 644.2 L803.2 646.1 M795.4 608 L794.1 610.1 L792.3 611.1 M793.2 566.7 L793.9 568.7 M793.4 560.9 L794.6 561.8 L795.4 563.8 M804.2 568.5 L802.3 566.7 L800.8 567.2 M792.4 569.5 L792.6 569.5 L791.6 570.4 L793.4 569.3 M796.7 641.1 L797.1 640.3 L795.9 639.5 M805.3 574.1 L805.2 575.1 L805.2 575.6 M797.9 572.6 L799.9 572.2 L801.2 571.8 M804.8 608.7 L804.1 609.7 L802.1 609.1 L800.9 610.3 M805.1 584.2 L805.2 586.2 M800.7 655.9 L799.3 653.9 L799 653.3 M792.6 588.2 L793.2 587.6 L791.3 587.8 M801.5 568.4 L800.7 569.2 L798.7 569.4 M801 597.5 L800 596.8 L798.3 596 M796.6 617.9 L798.1 616.4 L796.6 616.1 M795.5 594.2 L795.2 596.3 M797.8 650.7 L795.7 652.6 L794 654.6 L794.6 656.5 M797.7 585.7 L796.4 585.6 M799.4 612.8 L799.5 611.3 L800.5 611.4 L800.6 610.6 M806 577.2 L807 575.6 L808.9 575.6 M800.6 585.1 L802 586.5 M803.9 600.4 L804.8 598.7 M799.9 564.3 L799.7 565 L800.5 567.2 L800.6 566.3 M793.4 581.8 L794.2 580.6 L793.4 582.3 L791.7 584.2 M796.8 596.5 L795.1 596.8 L792.9 598.3 L792.1 599 M797 608.2 L798.1 610.3 L796.8 608.1 L796.5 607 M804.7 643.4 L806.8 642.5 L805.8 643.8 L807.6 642.1 M799.7 622.2 L800.2 623.2 L800.8 623.8 M797.7 570 L798.5 570.4 M796.3 609.9 L796.2 609.8 L795.8 611.4 M796.9 636.4 L797.8 634.6 L798.9 633.3 M798.6 563.1 L798.5 562.6 L799.7 562.1 M805.2 567.4 L806.5 569.3 L806.5 571.4 M802.5 572.2 L800.8 571.2 L802.8 572.3 M803.4 608.3 L802.4 606.8 M795.9 581.2 L794.7 581.3 L794.1 582.4 M799.8 580.5 L800.4 580.8 M803.7 616.7 L803.4 616.5 M792.7 605.2 L794.5 604.4 L796.2 605.3 M795.2 615.8 L795.3 616.4 M803.7 598 L802.3 599 L803.2 600.5 L804.7 602 M794.5 571.2 L794.1 570.1 L793.6 567.9 L794 568.6 M805.9 584 L808 583.1 L807.3 582.9 L808 582.2 M794.1 641.2 L794.1 642.6 L793.2 644.2 M794 571.6 L794.2 571.4 M799.1 600.5 L798.7 601 L797.1 601.4 M799.5 570.8 L798.5 572.2 L798.8 573.3 M797.4 640 L797.9 641.5 M802.1 618.1 L802.3 616.5 M797.3 606 L797.4 604.6 M805.6 658.5 L803.7 656.6 L802.5 656.6 L803.4 656 M798.7 607.7 L800.8 607 L799.8 608.6 L799.8 608.7 M800.6 619.1 L801.4 617.3 L799.3 618.7 M798.3 638 L797.2 638.3 L798.3 636.4 L798.6 637.5 M803.1 600.1 L804.7 597.9 L806 598.5 L805.7 597.3 M801.9 627.1 L802.4 626.7 M790.3 565.5 L790.7 566.5 L791.7 565.2 M803.9 573.5 L804 575 M796.1 623.7 L795.2 625.1 M800 608.3 L798.4 608.4 M795.7 572.1 L796.8 570.3 L797.5 571.8 M798 562.7 L798.6 562.2 L799.2 562.6 L798 561.6" fill="none" stroke="#004466" stroke-width="1.6"/>
<path d="M796.3 643.9 L789.3 646 L784 646 L785.7 654.5 L787.5 661.5 L784 668.5 L780.5 672.9 L784 675.6 L785.7 682.6 L791 686.1 L792.8 691.4 L791.9 698.4 L794.5 703.7 L792.8 709 L789.3 712.5 L790.1 717.8 L785.7 721.3 L784 726.5 L784.9 732 M792.8 700 L795.4 705.3 L789.3 708.8 L791 715.8 L785.7 719.3 L784 726.4 L784 730.8" fill="none" stroke="#000" stroke-width="3.2" stroke-linejoin="round"/><path d="M796.3 643.9 L789.3 646 L784 646 L785.7 654.5 L787.5 661.5 L784 668.5 L780.5 672.9 L784 675.6 L785.7 682.6 L791 686.1 L792.8 691.4 L791.9 698.4 L794.5 703.7 L792.8 709 L789.3 712.5 L790.1 717.8 L785.7 721.3 L784 726.5 L784.9 732 M792.8 700 L795.4 705.3 L789.3 708.8 L791 715.8 L785.7 719.3 L784 726.4 L784 730.8" fill="none" stroke="#0a4a72" stroke-width="1.8" stroke-linejoin="round"/>
<path d="M257.2 661.1 L264.2 662.5 L273 663.2 L285.3 664.6 M311.7 662.8 L325.7 661.4 L339.8 660.7 L350 659.3 M227.3 662.8 L234.4 662 M241.4 664.6 L250.2 662 M297 661.9 L307.6 661.5 M312.8 663.3 L325.1 661.9 L335.7 660.8 L348 659.1 L360.3 656.2 L369.1 653.6 L377.9 651 L388.4 649 L399 647.8 L409.5 647.1 M249.3 677.8 L253.7 683.9 L255.1 692.7 M252.8 699.8 L248.4 708.5 M241.4 715.6 L238.8 717.3 M236.1 721.7 L233.5 725.2 M228.2 728.8 L223.8 731.4 M241.4 701.5 L245.8 694.5 L250.2 692.7 L251.1 698 L248.4 700.6" fill="none" stroke="#000" stroke-width="1.5"/>
<path d="M181.7 6.1 L190 14.8 L194.6 25.9 L199.3 36.9 L200.5 55.4 L200.2 73.9 L200.5 88.6 L198.3 96 L194.6 103.4 L189.1 110.8 L188.2 120 L185.4 129.3 L181.7 138.5 L176.2 145.9 L175.2 149.2 M240.8 6.1 L233.4 13.9 L228.8 22.2 L227.9 36.9 L226 51.7 L224.2 59.1 L216.8 66.5 L207.6 69.3 L201.1 71.1 M240.8 6.1 L248.2 18.5 L257.4 29.5 L263 40.6 L263.9 51.7 L267.6 57.2 L275.9 60 L287 60.9 L294.4 57.2 L301.7 53.6 L312.8 55.4 L322.1 60.9 L330 66.5 M181.9 140 L175.4 147.4 L175.4 156.6 L169 165.9 L159.7 182.5 L150.5 195.4 L145.3 203.7 L146.8 211.1 L150.5 219.4 L152.3 224 L160.6 225.3 M160.6 225.3 L152.3 224 L135.7 224.6 L120.9 230.5 L109.9 235.1 L96.9 240.6 L78.5 247.1 L63.7 251.7 L60 251.7 M175.4 224 L189.3 217.6 L204 208.3 L218.8 199.1 L220.7 192.6 L226.2 188 L237.3 184.3 L248.4 179.7 L260 177.9 M164.3 231.4 L166.2 243.4 L169 261.9 L171.7 276.7 L173.6 290 M160.6 222.2 L163.4 220.9 L172.7 220.9 L175.4 224 L176 228.6 L173.6 231.4 L163.4 231.8 L160.6 230.5 L160.6 222.2 M6 257.6 L30 255 L54 252 L60 251.7 M171.8 280 L173.1 289.2 L171.3 298.5 L171.3 311.4 L175 326.2 L177.7 342.8 L181.4 357.6 L183.3 368.6 L182.4 385.3 L178.7 398.2 L174 409.3 L168.5 418.5 L163 430 M10 461 L32.2 463.2 L54.3 466.6 L76.5 471 L89.8 475.4 L98.7 475 L116.4 473.2 L134.2 473.2 L143 477.6 L151.9 480.3 L165.2 479.9 L182.9 478.1 L198.5 475.9 L210 476.5 M169.6 420 L163 428.9 L161.9 442.2 L158.6 457.7 L154.1 471 L151.9 479.9 L147.5 488.7 L140.8 499.8 L136.4 508.7 L134.2 519.8 L130.8 539.7 L129.7 564.1 L129.3 584.1 L127.5 600 M147.5 478.1 L148.6 473.2 L153 467.7 L157.5 463.2 M522.5 237.8 L551.3 208.9 L572.9 187.3 L587.3 165.7 L601.7 158.5 M594.5 158.5 L590.9 118.9 L605.3 93.7 L601.7 64.8 L587.3 28.8 L589.1 7.2 M659.4 138.7 L684.6 169.3 L688.2 183.7 L717 198.1 L724.2 212.5 L745.8 245 L760.2 281 L763.8 290 M688.2 183.7 L742.2 180.1 L778.2 176.5 L809.9 172.9 M724.2 252.2 L760.2 237.8 L809.9 223.3 M6.5 460.9 L54 466.3 L86.5 475.3 M259.4 473.5 L284.6 466.3 L306.2 439.3 L326 420.2 M259.4 473.5 L248.6 493.3 L234.1 522.2 L219.7 543.8 L216.1 560 M216.1 475.3 L259.4 473.5 M659.4 366.2 L688.2 369.1 L724.2 372.7 L754.8 374.5 L774.6 367.3 L809.9 345.6 M594.5 372.7 L601.7 385.3 L616.1 410.5 L630.5 424.9 L634.1 435.7 L630.5 471.7 L630.5 500.5 L637.8 529.4 L648.6 560 M634.1 428.5 L652.2 446.5 L681 460.9 L724.2 471.7 L760.2 478.9 L809.9 489.7 M660.1 302.4 L688.2 288 L713.4 273.6 M568.4 320.8 L557.2 318.4 L554.8 308.8 L551.6 302.4 L544.4 293.6 L542.8 283.2 L539.6 272 L537.2 264 L536.4 251.2 L531.6 247.2 L525.2 244.8 L522.8 240 M570 326.4 L572.4 316.8 L576.4 305.6 L581.2 298.4 L584.4 294.4 M490 270.4 L495.6 264 L498 252.8 L504.4 241.6 L506 240 M390.9 559.8 L374.6 574.2 L342.2 594 L326 602 M490.1 616 L508.1 616.4 L544.1 626.5 L572.9 637.3 L601.7 640.9 L630.5 644.5 L659.4 648.1 L688.2 655.3 L706.2 660.7 L742.2 658.9 L778.2 655.3 L792.7 655.3 M645 540 L652.2 576 L663 612 L684.6 633.7 L702.6 655.3 L717 684.1 L731.4 712.9 L742.2 734.5 L749.4 763.3 L753 788.6 M803.5 540 L796.3 561.6 L785.4 594 L781.8 630.1 L787.2 658.9 L796.3 676.9 L805.3 694.9 M780 644.5 L794.5 644.5 L796.3 662.5 L781.8 664.3 L780 644.5 M397 230 L398.2 237 L394.7 248.7 L393.5 260.4 L395.8 276.8 L396.5 300.2 L399.4 323.6 L400.5 340 L402.2 351.7 L401.7 365.7 L404 379.8 L402.9 393.8 L405.7 402 M414.6 366.9 L420.4 357.5 L429.8 347 L443.8 335.3 L457.9 323.6 L467.2 309.6 L478.9 293.2 L488.3 276.8 L497.6 258.1 L502.3 244 L511.7 237 L523.4 235.9 L540 230 M401.7 366.9 L414.6 366.9 L429.8 363.9 L448.5 363.4 L467.2 364.6 L490.6 361.1 L514 357.5 L540 351.7 M406.4 379.8 L392.3 385.6 L383 391.5 L368.9 398.5 L350.2 400.8 L338.5 407.9 L329.1 420 M388.8 385.6 L397 384.5 L406.4 379.8 L413.4 370.4 L415.7 365.7 M483.6 230 L490.6 234.7 L502.3 235.9 L511.7 237 M523.4 235.9 L528.1 246.4 L537.4 253.4 L540 260.4 M127.9 540 L126.8 568.8 L128.6 590.4 M129.2 590 L126.5 598.8 L126.2 616.4 L127.4 630.4 L130.1 641 L134.4 649.8 L136.2 659.4 L132.7 667.3 L131.8 674.4 M6.2 661.2 L15.8 660.3 L26.4 655.9 L43.9 649.8 L66.8 643.6 L75.6 643.6 L84.4 645.9 L93.1 642.7 L101.9 641.3 L123 641 L149.4 641.3 L159.9 645.4 L168.7 649.8 L177.5 654.1 L186.3 656.4 L193.3 656.4 L200 655 M84.4 645.9 L91.4 653.3 L93.1 660.3 L98.4 665.6 L107.2 670 L119.5 672.6 L131.8 674.4 L142.4 680.5 L151.1 682.3 L159.9 685.8 M219.7 540 L214.3 561.6 L207.1 586.8 L201.7 608.4 L200.3 618.2 M200 618.1 L193.3 628.7 L189.8 641 L185.4 649.8 L185.4 656.8 L182.8 663.8 L175.7 672.6 L167 681.4 L159.9 685.8 M6.2 616.4 L11.4 622.5 L13.2 632.2 L11.4 642.7 L13.2 651.5 L15.8 660.3 M185.5 655.3 L216.1 648.1 L252.2 644.5 L281 640.9 L299 630.8 M394.8 99.5 L405.3 100.6 L417 103 L427.5 106.5 L434.6 112.3 L436.9 124 L435.7 135.7 L432.2 142.8 L429.9 154.5 L427.5 159.1 L417 162.6 L405.3 163.8 L393.6 165 L383.1 162.6 L374.9 155.6 L369 146.3 L366 135.7 L367.9 127.5 L373.7 118.2 L380.7 110 L387.8 103 L394.8 99.5 M300 53.8 L309.4 55 L318.7 59.7 L330.4 67.9 L342.1 77.2 L353.8 85.4 L363.2 91.3 L370.2 98.3 L377.2 106.5 L385.4 112.3 L393.6 117 L400.6 121.7 L404.1 131.1 M473.2 6.6 L472.7 21.1 L468.5 37.4 L461.5 49.1 L449.8 56.2 L435.7 59.7 L431.1 67.9 L427.5 79.6 L421.7 88.9 L414.7 100.6 L410 110 L408.8 119.4 L405.3 131.1 M230.5 187.3 L252.2 176.5 L288.2 169.3 L300.8 167.9 M300 165 L314 161.5 L330.4 160.3 L346.8 152.1 L360.8 147.4 L377.2 143.9 L391.3 140.4 L404.1 133.4 M404.1 133.4 L421.7 134.6 L438.1 132.2 L449.8 132.2 L463.8 133.4 L482.5 140.4 L498.9 136.9 L517.6 136.9 L524.7 142.8 L538.7 152.1 L550.4 159.1 L560 158 M572.9 154.9 L594.5 158.5 L616.1 151.3 L645 144.1 L659.4 138.7 L681 126.1 L724.2 104.5 L760.2 93.7 L789 88.3 L809.9 86.5 M404.1 133.4 L410 140.4 L419.4 149.8 L428.7 159.1 L435.7 168.5 L442.8 180.2 L446.3 190 M432.4 162.8 L454 187.3 L472 216.1 L490.1 234.1 L504.5 239.6 L522.5 252.2 L536.9 273.8 L542.3 290 M404.1 133.4 L405.3 142.8 L401.8 154.5 L400.6 166.2 L397.1 177.9 L396.4 190 M396.6 187.3 L397.3 201.7 L396.3 248.6 L398.1 290 M436.9 131.1 L433.4 140.4 L429.9 149.8 L429.9 159.1 M405.6 400 L408.6 403.9 L409.6 411.8 L419.4 429.6 L423.3 439.4 L427.3 449.3 L432.2 461.1 L439.1 471.9 M439.1 472.5 L448 473.3 L460.8 472.5 L466.7 468 L478.5 465 L490.3 462.1 L498.2 457.1 L510 449.3 L517.9 437.4 L525.8 429.6 L533.7 419.7 L541.6 409.9 L547.5 400 M536.9 414.1 L554.9 385.3 L574.7 361.9 M439.1 472.5 L437.1 478.8 L432.2 486.7 L427.3 498.5 L422.4 509.4 L415.5 521.2 L407.6 534 L399.7 544.8 L391.8 553.7 L385.9 560 M290 639.5 L297 635.1 L304.1 629 L305.8 622.8 L312.8 622.5 L319.9 624.6 L333.9 626.4 L348 630.8 L360.3 634.3 L367.3 637.8 L377.9 637.8 L384.9 635.1 L391.9 629 L402.5 622.8 L413 619.7 L425.3 618.5 L434.1 618.5 L444.7 616.2 L453.4 621.1 L464 621.1 L472.8 616.7 L479.8 614.9 L490 615.8 M321.6 600 L314.6 603.5 L308.5 607.9 L306.7 614.9 L305.8 622.8 M575.6 336 L579.6 334.4 L586 334.4 L593.2 336 L594.9 344 L594.9 352.1 L590.8 355.3 L587.6 358.5 L582 359.3 L577.2 357.7 L574.8 352.1 L574.8 344 L575.6 336 M577.2 336 L570 326.4 L568.4 320.8 M586 334.4 L586.8 329.6 M579.6 336 L582 344 L582.8 352.1 L582 359.3 L579.6 363.3 L573.2 367.3 L566.8 370 M582.8 352.1 L587.6 358.5 L590.8 366.5 L592.4 370 M574.8 348.9 L565.2 347.3 L554 350.5 L533.2 352.1 L514 355.3 L502.8 358.5 L490 360.9 M594.9 352.1 L605.3 353.7 L611.7 358.5 L622.9 361.7 L634.1 362.5 L660 366.5 M593.2 336 L602.1 329.6 L610.1 322.4 L622.9 318.4 L634.1 314.4 L645.3 308.8 L651.7 303.2 L660 299.2" fill="none" stroke="#7d6a12" stroke-width="1"/>
<path d="M144 238.2 L410 238.5 L679.2 238.6 M299.9 238.2 L302.2 242.9 L307.6 246.9 L303.4 288.5 L296.4 347 L291.8 388.9 L279.2 515 L281 560 L284.6 648 M492.5 238.6 L499 270 L514 370 L519.9 400 L522.9 415.8 L525.8 429.6 L526.8 435.5 L529.8 443.3 L531.7 451.2 L536.6 458.1 L539.6 467 L537.6 475.9 L546.5 481.8 L543.5 485.7 L537.6 487.7 L533.7 493.6 L533.3 502.5 L532 520 L532.7 537.9 L534.7 545.8 L531.7 553.7 L530.5 562 L531.5 579.6 L536.9 594 L542.3 612 M535 594 L344 594.8 L340.4 599.4 L342.2 608.4 L354.8 621 L360.2 631.9 L356.6 637.3 M547.7 620 L636 623 L700 628 L744.4 632.2 L743.6 637.8 L746.2 645.7 L748.8 650.1 L757.6 651 L759 643.9 L760.3 633.4 L757.6 626.4 L757.3 617.6 L759.4 613.2 L764.7 609.7 L769.1 609.7 L771.7 612.3 L778.7 614.9 L785.7 616.7 L792.8 617.6 M203.9 6.1 L201.7 11.1 L205.7 16.6 L208.5 24 L207.6 29.5 L202.9 31.4 L202 36 L205.7 39.7 L207.6 46.2 L212.2 52.6 L213.1 57.2 L217.7 60.9 L221.4 60 L222.3 55.4 L226 52.6 M226 52.6 L231.6 46.2 L238 41.6 L246.3 39.3 L250 41.6 L257.4 45.2 L263 48 L268.5 48.9 L273.1 53.6 L277.7 54.5 L282.4 51.7 L283.3 45.2 L280.5 39.7 L276.8 36 L276.8 30.5 L280.5 24.9 L287 22.2 L294.4 19.4 L303.6 18.5 L309.1 15.7 L309.1 11.1 L304.5 6.1 M226 54.5 L227 59.1 L231.6 61.9 L232.5 66.5 L230.6 72 L227 74.8 L226 79.4 L227 84 L225.1 86.8 L228.8 89.6 L226 92.3 L223.3 96 L221.4 98.8 L217.7 96 L214.9 92.3 L212.2 94.2 L210.3 103.4 L207.6 107.1 L203.9 105.3 L204.8 100.6 L202.9 97.9 L199.3 97.5 L196.5 100.6 L199.3 103.4 L205.7 104.3 L205.7 108 L200.2 110.8 L195.6 118.2 L192.8 120 L194.6 123.7 L200.2 125.6 L198.3 127.4 L191.9 128.3 L190.9 132 L193.7 134.8 L196.5 137.6 L191.9 140.4 L189.1 145.9 L187.2 149.2 M209.4 104.3 L264.8 104.7 L311 105.3 L311.9 99.7 L310 92.3 L309.1 88.6 L314.7 89.6 L322 90.5 L410 89.5 L508 94.4 L560 95.6 L560 95.6 L635.8 96.7 L665.4 96 L713.8 96.7 L779.7 95.1 L806 97.8 M6 105 L130 105.3 L154 105.6 L154.9 109 L159.5 114.5 L160.5 121.9 L154 127.4 L147.5 134.8 L141.1 142.2 L137.4 149.2 L187.2 149.2 M191.1 140 L188.3 144.6 L186.5 149.2 L187.4 152.9 L192 156.6 L190.2 158.5 L185.6 158.1 L184.7 161.2 L188.3 164 L185.6 166.8 L181 167.7 L176.3 171.4 L170.8 170.5 L169.9 175.1 L171.7 178.8 L175.4 178.8 L174.5 182.5 L170.8 184.3 L171.7 188.9 L172.7 191.7 L169.9 190.8 L168 188.4 L163.4 189.9 L161.6 193.6 L160.6 196.3 L156 197.2 L153.3 201.9 L155.1 204.6 L158.8 203.7 L160.6 200 L162.5 202.8 L159.7 206.5 L156 209.3 L154.2 212.9 L156 215.7 L159.7 217.6 L159.7 221.3 L157 223.1 L160.6 224.9 L159.7 226.8 L154.2 226.4 L152.3 229.6 L151.4 234.2 L146.8 234.6 L143.1 235.1 L143.1 238.8 L146.8 241.6 L146.8 247.1 L143.1 249.9 L137.6 252.7 L134.8 251.7 L132.9 248 L130.2 248 L129.8 250.8 L132 254.5 L129.3 256.3 L126.5 255.4 L125.6 260 L129.3 261.9 L131.1 260 L130.2 258.2 L127.4 258.2 L123.7 262.8 L122.8 267.4 L126.5 270.2 L131.1 267.4 L130.2 265.6 L125.6 265.6 L123.7 269.3 L123.7 276.7 L125.6 280.4 L122.8 282.2 L123.7 290 M124.2 280 L122.3 284.6 L123.3 290.2 L118.6 292.9 L114.9 293.9 L115.9 298.5 L112.2 297.5 L109.4 294.8 L111.3 299.4 L107.6 302.2 L103.9 303.1 L102 306.8 L97.4 305.9 L96.5 308.6 L101.1 310.5 L104.8 311.4 L104.8 314.2 L100.2 314.2 L95.6 313.2 L94.6 316 L98.3 318.8 L101.1 319.7 L100.2 323.4 L96.5 325.2 L92.8 327.1 L93.7 329.9 L89.1 328.9 L85.4 329.9 L87.2 332.6 L90.9 332.6 L89.1 335.4 L86.3 339.1 L87.2 342.8 L91.9 344.6 L92.4 347.4 L88.2 348.3 L83.6 346.9 L80.8 349.3 L81.7 352.9 L85.4 354.8 L89.1 354.8 L87.2 356.6 L82.6 356.6 L78.9 353.9 L75.2 354.8 L75.2 357.6 L78.9 359.4 L80.8 363.1 L77.1 364.9 L74.3 366.8 L75.2 370.5 L78.9 372.3 L82.6 376 L86.3 376 L87.2 378.8 L84.5 381.6 L79.9 382.5 L76.2 380.6 L75.2 377 L78 374.2 L81.7 377 L80.8 383.4 L81.3 389 L84.5 391.7 L87.2 390.8 L88.2 393.6 L85.4 395.4 L84.5 398.2 L85.4 402.8 L80.8 403.7 L77.1 405.6 L77.1 408.3 L80.8 410.2 L81.7 413.9 L78.9 415.7 L76.2 420.4 L77.1 424 L81.7 425.9 L85.4 424 L85.4 419.4 L81.7 417.6 L79.9 420.4 L83.6 427.7 L81.7 430 M6 415.7 L78.4 415.7 M85.4 420 L86.5 424.4 L81 428.9 L79.8 435.5 L83.2 440 L87.6 442.2 L86.5 446.6 L82.1 447.7 L81.4 452.2 L86.5 453.3 L90.9 451 L90.9 455.5 L86.5 457.7 L83.2 459.9 L84.3 464.3 L88.7 463.2 L92 461 L90.9 465.5 L94.3 468.8 L95.4 474.3 L99.8 472.1 L98.7 476.5 L95.4 478.8 L93.1 483.2 L90.9 486.5 L86.5 485.4 L81 486.5 L78.7 491 L81 494.3 L86.5 494.3 L89.8 491 L90.9 495.4 L87.6 498.7 L86.5 503.1 L84.3 506.5 L78.7 507.6 L76.5 512 L73.2 515.3 L71 518.7 L66.5 519.8 L64.3 524.2 L66.5 527.5 L71 528.2 L72.1 525.3 L68.8 524.2 L64.3 528.6 L62.1 535.3 L61 539.7 L56.6 538.6 L54.3 540.8 L56.6 543.1 L61 542 L59.9 547.5 L55.5 550.8 L53.2 555.3 L49.9 557.5 L48.8 560.8 L53.2 561.9 L56.1 558.6 L53.2 556.4 L51 564.1 L52.1 570.8 L45.5 571.2 L44.4 575.2 L47.7 579.6 L45.5 583 L48.8 586.3 L51 590.7 L47.7 592.9 L44.4 594.5 M44.4 594.4 L186.3 594.4 L184.5 600.5 L182.8 607.6 L178.4 612.8 L177.5 621.6 L180.1 630.4 L184.5 637.4 L189.8 642.7 L192.4 651.5 L193.3 660.3 L196.8 666.5 M635.8 96 L642.4 90.1 L654.5 86.8 L676.4 82.4 L679.7 75.8 L696.2 70.3 L697.3 63.7 L700.6 59.3 L707.2 56 L708.3 49.4 L718.2 43.9 L733.6 37.3 L742.3 33 L751.1 24.2 L762.1 15.4 L765.4 14.3 L763.2 11 L753.3 9.9 L748.9 6.6 M765.4 14.3 L762.1 20.9 L767.6 25.3 L768.7 31.9 L776.4 35.1 L780.8 39.5 L786.3 41.7 L797.3 39.5 L803.8 35.1 L806 31.9 M786.3 95.1 L781.9 101.1 L780.8 109.8 L780.8 110 L781.9 114.4 L780.8 118.8 L774.2 117.7 L767.6 123.2 L764.3 129.8 L758.8 137.5 L753.3 138.6 L746.7 135.3 L735.7 138.6 L729.2 145.1 L723.7 150.6 L718.2 151.7 L717.1 145.1 L711.6 144.1 L703.9 148.4 L700.6 152.8 L694 155 L692.9 162.7 L687.4 167.6 L678.6 168.2 L672 172.6 L665.4 177 L656.7 182.5 L650.1 188 L635.8 185.8 L628.1 188 L619.3 192.4 L612.7 199 L611.6 204.5 L607.2 213.3 L596.2 215 L590.8 217.6 L589.7 229.9 L587.6 238.3 M679.2 238.6 L688 234.6 L703.2 230.6 L704 232.2 L709.4 228.5 L713.8 225.3 L727 222 L735.7 219.8 L757.7 220.9 L779.7 222 L806 223.1 M679.2 238.6 L678.4 242.6 L669.6 249 L664 254.6 L661.6 258.6 L660.5 263.4 L664 267.4 L671.2 272.2 L676 276.2 L681.6 281.8 L686.4 284.5 L694.4 284.2 L696.8 288.2 L698.4 292.2 L701.6 297 L704.8 301.8 L706.4 311.4 L710.4 315.4 L713.6 320.2 L716.8 325 L719.2 330.7 L726.4 335.5 L732.8 339.5 L732.8 340 L737.6 344 L742.4 349.6 L744.9 356 L747.3 360.8 L753.7 364 L758.5 365.6 L761.7 371.2 L767.3 377.6 L765.7 383.2 L768.1 387.2 L772.1 389.6 L772.9 394.4 L776.9 398.4 L780.9 403.2 L787.3 407.2 L793.7 410.4 L797.7 413.6 L798.5 420 L801.7 426.4 L804.1 432 L804.9 439.2 L804.9 452.1" fill="none" stroke="#000" stroke-width="1" stroke-linejoin="round"/>

<g shape-rendering="auto">
<path d="M618.9 154.6L663.7 198.5" stroke="#e4e4e4" stroke-width="1" fill="none"/>
<path d="M678.6 193.5L697.3 211L678.6 229.7L658.9 212.2Z" stroke="#00e000" stroke-width="1.2" fill="none" stroke-dasharray="5 4"/>
<text x="608.5" y="151" font-size="11" fill="#ffffff" letter-spacing="1.3">F-4129</text>
<path d="M647.5 147.5h6M650.5 144.5v6" stroke="#f01010" stroke-width="1.3"/>
<text x="654.5" y="151" font-size="11" fill="#ffffff">1</text>
</g>

<g fill="none" stroke="#dcdcdc" stroke-width="0.95" shape-rendering="auto">
<circle cx="407" cy="407" r="159.7"/>
<circle cx="407" cy="407" r="279.8"/>
<circle cx="407" cy="407" r="400"/>
<circle cx="407" cy="407" r="519.5"/>
</g>
<g font-size="10" fill="#ffffa8" text-anchor="middle" shape-rendering="auto" style="paint-order:stroke" stroke="#5c4e4a" stroke-width="2.5">
<text x="406.9" y="371.3" letter-spacing="1.3">31</text>
<text x="406.9" y="250.8" letter-spacing="1.3">125</text>
<text x="406.9" y="130.8" letter-spacing="1.3">219</text>
<text x="406.9" y="10.8" letter-spacing="1.3">313</text>
</g>
<circle cx="407" cy="407.5" r="39.5" fill="none" stroke="#f01010" stroke-width="1.25" shape-rendering="auto"/>
<path d="M144 24.5h7M146 29.5h7M136 32.5h7M144 38.5h7M117 40.5h7M120.5 37v7M117 44.5h7M140 44.5h7M140 46.5h7M142 48.5h7M111 50.5h7M114.5 47v7M155.4 40.5a4.1 4.1 0 1 0 8.2 0a4.1 4.1 0 1 0 -8.2 0M157 40.5h5M159.5 38v5M169.4 34.5a4.1 4.1 0 1 0 8.2 0a4.1 4.1 0 1 0 -8.2 0M171 34.5h5M173.5 32v5M173.4 40.5a4.1 4.1 0 1 0 8.2 0a4.1 4.1 0 1 0 -8.2 0M175 40.5h5M177.5 38v5M186.4 41.5a4.1 4.1 0 1 0 8.2 0a4.1 4.1 0 1 0 -8.2 0M188 41.5h5M190.5 39v5M170.4 47.5a4.1 4.1 0 1 0 8.2 0a4.1 4.1 0 1 0 -8.2 0M172 47.5h5M174.5 45v5M157.4 50.5a4.1 4.1 0 1 0 8.2 0a4.1 4.1 0 1 0 -8.2 0M159 50.5h5M161.5 48v5M152 50.5h7M155.5 47v7M149.4 55.5a4.1 4.1 0 1 0 8.2 0a4.1 4.1 0 1 0 -8.2 0M151 55.5h5M153.5 53v5M162.4 54.5a4.1 4.1 0 1 0 8.2 0a4.1 4.1 0 1 0 -8.2 0M164 54.5h5M166.5 52v5M165.4 54.5a4.1 4.1 0 1 0 8.2 0a4.1 4.1 0 1 0 -8.2 0M167 54.5h5M169.5 52v5M175.4 54.5a4.1 4.1 0 1 0 8.2 0a4.1 4.1 0 1 0 -8.2 0M177 54.5h5M179.5 52v5M158 58.5h7M161.5 55v7M122.4 57.5a4.1 4.1 0 1 0 8.2 0a4.1 4.1 0 1 0 -8.2 0M124 57.5h5M126.5 55v5M126 54.5h7M129.5 51v7M138.4 59.5a4.1 4.1 0 1 0 8.2 0a4.1 4.1 0 1 0 -8.2 0M140 59.5h5M142.5 57v5M131 60.5h7M104.4 62.5a4.1 4.1 0 1 0 8.2 0a4.1 4.1 0 1 0 -8.2 0M106 62.5h5M108.5 60v5M105 61.5h7M111 61.5h7M159.4 65.5a4.1 4.1 0 1 0 8.2 0a4.1 4.1 0 1 0 -8.2 0M161 65.5h5M169.4 66.5a4.1 4.1 0 1 0 8.2 0a4.1 4.1 0 1 0 -8.2 0M171 66.5h5M173.5 64v5M99.4 74.5a4.1 4.1 0 1 0 8.2 0a4.1 4.1 0 1 0 -8.2 0M101 74.5h5M122.4 74.5a4.1 4.1 0 1 0 8.2 0a4.1 4.1 0 1 0 -8.2 0M124 74.5h5M126.5 72v5M135 71.5h7M139.4 76.5a4.1 4.1 0 1 0 8.2 0a4.1 4.1 0 1 0 -8.2 0M141 76.5h5M81.4 83.5a4.1 4.1 0 1 0 8.2 0a4.1 4.1 0 1 0 -8.2 0M83 83.5h5M85.5 81v5M86.4 83.5a4.1 4.1 0 1 0 8.2 0a4.1 4.1 0 1 0 -8.2 0M88 83.5h5M90.5 81v5M93.4 86.5a4.1 4.1 0 1 0 8.2 0a4.1 4.1 0 1 0 -8.2 0M95 86.5h5M97.5 84v5M118 89.5h7M145.4 90.5a4.1 4.1 0 1 0 8.2 0a4.1 4.1 0 1 0 -8.2 0M147 90.5h5M149.5 88v5M101 95.5h7M80 98.5h7M83.5 95v7M121 100.5h7M113.4 106.5a4.1 4.1 0 1 0 8.2 0a4.1 4.1 0 1 0 -8.2 0M115 106.5h5M117.5 104v5M195.4 82.5a4.1 4.1 0 1 0 8.2 0a4.1 4.1 0 1 0 -8.2 0M197 82.5h5M199.5 80v5M172.4 92.5a4.1 4.1 0 1 0 8.2 0a4.1 4.1 0 1 0 -8.2 0M174 92.5h5M176.5 90v5M167 95.5h7M170 101.5h7M188 100.5h7M224 79.5h7M215 48.5h7M218.5 45v7M233.4 33.5a4.1 4.1 0 1 0 8.2 0a4.1 4.1 0 1 0 -8.2 0M235 33.5h5M194 102.5h7M199 103.5h7M174 111.5h7M164 114.5h7M153 114.5h7M156.5 111v7M148 117.5h7M151.5 114v7M194 113.5h7M203.4 117.5a4.1 4.1 0 1 0 8.2 0a4.1 4.1 0 1 0 -8.2 0M205 117.5h5M207.5 115v5M204 112.5h7M207.5 109v7M185.4 123.5a4.1 4.1 0 1 0 8.2 0a4.1 4.1 0 1 0 -8.2 0M187 123.5h5M189.5 121v5M184 129.5h7M187.5 126v7M138 132.5h7M141.5 129v7M169 42.5h7M166 31.5h7M605.4 23.5a4.1 4.1 0 1 0 8.2 0a4.1 4.1 0 1 0 -8.2 0M607 23.5h5M630.4 15.5a4.1 4.1 0 1 0 8.2 0a4.1 4.1 0 1 0 -8.2 0M632 15.5h5M649.4 23.5a4.1 4.1 0 1 0 8.2 0a4.1 4.1 0 1 0 -8.2 0M651 23.5h5M696.4 9.5a4.1 4.1 0 1 0 8.2 0a4.1 4.1 0 1 0 -8.2 0M698 9.5h5M645 33.5h7M669.4 50.5a4.1 4.1 0 1 0 8.2 0a4.1 4.1 0 1 0 -8.2 0M671 50.5h5M690.4 46.5a4.1 4.1 0 1 0 8.2 0a4.1 4.1 0 1 0 -8.2 0M692 46.5h5M656 62.5h7M576 67.5h7M649.4 87.5a4.1 4.1 0 1 0 8.2 0a4.1 4.1 0 1 0 -8.2 0M651 87.5h5M643.4 92.5a4.1 4.1 0 1 0 8.2 0a4.1 4.1 0 1 0 -8.2 0M645 92.5h5M647.5 90v5M766.4 37.5a4.1 4.1 0 1 0 8.2 0a4.1 4.1 0 1 0 -8.2 0M768 37.5h5M770.5 35v5M751.4 54.5a4.1 4.1 0 1 0 8.2 0a4.1 4.1 0 1 0 -8.2 0M753 54.5h5M755.5 52v5M780.4 54.5a4.1 4.1 0 1 0 8.2 0a4.1 4.1 0 1 0 -8.2 0M782 54.5h5M784.5 52v5M748.4 72.5a4.1 4.1 0 1 0 8.2 0a4.1 4.1 0 1 0 -8.2 0M750 72.5h5M752.5 70v5M791.4 75.5a4.1 4.1 0 1 0 8.2 0a4.1 4.1 0 1 0 -8.2 0M793 75.5h5M795.5 73v5M763 88.5h7M766.5 85v7M787.4 90.5a4.1 4.1 0 1 0 8.2 0a4.1 4.1 0 1 0 -8.2 0M789 90.5h5M791.5 88v5M759.4 97.5a4.1 4.1 0 1 0 8.2 0a4.1 4.1 0 1 0 -8.2 0M761 97.5h5M763.5 95v5M784.4 119.5a4.1 4.1 0 1 0 8.2 0a4.1 4.1 0 1 0 -8.2 0M786 119.5h5M788.5 117v5M799.4 112.5a4.1 4.1 0 1 0 8.2 0a4.1 4.1 0 1 0 -8.2 0M801 112.5h5M803.5 110v5M780.4 144.5a4.1 4.1 0 1 0 8.2 0a4.1 4.1 0 1 0 -8.2 0M782 144.5h5M784.5 142v5M675.4 150.5a4.1 4.1 0 1 0 8.2 0a4.1 4.1 0 1 0 -8.2 0M677 150.5h5M679.5 148v5M712.4 166.5a4.1 4.1 0 1 0 8.2 0a4.1 4.1 0 1 0 -8.2 0M714 166.5h5M716.5 164v5M723.4 177.5a4.1 4.1 0 1 0 8.2 0a4.1 4.1 0 1 0 -8.2 0M725 177.5h5M730 185.5h7M632.4 180.5a4.1 4.1 0 1 0 8.2 0a4.1 4.1 0 1 0 -8.2 0M634 180.5h5M629.4 186.5a4.1 4.1 0 1 0 8.2 0a4.1 4.1 0 1 0 -8.2 0M631 186.5h5M633.5 184v5M615.4 195.5a4.1 4.1 0 1 0 8.2 0a4.1 4.1 0 1 0 -8.2 0M617 195.5h5M619.5 193v5M631.4 196.5a4.1 4.1 0 1 0 8.2 0a4.1 4.1 0 1 0 -8.2 0M633 196.5h5M640.4 195.5a4.1 4.1 0 1 0 8.2 0a4.1 4.1 0 1 0 -8.2 0M642 195.5h5M644.5 193v5M648 193.5h7M649 200.5h7M651 203.5h7M671 194.5h7M659 206.5h7M636.4 210.5a4.1 4.1 0 1 0 8.2 0a4.1 4.1 0 1 0 -8.2 0M638 210.5h5M640.5 208v5M618 212.5h7M671.4 223.5a4.1 4.1 0 1 0 8.2 0a4.1 4.1 0 1 0 -8.2 0M673 223.5h5M675.5 221v5M695.4 222.5a4.1 4.1 0 1 0 8.2 0a4.1 4.1 0 1 0 -8.2 0M697 222.5h5M661 147.5h7M799 222.5h7M682 248.5h7M741.4 275.5a4.1 4.1 0 1 0 8.2 0a4.1 4.1 0 1 0 -8.2 0M743 275.5h5M745.5 273v5M761.4 279.5a4.1 4.1 0 1 0 8.2 0a4.1 4.1 0 1 0 -8.2 0M763 279.5h5M765.5 277v5M787.4 297.5a4.1 4.1 0 1 0 8.2 0a4.1 4.1 0 1 0 -8.2 0M789 297.5h5M791.5 295v5M770.4 305.5a4.1 4.1 0 1 0 8.2 0a4.1 4.1 0 1 0 -8.2 0M772 305.5h5M774.5 303v5M773.4 317.5a4.1 4.1 0 1 0 8.2 0a4.1 4.1 0 1 0 -8.2 0M775 317.5h5M777.5 315v5M785.4 319.5a4.1 4.1 0 1 0 8.2 0a4.1 4.1 0 1 0 -8.2 0M787 319.5h5M789.5 317v5M785 326.5h7M796.4 327.5a4.1 4.1 0 1 0 8.2 0a4.1 4.1 0 1 0 -8.2 0M798 327.5h5M800.5 325v5M778.4 336.5a4.1 4.1 0 1 0 8.2 0a4.1 4.1 0 1 0 -8.2 0M780 336.5h5M782.5 334v5M784.4 335.5a4.1 4.1 0 1 0 8.2 0a4.1 4.1 0 1 0 -8.2 0M786 335.5h5M788.5 333v5M776 338.5h7M697.4 312.5a4.1 4.1 0 1 0 8.2 0a4.1 4.1 0 1 0 -8.2 0M699 312.5h5M701.5 310v5M723 334.5h7M791.4 354.5a4.1 4.1 0 1 0 8.2 0a4.1 4.1 0 1 0 -8.2 0M793 354.5h5M778.4 368.5a4.1 4.1 0 1 0 8.2 0a4.1 4.1 0 1 0 -8.2 0M780 368.5h5M782.5 366v5M788.4 369.5a4.1 4.1 0 1 0 8.2 0a4.1 4.1 0 1 0 -8.2 0M790 369.5h5M792.5 367v5M722.4 362.5a4.1 4.1 0 1 0 8.2 0a4.1 4.1 0 1 0 -8.2 0M724 362.5h5M726.5 360v5M727.4 368.5a4.1 4.1 0 1 0 8.2 0a4.1 4.1 0 1 0 -8.2 0M729 368.5h5M731.5 366v5M748 367.5h7M752 372.5h7M715 373.5h7M714 377.5h7M721.4 379.5a4.1 4.1 0 1 0 8.2 0a4.1 4.1 0 1 0 -8.2 0M723 379.5h5M725.5 377v5M727.4 386.5a4.1 4.1 0 1 0 8.2 0a4.1 4.1 0 1 0 -8.2 0M729 386.5h5M734 383.5h7M728.4 393.5a4.1 4.1 0 1 0 8.2 0a4.1 4.1 0 1 0 -8.2 0M730 393.5h5M732.5 391v5M794.4 394.5a4.1 4.1 0 1 0 8.2 0a4.1 4.1 0 1 0 -8.2 0M796 394.5h5M798.5 392v5M787.4 397.5a4.1 4.1 0 1 0 8.2 0a4.1 4.1 0 1 0 -8.2 0M789 397.5h5M791.5 395v5M779.4 396.5a4.1 4.1 0 1 0 8.2 0a4.1 4.1 0 1 0 -8.2 0M781 396.5h5M783.5 394v5M782.4 401.5a4.1 4.1 0 1 0 8.2 0a4.1 4.1 0 1 0 -8.2 0M784 401.5h5M786.5 399v5M774.4 400.5a4.1 4.1 0 1 0 8.2 0a4.1 4.1 0 1 0 -8.2 0M776 400.5h5M778.5 398v5M797 402.5h7M679 408.5h7M762.4 415.5a4.1 4.1 0 1 0 8.2 0a4.1 4.1 0 1 0 -8.2 0M764 415.5h5M766.5 413v5M788.4 423.5a4.1 4.1 0 1 0 8.2 0a4.1 4.1 0 1 0 -8.2 0M790 423.5h5M792.5 421v5M797 424.5h7M730.4 435.5a4.1 4.1 0 1 0 8.2 0a4.1 4.1 0 1 0 -8.2 0M732 435.5h5M734.5 433v5M767.4 439.5a4.1 4.1 0 1 0 8.2 0a4.1 4.1 0 1 0 -8.2 0M769 439.5h5M771.5 437v5M710.4 449.5a4.1 4.1 0 1 0 8.2 0a4.1 4.1 0 1 0 -8.2 0M712 449.5h5M714.5 447v5M613.4 287.5a4.1 4.1 0 1 0 8.2 0a4.1 4.1 0 1 0 -8.2 0M615 287.5h5M617.5 285v5M557 600.5h7M574.4 608.5a4.1 4.1 0 1 0 8.2 0a4.1 4.1 0 1 0 -8.2 0M576 608.5h5M578.5 606v5M601 604.5h7M608 610.5h7M587 618.5h7M578 620.5h7M603 619.5h7M605.4 624.5a4.1 4.1 0 1 0 8.2 0a4.1 4.1 0 1 0 -8.2 0M607 624.5h5M609.5 622v5M596 628.5h7M620 627.5h7M595.4 637.5a4.1 4.1 0 1 0 8.2 0a4.1 4.1 0 1 0 -8.2 0M597 637.5h5M599.5 635v5M624.4 639.5a4.1 4.1 0 1 0 8.2 0a4.1 4.1 0 1 0 -8.2 0M626 639.5h5M630 654.5h7M624.4 666.5a4.1 4.1 0 1 0 8.2 0a4.1 4.1 0 1 0 -8.2 0M626 666.5h5M628.5 664v5M606 671.5h7M615 673.5h7M611 681.5h7M614.5 678v7M614 678.5h7M618 687.5h7M596.4 711.5a4.1 4.1 0 1 0 8.2 0a4.1 4.1 0 1 0 -8.2 0M598 711.5h5M600.5 709v5M633 706.5h7M621 722.5h7M654 655.5h7M659 664.5h7M662 672.5h7M741.4 643.5a4.1 4.1 0 1 0 8.2 0a4.1 4.1 0 1 0 -8.2 0M743 643.5h5M745.5 641v5M708 667.5h7M741 666.5h7M709 687.5h7M685 697.5h7M736.4 702.5a4.1 4.1 0 1 0 8.2 0a4.1 4.1 0 1 0 -8.2 0M738 702.5h5M740.5 700v5M730.4 705.5a4.1 4.1 0 1 0 8.2 0a4.1 4.1 0 1 0 -8.2 0M732 705.5h5M734.5 703v5M649 711.5h7M678 718.5h7M646.4 725.5a4.1 4.1 0 1 0 8.2 0a4.1 4.1 0 1 0 -8.2 0M648 725.5h5M650.5 723v5M666.4 728.5a4.1 4.1 0 1 0 8.2 0a4.1 4.1 0 1 0 -8.2 0M668 728.5h5M670.5 726v5M673 733.5h7M665 737.5h7M668.5 734v7M685.4 738.5a4.1 4.1 0 1 0 8.2 0a4.1 4.1 0 1 0 -8.2 0M687 738.5h5M632 737.5h7M637 781.5h7M724.4 766.5a4.1 4.1 0 1 0 8.2 0a4.1 4.1 0 1 0 -8.2 0M726 766.5h5M728.5 764v5M788.4 771.5a4.1 4.1 0 1 0 8.2 0a4.1 4.1 0 1 0 -8.2 0M790 771.5h5M792.5 769v5M548 562.5h7M531 575.5h7M774 527.5h7M397.4 108.5a4.1 4.1 0 1 0 8.2 0a4.1 4.1 0 1 0 -8.2 0M399 108.5h5M430 155.5h7M622 397.5h7" fill="none" stroke="#2a2a44" stroke-width="2.6" stroke-opacity="0.32" shape-rendering="auto"/>
<g fill="none" stroke-width="1.2" shape-rendering="auto" stroke-linecap="butt">
<path d="M144 24.5h7" stroke="#ffc81e"/>
<path d="M146 29.5h7" stroke="#ffc81e"/>
<path d="M136 32.5h7" stroke="#ff9414"/>
<path d="M144 38.5h7" stroke="#f06414"/>
<path d="M117 40.5h7M120.5 37v7" stroke="#ffc81e"/>
<path d="M117 44.5h7" stroke="#ffc81e"/>
<path d="M140 44.5h7" stroke="#ffe61e"/>
<path d="M140 46.5h7" stroke="#ffc81e"/>
<path d="M142 48.5h7" stroke="#f06414"/>
<path d="M111 50.5h7M114.5 47v7" stroke="#ffc81e"/>
<path d="M155.4 40.5a4.1 4.1 0 1 0 8.2 0a4.1 4.1 0 1 0 -8.2 0M157 40.5h5M159.5 38v5" stroke="#ffe61e"/>
<path d="M169.4 34.5a4.1 4.1 0 1 0 8.2 0a4.1 4.1 0 1 0 -8.2 0M171 34.5h5M173.5 32v5" stroke="#ffe61e"/>
<path d="M173.4 40.5a4.1 4.1 0 1 0 8.2 0a4.1 4.1 0 1 0 -8.2 0M175 40.5h5M177.5 38v5" stroke="#ff9414"/>
<path d="M186.4 41.5a4.1 4.1 0 1 0 8.2 0a4.1 4.1 0 1 0 -8.2 0M188 41.5h5M190.5 39v5" stroke="#ff9414"/>
<path d="M170.4 47.5a4.1 4.1 0 1 0 8.2 0a4.1 4.1 0 1 0 -8.2 0M172 47.5h5M174.5 45v5" stroke="#ffc81e"/>
<path d="M157.4 50.5a4.1 4.1 0 1 0 8.2 0a4.1 4.1 0 1 0 -8.2 0M159 50.5h5M161.5 48v5" stroke="#ff9414"/>
<path d="M152 50.5h7M155.5 47v7" stroke="#ff9414"/>
<path d="M149.4 55.5a4.1 4.1 0 1 0 8.2 0a4.1 4.1 0 1 0 -8.2 0M151 55.5h5M153.5 53v5" stroke="#ff9414"/>
<path d="M162.4 54.5a4.1 4.1 0 1 0 8.2 0a4.1 4.1 0 1 0 -8.2 0M164 54.5h5M166.5 52v5" stroke="#f06414"/>
<path d="M165.4 54.5a4.1 4.1 0 1 0 8.2 0a4.1 4.1 0 1 0 -8.2 0M167 54.5h5M169.5 52v5" stroke="#f06414"/>
<path d="M175.4 54.5a4.1 4.1 0 1 0 8.2 0a4.1 4.1 0 1 0 -8.2 0M177 54.5h5M179.5 52v5" stroke="#ff9414"/>
<path d="M158 58.5h7M161.5 55v7" stroke="#f06414"/>
<path d="M122.4 57.5a4.1 4.1 0 1 0 8.2 0a4.1 4.1 0 1 0 -8.2 0M124 57.5h5M126.5 55v5" stroke="#ffff1e"/>
<path d="M126 54.5h7M129.5 51v7" stroke="#ffc81e"/>
<path d="M138.4 59.5a4.1 4.1 0 1 0 8.2 0a4.1 4.1 0 1 0 -8.2 0M140 59.5h5M142.5 57v5" stroke="#ffff1e"/>
<path d="M131 60.5h7" stroke="#ffc81e"/>
<path d="M104.4 62.5a4.1 4.1 0 1 0 8.2 0a4.1 4.1 0 1 0 -8.2 0M106 62.5h5M108.5 60v5" stroke="#ffc81e"/>
<path d="M105 61.5h7" stroke="#ffc81e"/>
<path d="M111 61.5h7" stroke="#ffc81e"/>
<path d="M159.4 65.5a4.1 4.1 0 1 0 8.2 0a4.1 4.1 0 1 0 -8.2 0M161 65.5h5" stroke="#ffff1e"/>
<path d="M169.4 66.5a4.1 4.1 0 1 0 8.2 0a4.1 4.1 0 1 0 -8.2 0M171 66.5h5M173.5 64v5" stroke="#ff9414"/>
<path d="M99.4 74.5a4.1 4.1 0 1 0 8.2 0a4.1 4.1 0 1 0 -8.2 0M101 74.5h5" stroke="#ffc81e"/>
<path d="M122.4 74.5a4.1 4.1 0 1 0 8.2 0a4.1 4.1 0 1 0 -8.2 0M124 74.5h5M126.5 72v5" stroke="#ff9414"/>
<path d="M135 71.5h7" stroke="#ff9414"/>
<path d="M139.4 76.5a4.1 4.1 0 1 0 8.2 0a4.1 4.1 0 1 0 -8.2 0M141 76.5h5" stroke="#ffff1e"/>
<path d="M81.4 83.5a4.1 4.1 0 1 0 8.2 0a4.1 4.1 0 1 0 -8.2 0M83 83.5h5M85.5 81v5" stroke="#ffc81e"/>
<path d="M86.4 83.5a4.1 4.1 0 1 0 8.2 0a4.1 4.1 0 1 0 -8.2 0M88 83.5h5M90.5 81v5" stroke="#ffc81e"/>
<path d="M93.4 86.5a4.1 4.1 0 1 0 8.2 0a4.1 4.1 0 1 0 -8.2 0M95 86.5h5M97.5 84v5" stroke="#ffc81e"/>
<path d="M118 89.5h7" stroke="#ffff1e"/>
<path d="M145.4 90.5a4.1 4.1 0 1 0 8.2 0a4.1 4.1 0 1 0 -8.2 0M147 90.5h5M149.5 88v5" stroke="#f06414"/>
<path d="M101 95.5h7" stroke="#ff9414"/>
<path d="M80 98.5h7M83.5 95v7" stroke="#ffe61e"/>
<path d="M121 100.5h7" stroke="#ffff1e"/>
<path d="M113.4 106.5a4.1 4.1 0 1 0 8.2 0a4.1 4.1 0 1 0 -8.2 0M115 106.5h5M117.5 104v5" stroke="#f06414"/>
<path d="M195.4 82.5a4.1 4.1 0 1 0 8.2 0a4.1 4.1 0 1 0 -8.2 0M197 82.5h5M199.5 80v5" stroke="#ffe61e"/>
<path d="M172.4 92.5a4.1 4.1 0 1 0 8.2 0a4.1 4.1 0 1 0 -8.2 0M174 92.5h5M176.5 90v5" stroke="#ffc81e"/>
<path d="M167 95.5h7" stroke="#ffc81e"/>
<path d="M170 101.5h7" stroke="#ffc81e"/>
<path d="M188 100.5h7" stroke="#ffff1e"/>
<path d="M224 79.5h7" stroke="#ffff1e"/>
<path d="M215 48.5h7M218.5 45v7" stroke="#ff9414"/>
<path d="M233.4 33.5a4.1 4.1 0 1 0 8.2 0a4.1 4.1 0 1 0 -8.2 0M235 33.5h5" stroke="#f06414"/>
<path d="M194 102.5h7" stroke="#ffc81e"/>
<path d="M199 103.5h7" stroke="#e24a12"/>
<path d="M174 111.5h7" stroke="#ffff1e"/>
<path d="M164 114.5h7" stroke="#ffc81e"/>
<path d="M153 114.5h7M156.5 111v7" stroke="#ffe61e"/>
<path d="M148 117.5h7M151.5 114v7" stroke="#ffc81e"/>
<path d="M194 113.5h7" stroke="#ff9414"/>
<path d="M203.4 117.5a4.1 4.1 0 1 0 8.2 0a4.1 4.1 0 1 0 -8.2 0M205 117.5h5M207.5 115v5" stroke="#f06414"/>
<path d="M204 112.5h7M207.5 109v7" stroke="#f06414"/>
<path d="M185.4 123.5a4.1 4.1 0 1 0 8.2 0a4.1 4.1 0 1 0 -8.2 0M187 123.5h5M189.5 121v5" stroke="#f06414"/>
<path d="M184 129.5h7M187.5 126v7" stroke="#f06414"/>
<path d="M138 132.5h7M141.5 129v7" stroke="#ffc81e"/>
<path d="M169 42.5h7" stroke="#ff9414"/>
<path d="M166 31.5h7" stroke="#ff9414"/>
<path d="M605.4 23.5a4.1 4.1 0 1 0 8.2 0a4.1 4.1 0 1 0 -8.2 0M607 23.5h5" stroke="#ffc81e"/>
<path d="M630.4 15.5a4.1 4.1 0 1 0 8.2 0a4.1 4.1 0 1 0 -8.2 0M632 15.5h5" stroke="#ffff1e"/>
<path d="M649.4 23.5a4.1 4.1 0 1 0 8.2 0a4.1 4.1 0 1 0 -8.2 0M651 23.5h5" stroke="#f06414"/>
<path d="M696.4 9.5a4.1 4.1 0 1 0 8.2 0a4.1 4.1 0 1 0 -8.2 0M698 9.5h5" stroke="#ffc81e"/>
<path d="M645 33.5h7" stroke="#ffe61e"/>
<path d="M669.4 50.5a4.1 4.1 0 1 0 8.2 0a4.1 4.1 0 1 0 -8.2 0M671 50.5h5" stroke="#ffff1e"/>
<path d="M690.4 46.5a4.1 4.1 0 1 0 8.2 0a4.1 4.1 0 1 0 -8.2 0M692 46.5h5" stroke="#f06414"/>
<path d="M656 62.5h7" stroke="#ffc81e"/>
<path d="M576 67.5h7" stroke="#ffc81e"/>
<path d="M649.4 87.5a4.1 4.1 0 1 0 8.2 0a4.1 4.1 0 1 0 -8.2 0M651 87.5h5" stroke="#ff9414"/>
<path d="M643.4 92.5a4.1 4.1 0 1 0 8.2 0a4.1 4.1 0 1 0 -8.2 0M645 92.5h5M647.5 90v5" stroke="#ff9414"/>
<path d="M766.4 37.5a4.1 4.1 0 1 0 8.2 0a4.1 4.1 0 1 0 -8.2 0M768 37.5h5M770.5 35v5" stroke="#f06414"/>
<path d="M751.4 54.5a4.1 4.1 0 1 0 8.2 0a4.1 4.1 0 1 0 -8.2 0M753 54.5h5M755.5 52v5" stroke="#ffe61e"/>
<path d="M780.4 54.5a4.1 4.1 0 1 0 8.2 0a4.1 4.1 0 1 0 -8.2 0M782 54.5h5M784.5 52v5" stroke="#ff9414"/>
<path d="M748.4 72.5a4.1 4.1 0 1 0 8.2 0a4.1 4.1 0 1 0 -8.2 0M750 72.5h5M752.5 70v5" stroke="#ffc81e"/>
<path d="M791.4 75.5a4.1 4.1 0 1 0 8.2 0a4.1 4.1 0 1 0 -8.2 0M793 75.5h5M795.5 73v5" stroke="#ffe61e"/>
<path d="M763 88.5h7M766.5 85v7" stroke="#ff9414"/>
<path d="M787.4 90.5a4.1 4.1 0 1 0 8.2 0a4.1 4.1 0 1 0 -8.2 0M789 90.5h5M791.5 88v5" stroke="#ffe61e"/>
<path d="M759.4 97.5a4.1 4.1 0 1 0 8.2 0a4.1 4.1 0 1 0 -8.2 0M761 97.5h5M763.5 95v5" stroke="#ffe61e"/>
<path d="M784.4 119.5a4.1 4.1 0 1 0 8.2 0a4.1 4.1 0 1 0 -8.2 0M786 119.5h5M788.5 117v5" stroke="#ffc81e"/>
<path d="M799.4 112.5a4.1 4.1 0 1 0 8.2 0a4.1 4.1 0 1 0 -8.2 0M801 112.5h5M803.5 110v5" stroke="#ffc81e"/>
<path d="M780.4 144.5a4.1 4.1 0 1 0 8.2 0a4.1 4.1 0 1 0 -8.2 0M782 144.5h5M784.5 142v5" stroke="#ff9414"/>
<path d="M675.4 150.5a4.1 4.1 0 1 0 8.2 0a4.1 4.1 0 1 0 -8.2 0M677 150.5h5M679.5 148v5" stroke="#ff9414"/>
<path d="M712.4 166.5a4.1 4.1 0 1 0 8.2 0a4.1 4.1 0 1 0 -8.2 0M714 166.5h5M716.5 164v5" stroke="#ffe61e"/>
<path d="M723.4 177.5a4.1 4.1 0 1 0 8.2 0a4.1 4.1 0 1 0 -8.2 0M725 177.5h5" stroke="#ff9414"/>
<path d="M730 185.5h7" stroke="#ffc81e"/>
<path d="M632.4 180.5a4.1 4.1 0 1 0 8.2 0a4.1 4.1 0 1 0 -8.2 0M634 180.5h5" stroke="#ffc81e"/>
<path d="M629.4 186.5a4.1 4.1 0 1 0 8.2 0a4.1 4.1 0 1 0 -8.2 0M631 186.5h5M633.5 184v5" stroke="#ffff1e"/>
<path d="M615.4 195.5a4.1 4.1 0 1 0 8.2 0a4.1 4.1 0 1 0 -8.2 0M617 195.5h5M619.5 193v5" stroke="#ffe61e"/>
<path d="M631.4 196.5a4.1 4.1 0 1 0 8.2 0a4.1 4.1 0 1 0 -8.2 0M633 196.5h5" stroke="#ffe61e"/>
<path d="M640.4 195.5a4.1 4.1 0 1 0 8.2 0a4.1 4.1 0 1 0 -8.2 0M642 195.5h5M644.5 193v5" stroke="#ffe61e"/>
<path d="M648 193.5h7" stroke="#ff9414"/>
<path d="M649 200.5h7" stroke="#00e8ff"/>
<path d="M651 203.5h7" stroke="#ffe61e"/>
<path d="M671 194.5h7" stroke="#ff9414"/>
<path d="M659 206.5h7" stroke="#ff9414"/>
<path d="M636.4 210.5a4.1 4.1 0 1 0 8.2 0a4.1 4.1 0 1 0 -8.2 0M638 210.5h5M640.5 208v5" stroke="#ff9414"/>
<path d="M618 212.5h7" stroke="#ffe61e"/>
<path d="M671.4 223.5a4.1 4.1 0 1 0 8.2 0a4.1 4.1 0 1 0 -8.2 0M673 223.5h5M675.5 221v5" stroke="#ffe61e"/>
<path d="M695.4 222.5a4.1 4.1 0 1 0 8.2 0a4.1 4.1 0 1 0 -8.2 0M697 222.5h5" stroke="#ffe61e"/>
<path d="M661 147.5h7" stroke="#ffe61e"/>
<path d="M799 222.5h7" stroke="#ffc81e"/>
<path d="M682 248.5h7" stroke="#ffc81e"/>
<path d="M741.4 275.5a4.1 4.1 0 1 0 8.2 0a4.1 4.1 0 1 0 -8.2 0M743 275.5h5M745.5 273v5" stroke="#ffe61e"/>
<path d="M761.4 279.5a4.1 4.1 0 1 0 8.2 0a4.1 4.1 0 1 0 -8.2 0M763 279.5h5M765.5 277v5" stroke="#ffc81e"/>
<path d="M787.4 297.5a4.1 4.1 0 1 0 8.2 0a4.1 4.1 0 1 0 -8.2 0M789 297.5h5M791.5 295v5" stroke="#ffff1e"/>
<path d="M770.4 305.5a4.1 4.1 0 1 0 8.2 0a4.1 4.1 0 1 0 -8.2 0M772 305.5h5M774.5 303v5" stroke="#ffe61e"/>
<path d="M773.4 317.5a4.1 4.1 0 1 0 8.2 0a4.1 4.1 0 1 0 -8.2 0M775 317.5h5M777.5 315v5" stroke="#ff9414"/>
<path d="M785.4 319.5a4.1 4.1 0 1 0 8.2 0a4.1 4.1 0 1 0 -8.2 0M787 319.5h5M789.5 317v5" stroke="#ffff1e"/>
<path d="M785 326.5h7" stroke="#ffe61e"/>
<path d="M796.4 327.5a4.1 4.1 0 1 0 8.2 0a4.1 4.1 0 1 0 -8.2 0M798 327.5h5M800.5 325v5" stroke="#ffc81e"/>
<path d="M778.4 336.5a4.1 4.1 0 1 0 8.2 0a4.1 4.1 0 1 0 -8.2 0M780 336.5h5M782.5 334v5" stroke="#ffe61e"/>
<path d="M784.4 335.5a4.1 4.1 0 1 0 8.2 0a4.1 4.1 0 1 0 -8.2 0M786 335.5h5M788.5 333v5" stroke="#ffc81e"/>
<path d="M776 338.5h7" stroke="#ffc81e"/>
<path d="M697.4 312.5a4.1 4.1 0 1 0 8.2 0a4.1 4.1 0 1 0 -8.2 0M699 312.5h5M701.5 310v5" stroke="#ffc81e"/>
<path d="M723 334.5h7" stroke="#ffc81e"/>
<path d="M791.4 354.5a4.1 4.1 0 1 0 8.2 0a4.1 4.1 0 1 0 -8.2 0M793 354.5h5" stroke="#ffe61e"/>
<path d="M778.4 368.5a4.1 4.1 0 1 0 8.2 0a4.1 4.1 0 1 0 -8.2 0M780 368.5h5M782.5 366v5" stroke="#ffc81e"/>
<path d="M788.4 369.5a4.1 4.1 0 1 0 8.2 0a4.1 4.1 0 1 0 -8.2 0M790 369.5h5M792.5 367v5" stroke="#ffe61e"/>
<path d="M722.4 362.5a4.1 4.1 0 1 0 8.2 0a4.1 4.1 0 1 0 -8.2 0M724 362.5h5M726.5 360v5" stroke="#ffc81e"/>
<path d="M727.4 368.5a4.1 4.1 0 1 0 8.2 0a4.1 4.1 0 1 0 -8.2 0M729 368.5h5M731.5 366v5" stroke="#ff9414"/>
<path d="M748 367.5h7" stroke="#ff9414"/>
<path d="M752 372.5h7" stroke="#ff9414"/>
<path d="M715 373.5h7" stroke="#f06414"/>
<path d="M714 377.5h7" stroke="#ffe61e"/>
<path d="M721.4 379.5a4.1 4.1 0 1 0 8.2 0a4.1 4.1 0 1 0 -8.2 0M723 379.5h5M725.5 377v5" stroke="#ffe61e"/>
<path d="M727.4 386.5a4.1 4.1 0 1 0 8.2 0a4.1 4.1 0 1 0 -8.2 0M729 386.5h5" stroke="#ffe61e"/>
<path d="M734 383.5h7" stroke="#ffe61e"/>
<path d="M728.4 393.5a4.1 4.1 0 1 0 8.2 0a4.1 4.1 0 1 0 -8.2 0M730 393.5h5M732.5 391v5" stroke="#ffc81e"/>
<path d="M794.4 394.5a4.1 4.1 0 1 0 8.2 0a4.1 4.1 0 1 0 -8.2 0M796 394.5h5M798.5 392v5" stroke="#ffc81e"/>
<path d="M787.4 397.5a4.1 4.1 0 1 0 8.2 0a4.1 4.1 0 1 0 -8.2 0M789 397.5h5M791.5 395v5" stroke="#ffe61e"/>
<path d="M779.4 396.5a4.1 4.1 0 1 0 8.2 0a4.1 4.1 0 1 0 -8.2 0M781 396.5h5M783.5 394v5" stroke="#ffe61e"/>
<path d="M782.4 401.5a4.1 4.1 0 1 0 8.2 0a4.1 4.1 0 1 0 -8.2 0M784 401.5h5M786.5 399v5" stroke="#ffe61e"/>
<path d="M774.4 400.5a4.1 4.1 0 1 0 8.2 0a4.1 4.1 0 1 0 -8.2 0M776 400.5h5M778.5 398v5" stroke="#e24a12"/>
<path d="M797 402.5h7" stroke="#ffc81e"/>
<path d="M679 408.5h7" stroke="#ff9414"/>
<path d="M762.4 415.5a4.1 4.1 0 1 0 8.2 0a4.1 4.1 0 1 0 -8.2 0M764 415.5h5M766.5 413v5" stroke="#ff9414"/>
<path d="M788.4 423.5a4.1 4.1 0 1 0 8.2 0a4.1 4.1 0 1 0 -8.2 0M790 423.5h5M792.5 421v5" stroke="#ffc81e"/>
<path d="M797 424.5h7" stroke="#ffc81e"/>
<path d="M730.4 435.5a4.1 4.1 0 1 0 8.2 0a4.1 4.1 0 1 0 -8.2 0M732 435.5h5M734.5 433v5" stroke="#ffe61e"/>
<path d="M767.4 439.5a4.1 4.1 0 1 0 8.2 0a4.1 4.1 0 1 0 -8.2 0M769 439.5h5M771.5 437v5" stroke="#ff9414"/>
<path d="M710.4 449.5a4.1 4.1 0 1 0 8.2 0a4.1 4.1 0 1 0 -8.2 0M712 449.5h5M714.5 447v5" stroke="#ffc81e"/>
<path d="M613.4 287.5a4.1 4.1 0 1 0 8.2 0a4.1 4.1 0 1 0 -8.2 0M615 287.5h5M617.5 285v5" stroke="#ffe61e"/>
<path d="M557 600.5h7" stroke="#ff9414"/>
<path d="M574.4 608.5a4.1 4.1 0 1 0 8.2 0a4.1 4.1 0 1 0 -8.2 0M576 608.5h5M578.5 606v5" stroke="#ffff1e"/>
<path d="M601 604.5h7" stroke="#ffe61e"/>
<path d="M608 610.5h7" stroke="#ffe61e"/>
<path d="M587 618.5h7" stroke="#ffe61e"/>
<path d="M578 620.5h7" stroke="#ffc81e"/>
<path d="M603 619.5h7" stroke="#f06414"/>
<path d="M605.4 624.5a4.1 4.1 0 1 0 8.2 0a4.1 4.1 0 1 0 -8.2 0M607 624.5h5M609.5 622v5" stroke="#f06414"/>
<path d="M596 628.5h7" stroke="#ffe61e"/>
<path d="M620 627.5h7" stroke="#ffe61e"/>
<path d="M595.4 637.5a4.1 4.1 0 1 0 8.2 0a4.1 4.1 0 1 0 -8.2 0M597 637.5h5M599.5 635v5" stroke="#ffc81e"/>
<path d="M624.4 639.5a4.1 4.1 0 1 0 8.2 0a4.1 4.1 0 1 0 -8.2 0M626 639.5h5" stroke="#ffff1e"/>
<path d="M630 654.5h7" stroke="#ffc81e"/>
<path d="M624.4 666.5a4.1 4.1 0 1 0 8.2 0a4.1 4.1 0 1 0 -8.2 0M626 666.5h5M628.5 664v5" stroke="#f06414"/>
<path d="M606 671.5h7" stroke="#ff9414"/>
<path d="M615 673.5h7" stroke="#ffc81e"/>
<path d="M611 681.5h7M614.5 678v7" stroke="#ffe61e"/>
<path d="M614 678.5h7" stroke="#ffe61e"/>
<path d="M618 687.5h7" stroke="#ffe61e"/>
<path d="M596.4 711.5a4.1 4.1 0 1 0 8.2 0a4.1 4.1 0 1 0 -8.2 0M598 711.5h5M600.5 709v5" stroke="#ff9414"/>
<path d="M633 706.5h7" stroke="#ffc81e"/>
<path d="M621 722.5h7" stroke="#ff9414"/>
<path d="M654 655.5h7" stroke="#f06414"/>
<path d="M659 664.5h7" stroke="#ffe61e"/>
<path d="M662 672.5h7" stroke="#f06414"/>
<path d="M741.4 643.5a4.1 4.1 0 1 0 8.2 0a4.1 4.1 0 1 0 -8.2 0M743 643.5h5M745.5 641v5" stroke="#ff9414"/>
<path d="M708 667.5h7" stroke="#ff9414"/>
<path d="M741 666.5h7" stroke="#ffc81e"/>
<path d="M709 687.5h7" stroke="#ffc81e"/>
<path d="M685 697.5h7" stroke="#ffc81e"/>
<path d="M736.4 702.5a4.1 4.1 0 1 0 8.2 0a4.1 4.1 0 1 0 -8.2 0M738 702.5h5M740.5 700v5" stroke="#ffc81e"/>
<path d="M730.4 705.5a4.1 4.1 0 1 0 8.2 0a4.1 4.1 0 1 0 -8.2 0M732 705.5h5M734.5 703v5" stroke="#ffe61e"/>
<path d="M649 711.5h7" stroke="#f06414"/>
<path d="M678 718.5h7" stroke="#ffc81e"/>
<path d="M646.4 725.5a4.1 4.1 0 1 0 8.2 0a4.1 4.1 0 1 0 -8.2 0M648 725.5h5M650.5 723v5" stroke="#ffe61e"/>
<path d="M666.4 728.5a4.1 4.1 0 1 0 8.2 0a4.1 4.1 0 1 0 -8.2 0M668 728.5h5M670.5 726v5" stroke="#f06414"/>
<path d="M673 733.5h7" stroke="#ffc81e"/>
<path d="M665 737.5h7M668.5 734v7" stroke="#ffe61e"/>
<path d="M685.4 738.5a4.1 4.1 0 1 0 8.2 0a4.1 4.1 0 1 0 -8.2 0M687 738.5h5" stroke="#ffe61e"/>
<path d="M632 737.5h7" stroke="#ff9414"/>
<path d="M637 781.5h7" stroke="#f06414"/>
<path d="M724.4 766.5a4.1 4.1 0 1 0 8.2 0a4.1 4.1 0 1 0 -8.2 0M726 766.5h5M728.5 764v5" stroke="#f06414"/>
<path d="M788.4 771.5a4.1 4.1 0 1 0 8.2 0a4.1 4.1 0 1 0 -8.2 0M790 771.5h5M792.5 769v5" stroke="#ffff1e"/>
<path d="M548 562.5h7" stroke="#ffe61e"/>
<path d="M531 575.5h7" stroke="#ffc81e"/>
<path d="M774 527.5h7" stroke="#ffc81e"/>
<path d="M397.4 108.5a4.1 4.1 0 1 0 8.2 0a4.1 4.1 0 1 0 -8.2 0M399 108.5h5" stroke="#ffc81e"/>
<path d="M430 155.5h7" stroke="#ffe61e"/>
<path d="M622 397.5h7" stroke="#ff9414"/>
</g>
</svg>
</div>
<div style="position:absolute;left:9px;top:759px;width:240px;height:42px;border:1px solid #a4a4a4;outline:1px solid #5a5a5a;background:#000;box-sizing:content-box;margin:1px;width:240px;height:42px"></div>
<svg width="250" height="50" viewBox="8 758 250 50" style="position:absolute;left:8px;top:758px">
<g font-size="10" fill="#e4e4e4" font-family="Liberation Sans">
<text x="13.3" y="770.8" textLength="35" lengthAdjust="spacingAndGlyphs">Symbols</text><text x="53" y="770.8" textLength="16.7" lengthAdjust="spacingAndGlyphs">-CG</text><text x="77.7" y="770.8" textLength="14.3" lengthAdjust="spacingAndGlyphs">-IC</text><text x="99.4" y="770.8" textLength="19.4" lengthAdjust="spacingAndGlyphs">+CG</text><text x="124" y="770.8" textLength="17.2" lengthAdjust="spacingAndGlyphs">+IC</text>
<text x="153" y="770.8" textLength="90" lengthAdjust="spacingAndGlyphs">Strike age color codes</text>
<text x="13.3" y="783.8" textLength="28.5" lengthAdjust="spacingAndGlyphs">Recent</text><text x="13.3" y="796.6" textLength="14.5" lengthAdjust="spacingAndGlyphs">Old</text>
</g>
<g font-size="10" font-family="Liberation Sans">
<text x="153.5" y="783.8" fill="#ffe000" textLength="15.5" lengthAdjust="spacingAndGlyphs">15+</text><text x="188.5" y="783.8" fill="#ffb000" textLength="16" lengthAdjust="spacingAndGlyphs">30+</text><text x="223.4" y="783.8" fill="#ff9000" textLength="16" lengthAdjust="spacingAndGlyphs">45+</text>
<text x="153.5" y="796.6" fill="#ff7800" textLength="16" lengthAdjust="spacingAndGlyphs">60+</text><text x="188.5" y="796.6" fill="#ff5a00" textLength="16" lengthAdjust="spacingAndGlyphs">75+</text><text x="223.4" y="796.6" fill="#ff3000" textLength="16" lengthAdjust="spacingAndGlyphs">90+</text>
</g>
<g fill="none" stroke="#00e8ff" stroke-width="1.1">
<circle cx="60.5" cy="780.5" r="4.1"/><path d="M58 780.5h5"/><path d="M82 780.5h7"/>
<circle cx="110.5" cy="780.5" r="4.1"/><path d="M108 780.5h5M110.5 778v5"/><path d="M132 780.5h7M135.5 777v7"/>
</g>
<g fill="none" stroke="#ffff00" stroke-width="1.1">
<circle cx="60.5" cy="793.5" r="4.1"/><path d="M58 793.5h5"/><path d="M82 793.5h7"/>
<circle cx="110.5" cy="793.5" r="4.1"/><path d="M108 793.5h5M110.5 791v5"/><path d="M132 793.5h7M135.5 790v7"/>
</g>
</svg>
<div style="position:absolute;left:685px;top:792px;width:121px;height:14px;background:#000"></div>
<svg width="121" height="14" viewBox="685 792 121 14" style="position:absolute;left:685px;top:792px"><text x="689.5" y="802.5" font-size="10" fill="#f0f0f0" font-family="Liberation Sans" textLength="112" lengthAdjust="spacingAndGlyphs">©2005 Astrogenic Systems</text></svg>
<div id="p1" class="pn" style="left:812px;top:8px;width:318px;height:318px"></div>
<div id="p2" class="pn" style="left:812px;top:333px;width:318px;height:113px"></div>
<div id="p3" class="pn" style="left:812px;top:453px;width:318px;height:348px"></div>

<div class="btn" style="left:819px;top:16px;width:56px;height:16px;background:#5a0000;color:#d8d8d8;font-weight:bold;font-size:13px;line-height:18px;letter-spacing:0.15px">STRIKE</div>
<div class="btn" style="left:883px;top:16px;width:56px;height:16px;background:#333;color:#aaa;font-weight:bold;font-size:13px;line-height:18px;letter-spacing:0.15px">NOISE</div>
<div class="btn" style="left:994px;top:16px;width:126px;height:16px;background:#333"></div>
<div class="t b" style="left:999px;top:17px;font-size:13px;letter-spacing:0.6px;color:#fff">Bng 50°</div>
<div class="t b r" style="right:20px;top:17px;font-size:13px;letter-spacing:0.8px;color:#00ee00">250mi</div>

<div class="btn" style="left:821px;top:64px;width:80px;height:14px;background:#555;color:#e8e8e8;font-size:13px;line-height:14px">Strikes/min</div>
<div class="btn" style="left:931px;top:64px;width:80px;height:14px;background:#555;color:#e8e8e8;font-size:13px;line-height:14px">Close/min</div>
<div class="btn" style="left:1041px;top:64px;width:80px;height:14px;background:#555;color:#e8e8e8;font-size:13px;line-height:14px">Noises/min</div>

<div class="t b r big" style="right:238px;top:87px;color:#fff">1</div><div style="position:absolute;left:886px;top:108px;width:15px;height:4px;background:#fff"></div>
<div class="t b r big" style="right:125.5px;top:87px;color:#fff;transform:scaleX(1.1);transform-origin:100% 50%">0</div>
<div class="t b r big" style="right:19px;top:87px;color:#ffff00">1</div><div style="position:absolute;left:1106px;top:108px;width:15px;height:4px;background:#ffff00"></div>

<div class="t r" style="right:235px;top:131px;color:#fff">Total Strikes</div>
<div class="t r" style="right:235px;top:149px;color:#fff">267</div>
<div class="t r" style="right:125px;top:131px;color:#fff">Total Close</div>
<div class="t r" style="right:125px;top:149px;color:#fff">0</div>
<div class="t r" style="right:15px;top:131px;color:#bbb">Total Noises</div>
<div class="t r" style="right:15px;top:149px;color:#fff">32</div>

<div class="t" style="left:821px;top:203px;color:#bbb;letter-spacing:0.45px">Lightning type distribution</div>
<div style="position:absolute;left:821px;top:217px;width:303px;height:1px;background:#999"></div>

<div class="t b" style="left:821px;top:225px;color:#fff">Cloud-ground</div>
<div class="t" style="left:913px;top:225px;color:#fff">+</div>
<div class="bar" style="left:925px;top:227px"><i style="width:22px;background:#ff0000"></i></div>
<div class="t b" style="left:979px;top:225px;color:#fff;letter-spacing:1.2px">43%</div>
<div class="t b" style="left:1016px;top:224px;color:#fff">–</div>
<div class="bar" style="left:1028px;top:227px"><i style="width:5px;background:#aaddff"></i></div>
<div class="t b" style="left:1082px;top:225px;color:#fff;letter-spacing:1.2px">10%</div>
<div class="t b" style="left:821px;top:249px;color:#bbb">Count</div>
<div class="t b" style="left:925px;top:249px;color:#fff;letter-spacing:1.2px">115</div>
<div class="t b" style="left:1028px;top:249px;color:#fff;letter-spacing:1.2px">28</div>

<div class="t b" style="left:821px;top:278px;color:#fff">Intracloud</div>
<div class="t" style="left:913px;top:278px;color:#fff">+</div>
<div class="bar" style="left:925px;top:281px"><i style="width:4px;background:#ff69b4"></i></div>
<div class="t b" style="left:979px;top:278px;color:#fff;letter-spacing:1.2px">8%</div>
<div class="t b" style="left:1016px;top:277px;color:#fff">–</div>
<div class="bar" style="left:1028px;top:281px"><i style="width:19px;background:#00ff00"></i></div>
<div class="t b" style="left:1082px;top:278px;color:#fff;letter-spacing:1.2px">38%</div>
<div class="t b" style="left:821px;top:303px;color:#bbb">Count</div>
<div class="t b" style="left:925px;top:303px;color:#fff;letter-spacing:1.2px">22</div>
<div class="t b" style="left:1028px;top:303px;color:#fff;letter-spacing:1.2px">102</div>

<div class="t b" id="dt" style="left:822px;top:339px;font-size:16px;color:#00ee00;transform:scaleX(1.244);transform-origin:0 0;letter-spacing:0">10/23/2025 1:39:16 AM</div>
<div style="position:absolute;left:821px;top:358px;width:302px;height:1px;background:#777"></div>

<div class="t" style="left:821px;top:376px;color:#fff">Squelch</div>
<div class="t" style="left:909px;top:376px;color:#fff">0</div>
<div class="t" style="left:981px;top:376px;color:#fff">Upload</div>
<div class="t" style="left:1061px;top:376px;color:#bbb">Disabled</div>
<div class="t" style="left:821px;top:396px;color:#fff">Persistence</div>
<div class="t" style="left:909px;top:396px;color:#fff">90 min</div>
<div class="t" style="left:981px;top:396px;color:#fff">Capture</div>
<div class="t" style="left:1061px;top:396px;color:#00dd00">Active</div>
<div class="t" style="left:821px;top:416px;color:#fff">Range</div>
<div class="t" style="left:909px;top:416px;color:#fff">313 mi</div>
<div class="t" style="left:981px;top:416px;color:#fff">Receiver</div>
<div class="t" style="left:1061px;top:416px;color:#00dd00">Enabled</div>

<div class="t" style="left:821px;top:463px;color:#bbb">Uptime</div>
<div class="t" style="left:909px;top:463px;color:#fff">141:09</div>
<div class="t" style="left:981px;top:463px;color:#bbb">Peak time</div>
<div class="t" style="left:1061px;top:463px;color:#bbb">Plot</div>
<div class="t" style="left:821px;top:486px;color:#bbb">Peak rate</div>
<div class="t" style="left:909px;top:486px;color:#fff">9/min</div>
<div class="t" style="left:981px;top:486px;color:#fff">12:57 AM</div>
<div class="t" style="left:1061px;top:486px;color:#fff">Strike</div>
<div class="t" style="left:822px;top:516px;color:#bbb">Trend graph</div>
<div class="t" style="left:908px;top:516px;color:#fff">60 min</div>
<svg width="330" height="290" viewBox="808 520 330 290" style="position:absolute;left:808px;top:520px" shape-rendering="crispEdges">
<polyline points="822.5,777.2 824.5,777.2 826.5,777.2 828.5,777.2 830.5,777.2 832.5,777.2 834.5,769.4 836.5,777.2 838.5,777.2 840.5,777.2 842.5,777.2 844.5,777.2 846.5,769.4 848.5,777.2 850.5,777.2 852.5,777.2 854.5,777.2 856.5,777.2 858.5,777.2 860.5,777.2 862.5,769.4 864.5,777.2 866.5,777.2 868.5,777.2 870.5,777.2 872.5,777.2 874.5,777.2 876.5,777.2 878.5,769.4 880.5,769.4 882.5,777.2 884.5,769.4 886.5,777.2 888.5,777.2 890.5,777.2 892.5,777.2 894.5,769.4 896.5,769.4 898.5,769.4 900.5,777.2 902.5,777.2 904.5,777.2 906.5,769.4 908.5,769.4 910.5,777.2 912.5,777.2 914.5,777.2 916.5,777.2 918.5,777.2 920.5,769.4 922.5,777.2 924.5,769.4 926.5,777.2 928.5,777.2 930.5,777.2 932.5,769.4 934.5,777.2 936.5,769.4 938.5,777.2 940.5,777.2 942.5,777.2 944.5,777.2 946.5,769.4 948.5,777.2 950.5,777.2 952.5,777.2 954.5,777.2 956.5,777.2 958.5,769.4 960.5,777.2 962.5,777.2 964.5,777.2 966.5,777.2 968.5,777.2 970.5,769.4 972.5,777.2 974.5,777.2 976.5,777.2 978.5,769.4 980.5,777.2 982.5,777.2 984.5,777.2 986.5,777.2 988.5,777.2 990.5,777.2 992.5,777.2 994.5,777.2 996.5,777.2 998.5,777.2 1000.5,777.2 1002.5,777.2 1004.5,777.2 1006.5,777.2 1008.5,777.2 1010.5,777.2 1012.5,777.2 1014.5,777.2 1016.5,777.2 1018.5,777.2 1020.5,769.4 1022.5,777.2 1024.5,777.2 1026.5,777.2 1028.5,777.2 1030.5,777.2 1032.5,769.4 1034.5,777.2 1036.5,777.2 1038.5,777.2 1040.5,777.2 1042.5,777.2 1044.5,777.2 1046.5,777.2 1048.5,777.2 1050.5,777.2 1052.5,777.2 1054.5,777.2 1056.5,777.2 1058.5,777.2 1060.5,777.2 1062.5,777.2 1064.5,777.2 1066.5,777.2 1068.5,777.2 1070.5,777.2 1072.5,777.2 1074.5,777.2 1076.5,777.2 1078.5,777.2 1080.5,769.4 1082.5,777.2 1084.5,777.2 1086.5,777.2 1088.5,777.2" fill="none" stroke="#ff69b4" stroke-width="1"/>
<polyline points="822.5,777.2 824.5,777.2 826.5,777.2 828.5,777.2 830.5,777.2 832.5,777.2 834.5,777.2 836.5,777.2 838.5,777.2 840.5,777.2 842.5,777.2 844.5,777.2 846.5,777.2 848.5,777.2 850.5,769.4 852.5,777.2 854.5,777.2 856.5,777.2 858.5,769.4 860.5,777.2 862.5,777.2 864.5,777.2 866.5,777.2 868.5,777.2 870.5,777.2 872.5,777.2 874.5,777.2 876.5,777.2 878.5,777.2 880.5,777.2 882.5,777.2 884.5,777.2 886.5,777.2 888.5,777.2 890.5,777.2 892.5,777.2 894.5,777.2 896.5,769.4 898.5,777.2 900.5,777.2 902.5,777.2 904.5,777.2 906.5,777.2 908.5,769.4 910.5,777.2 912.5,777.2 914.5,777.2 916.5,777.2 918.5,777.2 920.5,777.2 922.5,777.2 924.5,777.2 926.5,777.2 928.5,777.2 930.5,777.2 932.5,777.2 934.5,777.2 936.5,777.2 938.5,777.2 940.5,777.2 942.5,777.2 944.5,769.4 946.5,761.6 948.5,777.2 950.5,777.2 952.5,777.2 954.5,777.2 956.5,777.2 958.5,777.2 960.5,761.6 962.5,761.6 964.5,777.2 966.5,769.4 968.5,777.2 970.5,777.2 972.5,777.2 974.5,777.2 976.5,777.2 978.5,777.2 980.5,777.2 982.5,777.2 984.5,777.2 986.5,769.4 988.5,777.2 990.5,769.4 992.5,777.2 994.5,777.2 996.5,777.2 998.5,777.2 1000.5,769.4 1002.5,777.2 1004.5,769.4 1006.5,761.6 1008.5,769.4 1010.5,769.4 1012.5,777.2 1014.5,761.6 1016.5,769.4 1018.5,761.6 1020.5,777.2 1022.5,769.4 1024.5,777.2 1026.5,777.2 1028.5,777.2 1030.5,777.2 1032.5,761.6 1034.5,777.2 1036.5,777.2 1038.5,761.6 1040.5,769.4 1042.5,769.4 1044.5,769.4 1046.5,769.4 1048.5,769.4 1050.5,769.4 1052.5,777.2 1054.5,777.2 1056.5,777.2 1058.5,777.2 1060.5,777.2 1062.5,777.2 1064.5,777.2 1066.5,777.2 1068.5,777.2 1070.5,777.2 1072.5,777.2 1074.5,777.2 1076.5,761.6 1078.5,769.4 1080.5,777.2 1082.5,769.4 1084.5,777.2 1086.5,761.6 1088.5,777.2" fill="none" stroke="#99ccff" stroke-width="1"/>
<polyline points="822.5,761.6 824.5,769.4 826.5,769.4 828.5,769.4 830.5,769.4 832.5,761.6 834.5,777.2 836.5,769.4 838.5,769.4 840.5,777.2 842.5,769.4 844.5,769.4 846.5,769.4 848.5,761.6 850.5,761.6 852.5,745.9 854.5,769.4 856.5,769.4 858.5,777.2 860.5,769.4 862.5,777.2 864.5,769.4 866.5,769.4 868.5,769.4 870.5,769.4 872.5,777.2 874.5,777.2 876.5,777.2 878.5,777.2 880.5,769.4 882.5,769.4 884.5,777.2 886.5,769.4 888.5,761.6 890.5,753.7 892.5,761.6 894.5,769.4 896.5,769.4 898.5,753.7 900.5,745.9 902.5,769.4 904.5,777.2 906.5,769.4 908.5,777.2 910.5,753.7 912.5,753.7 914.5,761.6 916.5,753.7 918.5,753.7 920.5,769.4 922.5,753.7 924.5,769.4 926.5,777.2 928.5,769.4 930.5,753.7 932.5,761.6 934.5,761.6 936.5,769.4 938.5,761.6 940.5,777.2 942.5,769.4 944.5,769.4 946.5,777.2 948.5,753.7 950.5,753.7 952.5,777.2 954.5,769.4 956.5,745.9 958.5,777.2 960.5,769.4 962.5,753.7 964.5,761.6 966.5,769.4 968.5,769.4 970.5,777.2 972.5,769.4 974.5,761.6 976.5,777.2 978.5,753.7 980.5,761.6 982.5,761.6 984.5,777.2 986.5,745.9 988.5,769.4 990.5,777.2 992.5,769.4 994.5,777.2 996.5,777.2 998.5,761.6 1000.5,777.2 1002.5,777.2 1004.5,777.2 1006.5,777.2 1008.5,769.4 1010.5,761.6 1012.5,761.6 1014.5,769.4 1016.5,761.6 1018.5,761.6 1020.5,777.2 1022.5,769.4 1024.5,777.2 1026.5,753.7 1028.5,769.4 1030.5,761.6 1032.5,769.4 1034.5,753.7 1036.5,761.6 1038.5,761.6 1040.5,761.6 1042.5,769.4 1044.5,769.4 1046.5,777.2 1048.5,769.4 1050.5,769.4 1052.5,761.6 1054.5,769.4 1056.5,761.6 1058.5,761.6 1060.5,769.4 1062.5,769.4 1064.5,769.4 1066.5,761.6 1068.5,761.6 1070.5,769.4 1072.5,777.2 1074.5,769.4 1076.5,769.4 1078.5,769.4 1080.5,769.4 1082.5,769.4 1084.5,745.9 1086.5,769.4 1088.5,761.6" fill="none" stroke="#ff0000" stroke-width="1.2"/>
<polyline points="822.5,769.4 824.5,769.4 826.5,777.2 828.5,777.2 830.5,769.4 832.5,769.4 834.5,769.4 836.5,777.2 838.5,769.4 840.5,761.6 842.5,777.2 844.5,769.4 846.5,777.2 848.5,777.2 850.5,761.6 852.5,761.6 854.5,753.7 856.5,777.2 858.5,777.2 860.5,769.4 862.5,761.6 864.5,761.6 866.5,761.6 868.5,769.4 870.5,777.2 872.5,777.2 874.5,769.4 876.5,769.4 878.5,769.4 880.5,753.7 882.5,753.7 884.5,761.6 886.5,777.2 888.5,769.4 890.5,769.4 892.5,769.4 894.5,777.2 896.5,761.6 898.5,761.6 900.5,761.6 902.5,753.7 904.5,761.6 906.5,769.4 908.5,769.4 910.5,769.4 912.5,777.2 914.5,777.2 916.5,777.2 918.5,777.2 920.5,769.4 922.5,777.2 924.5,777.2 926.5,761.6 928.5,769.4 930.5,777.2 932.5,761.6 934.5,761.6 936.5,761.6 938.5,769.4 940.5,761.6 942.5,777.2 944.5,769.4 946.5,769.4 948.5,769.4 950.5,769.4 952.5,753.7 954.5,761.6 956.5,777.2 958.5,753.7 960.5,753.7 962.5,769.4 964.5,753.7 966.5,769.4 968.5,777.2 970.5,769.4 972.5,761.6 974.5,769.4 976.5,753.7 978.5,777.2 980.5,761.6 982.5,753.7 984.5,753.7 986.5,769.4 988.5,753.7 990.5,761.6 992.5,769.4 994.5,777.2 996.5,777.2 998.5,769.4 1000.5,753.7 1002.5,753.7 1004.5,761.6 1006.5,777.2 1008.5,769.4 1010.5,777.2 1012.5,769.4 1014.5,769.4 1016.5,761.6 1018.5,777.2 1020.5,769.4 1022.5,777.2 1024.5,761.6 1026.5,769.4 1028.5,761.6 1030.5,761.6 1032.5,777.2 1034.5,777.2 1036.5,769.4 1038.5,769.4 1040.5,753.7 1042.5,761.6 1044.5,777.2 1046.5,777.2 1048.5,769.4 1050.5,769.4 1052.5,777.2 1054.5,769.4 1056.5,777.2 1058.5,777.2 1060.5,777.2 1062.5,777.2 1064.5,769.4 1066.5,769.4 1068.5,777.2 1070.5,777.2 1072.5,769.4 1074.5,769.4 1076.5,769.4 1078.5,761.6 1080.5,761.6 1082.5,753.7 1084.5,769.4 1086.5,777.2 1088.5,769.4" fill="none" stroke="#00ff00" stroke-width="1.2"/>
<polyline points="822.4,757.7 823.0,753.7 824.6,765.5 827.9,777.2 829.8,764.7 832.6,753.7 834.7,765.5 836.5,769.4 838.4,761.6 840.2,761.6 842.3,769.4 844.5,761.6 848.8,761.6 850.1,736.5 852.3,730.3 853.8,736.5 854.4,744.4 856.2,765.5 858.1,775.6 859.5,765.5 861.5,753.7 867.3,753.7 869.1,765.5 871.0,771.7 872.8,777.2 874.7,769.4 876.5,769.4 877.7,761.6 879.0,761.6 879.6,745.9 880.6,730.3 882.0,736.5 883.3,745.9 884.5,753.7 885.7,769.4 887.6,760.0 888.8,753.7 891.3,746.7 893.1,753.7 895.0,761.6 896.2,738.1 897.4,726.4 899.3,714.6 900.5,722.5 901.7,730.3 902.6,742.0 903.8,761.6 905.4,753.7 908.5,753.7 909.7,746.7 912.2,753.7 914.0,765.5 915.9,753.7 917.3,746.7 918.9,753.7 920.8,753.7 921.8,760.0 923.5,753.7 925.1,761.6 926.3,761.6 927.6,769.4 929.4,757.7 931.3,746.7 933.3,738.1 934.9,746.7 936.2,745.9 938.0,753.7 939.2,753.7 941.1,765.5 942.9,769.4 944.8,753.7 947.2,746.7 950.3,746.7 951.8,753.7 951.9,753.7 954.5,753.7 956.4,745.9 957.6,738.1 959.2,738.1 960.4,722.5 962.1,730.3 963.4,730.3 964.7,738.1 965.9,745.9 967.2,761.6 969.1,769.4 971.0,761.6 972.9,753.7 974.8,753.7 976.1,745.9 977.4,749.8 978.7,738.1 979.9,745.9 981.2,751.4 982.5,738.1 983.5,722.5 984.4,730.3 986.3,730.3 987.0,738.1 988.0,749.8 989.2,745.9 990.8,753.7 992.7,765.5 994.6,774.9 996.5,774.9 997.8,761.6 999.1,742.8 1000.3,734.2 1001.4,730.3 1002.5,738.1 1003.5,742.8 1004.8,761.6 1006.1,765.5 1007.3,753.7 1008.6,752.2 1009.9,746.7 1011.2,753.7 1012.4,757.7 1013.7,752.2 1015.0,745.9 1016.3,738.1 1018.2,745.9 1019.4,753.7 1021.4,761.6 1023.9,761.6 1025.2,753.7 1027.1,745.9 1028.4,752.2 1029.6,745.9 1030.9,751.4 1032.8,745.9 1034.1,752.2 1036.6,752.2 1037.9,742.8 1039.2,738.1 1040.5,730.3 1041.7,738.1 1043.0,749.8 1044.3,761.6 1046.2,775.6 1047.5,761.6 1048.1,753.7 1051.3,753.7 1052.6,761.6 1053.8,761.6 1055.5,753.7 1057.0,760.0 1058.9,765.5 1060.9,769.4 1062.8,765.5 1064.7,760.0 1066.6,753.7 1068.5,760.0 1070.4,769.4 1072.3,769.4 1074.2,760.0 1076.1,746.7 1078.1,746.7 1079.3,753.7 1081.2,746.7 1083.2,738.1 1084.4,730.3 1085.1,742.0 1086.3,753.7 1088.3,753.7" fill="none" stroke="#ffffff" stroke-width="1.1"/>
<path d="M822 777.5H1089 M1088.5 542V778" stroke="#c8c8c8" stroke-width="1" fill="none"/>
<path d="M1086 738.5H1090 M1084 699.5H1090 M1086 659.5H1090 M1084 620.5H1090 M1086 581.5H1090 M1084 542.5H1090 M1088.5 777V780 M1044.5 777V780 M1000.5 777V780 M955.5 777V780 M910.5 777V780 M866.5 777V780 M822.5 777V780" stroke="#c8c8c8" stroke-width="1" fill="none"/>
<g font-size="12" fill="#c8c8c8" shape-rendering="auto" letter-spacing="0.3">
<text x="1092" y="703.8">10</text>
<text x="1092" y="624.8">20</text>
<text x="1092" y="546.8">30</text>
<text x="820" y="792.5">60</text>
<text x="864" y="792.5">50</text>
<text x="908.5" y="792.5">40</text>
<text x="953" y="792.5">30</text>
<text x="997" y="792.5">20</text>
<text x="1041.5" y="792.5">10</text>
<text x="1087" y="792.5">0</text><text x="1100" y="792.5">min</text>
</g></svg>
</body></html>
